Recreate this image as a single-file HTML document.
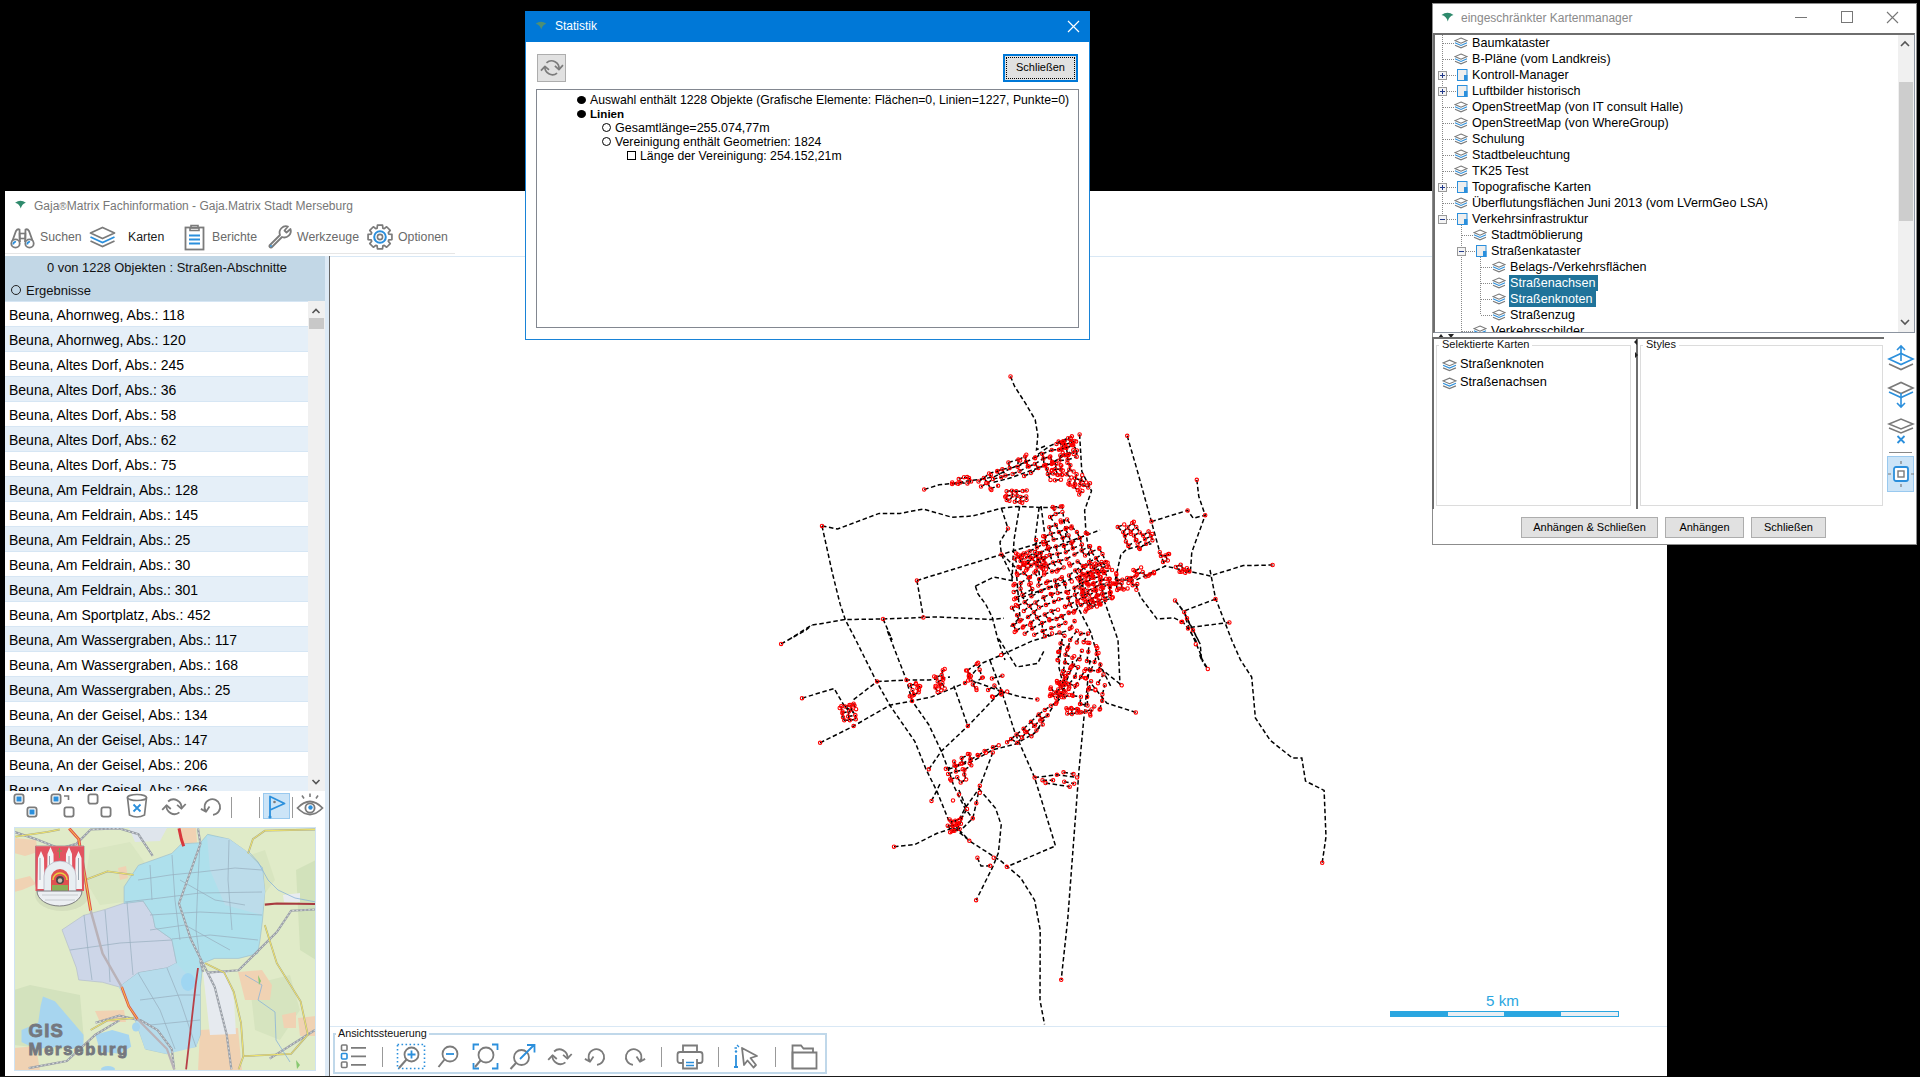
<!DOCTYPE html><html><head><meta charset="utf-8"><style>
*{margin:0;padding:0;box-sizing:border-box}
html,body{width:1920px;height:1077px;overflow:hidden;background:#000;font-family:"Liberation Sans",sans-serif;}
.abs{position:absolute}
.t{position:absolute;white-space:nowrap;line-height:1}
</style></head><body>
<div class="abs" style="left:5px;top:191px;width:1662px;height:886px;background:#fff"></div>
<svg class="abs" style="left:14px;top:200px" width="13" height="9" viewBox="0 0 13 10"><path d="M0.5,3 Q6.5,-1.5 12.5,3 Q8,4 6.8,9.5 Q5.5,4 0.5,3Z" fill="#2e8a6c"/></svg>
<div class="t" style="left:34px;top:200px;font-size:12px;color:#777">Gaja<span style="font-size:10px">®</span>Matrix Fachinformation - Gaja.Matrix Stadt Merseburg</div>
<div class="t" style="left:40px;top:231px;font-size:12.3px;color:#6a6a6a">Suchen</div>
<div class="t" style="left:128px;top:231px;font-size:12.3px;color:#1a1a1a">Karten</div>
<div class="t" style="left:212px;top:231px;font-size:12.3px;color:#6a6a6a">Berichte</div>
<div class="t" style="left:297px;top:231px;font-size:12.3px;color:#6a6a6a">Werkzeuge</div>
<div class="t" style="left:398px;top:231px;font-size:12.3px;color:#6a6a6a">Optionen</div>
<svg class="abs" style="left:9px;top:227px" width="27" height="22" viewBox="0 0 27 22"><path d="M3,15 L7,4 Q8.5,1.5 10.5,2.5 L11,15" fill="none" stroke="#7b7b7b" stroke-width="1.8"/><path d="M24,15 L20,4 Q18.5,1.5 16.5,2.5 L16,15" fill="none" stroke="#7b7b7b" stroke-width="1.8"/><rect x="10.5" y="6.5" width="6" height="5" fill="none" stroke="#7b7b7b" stroke-width="1.6"/><circle cx="6.5" cy="16.5" r="4.2" fill="#fff" stroke="#7b7b7b" stroke-width="1.8"/><circle cx="20.5" cy="16.5" r="4.2" fill="#fff" stroke="#7b7b7b" stroke-width="1.8"/><path d="M4.5,17.5 A2,2 0 0,1 7,15" stroke="#2b8fdc" stroke-width="1.8" fill="none"/><path d="M18.5,17.5 A2,2 0 0,1 21,15" stroke="#2b8fdc" stroke-width="1.8" fill="none"/></svg>
<svg class="abs" style="left:89px;top:226px" width="27" height="23" viewBox="0 0 27 23"><path d="M1.5,7 L13.5,1.5 L25.5,7 L13.5,12.5Z" fill="none" stroke="#7b7b7b" stroke-width="1.8" stroke-linejoin="round"/><path d="M1.5,11 L13.5,16.5 L25.5,11" fill="none" stroke="#2b8fdc" stroke-width="1.8"/><path d="M1.5,15 L13.5,20.5 L25.5,15" fill="none" stroke="#7b7b7b" stroke-width="1.8"/></svg>
<svg class="abs" style="left:184px;top:224px" width="21" height="27" viewBox="0 0 21 27"><rect x="1.5" y="3.5" width="18" height="22" fill="none" stroke="#7b7b7b" stroke-width="1.8"/><path d="M7,4 V1.5 H14 V4 M6,4 H15 V6.5 H6Z" fill="none" stroke="#7b7b7b" stroke-width="1.6"/><path d="M5,11.5 H16 M5,15.5 H16 M5,19.5 H16" stroke="#2b8fdc" stroke-width="1.8"/></svg>
<svg class="abs" style="left:266px;top:224px" width="27" height="27" viewBox="0 0 27 27"><path d="M3.5,21.5 L14,11 A6.5,6.5 0 0,1 22,2.5 L18.5,6.5 L20.5,8.5 L24.5,5 A6.5,6.5 0 0,1 16,13 L5.5,23.5 A1.5,1.5 0 0,1 3.5,21.5Z" fill="none" stroke="#7b7b7b" stroke-width="1.8" stroke-linejoin="round"/><circle cx="5" cy="22" r="0.9" fill="#2b8fdc"/></svg>
<svg class="abs" style="left:367px;top:224px" width="26" height="26" viewBox="0 0 26 26"><path d="M24.93,10.46 L24.93,15.54 L21.84,15.87 L21.29,17.22 L23.23,19.64 L19.64,23.23 L17.22,21.29 L15.87,21.84 L15.54,24.93 L10.46,24.93 L10.13,21.84 L8.78,21.29 L6.36,23.23 L2.77,19.64 L4.71,17.22 L4.16,15.87 L1.07,15.54 L1.07,10.46 L4.16,10.13 L4.71,8.78 L2.77,6.36 L6.36,2.77 L8.78,4.71 L10.13,4.16 L10.46,1.07 L15.54,1.07 L15.87,4.16 L17.22,4.71 L19.64,2.77 L23.23,6.36 L21.29,8.78 L21.84,10.13Z" fill="none" stroke="#7b7b7b" stroke-width="1.7" stroke-linejoin="round"/><circle cx="13" cy="13" r="5.8" fill="none" stroke="#2b8fdc" stroke-width="2"/><circle cx="13" cy="13" r="2.6" fill="none" stroke="#7b7b7b" stroke-width="1.6"/></svg>
<svg class="abs" style="left:13px;top:793px" width="26" height="27" viewBox="0 0 26 27"><rect x="1.4" y="1.4" width="9.2" height="9.2" rx="2" fill="#fff" stroke="#7b7b7b" stroke-width="1.8"/><rect x="3.5" y="3.5" width="5" height="5" fill="#2b8fdc"/><rect x="14.4" y="14.4" width="9.2" height="9.2" rx="2" fill="#fff" stroke="#7b7b7b" stroke-width="1.8"/><rect x="16.5" y="16.5" width="5" height="5" fill="#2b8fdc"/></svg>
<svg class="abs" style="left:50px;top:793px" width="26" height="27" viewBox="0 0 26 27"><rect x="1.4" y="1.4" width="9.2" height="9.2" rx="2" fill="#fff" stroke="#7b7b7b" stroke-width="1.8"/><rect x="3.5" y="3.5" width="5" height="5" fill="#2b8fdc"/><rect x="14.4" y="14.4" width="9.2" height="9.2" rx="2" fill="#fff" stroke="#7b7b7b" stroke-width="1.8"/><path d="M14,3 H18.5 V7" fill="none" stroke="#7b7b7b" stroke-width="1.6"/></svg>
<svg class="abs" style="left:87px;top:793px" width="26" height="27" viewBox="0 0 26 27"><rect x="1.4" y="1.4" width="9.2" height="9.2" rx="2" fill="#fff" stroke="#7b7b7b" stroke-width="1.8"/><rect x="14.4" y="14.4" width="9.2" height="9.2" rx="2" fill="#fff" stroke="#7b7b7b" stroke-width="1.8"/></svg>
<svg class="abs" style="left:125px;top:793px" width="24" height="27" viewBox="0 0 24 27"><ellipse cx="12" cy="4.5" rx="9.5" ry="3" fill="none" stroke="#7b7b7b" stroke-width="1.7"/><path d="M2.5,4.5 L4.5,22 Q12,26 19.5,22 L21.5,4.5" fill="none" stroke="#7b7b7b" stroke-width="1.7"/><path d="M8.5,11.5 L15.5,18.5 M15.5,11.5 L8.5,18.5" stroke="#2b8fdc" stroke-width="1.8"/></svg>
<svg class="abs" style="left:160px;top:793px" width="28" height="28" viewBox="0 0 28 28"><path d="M8.10,8.50 A8.0,8.0 0 0,1 21.40,15.50" fill="none" stroke="#7b7b7b" stroke-width="1.8"/><path d="M17.10,11.80 L21.40,15.70 L25.70,11.00" fill="none" stroke="#7b7b7b" stroke-width="1.8" stroke-linejoin="round"/><path d="M19.40,19.40 A8.0,8.0 0 0,1 6.50,12.40" fill="none" stroke="#7b7b7b" stroke-width="1.8"/><path d="M2.20,16.80 L6.50,12.30 L10.80,16.00" fill="none" stroke="#7b7b7b" stroke-width="1.8" stroke-linejoin="round"/></svg>
<svg class="abs" style="left:199px;top:793px" width="28" height="28" viewBox="0 0 28 28"><path d="M14.00,21.80 A7.8,7.8 0 1,0 7.00,18.60" fill="none" stroke="#7b7b7b" stroke-width="1.8"/><path d="M1.90,15.90 L7.00,18.70 L10.50,13.60" fill="none" stroke="#7b7b7b" stroke-width="1.8" stroke-linejoin="round"/></svg>
<div class="abs" style="left:231px;top:797px;width:1px;height:21px;background:#999"></div>
<div class="abs" style="left:259px;top:797px;width:1px;height:21px;background:#999"></div>
<div class="abs" style="left:292px;top:797px;width:1px;height:21px;background:#999"></div>
<div class="abs" style="left:263px;top:793px;width:27px;height:26px;background:#cce4f7;border:1px solid #99c9ef"></div>
<svg class="abs" style="left:263px;top:794px" width="27" height="26" viewBox="0 0 27 26"><path d="M7,24 V2.5 L21.5,9.5 L7,16" fill="none" stroke="#2b8fdc" stroke-width="1.8" stroke-linejoin="round"/><circle cx="7" cy="23" r="1.6" fill="#2b8fdc"/><circle cx="11.5" cy="8" r="1.3" fill="#7b7b7b"/></svg>
<svg class="abs" style="left:296px;top:792px" width="28" height="27" viewBox="0 0 28 27"><path d="M1.5,16 Q14,3 26.5,16 Q14,29 1.5,16Z" fill="none" stroke="#7b7b7b" stroke-width="1.8"/><circle cx="14" cy="16" r="4.6" fill="none" stroke="#7b7b7b" stroke-width="1.8"/><circle cx="14.5" cy="15.5" r="2.2" fill="#2b8fdc"/><path d="M14,1.5 V5 M6,3.5 L8,6.5 M22,3.5 L20,6.5" stroke="#7b7b7b" stroke-width="1.6"/></svg>
<svg class="abs" style="left:340px;top:1043px" width="28" height="27" viewBox="0 0 28 27"><rect x="1.5" y="2" width="5.5" height="5.5" rx="1" fill="none" stroke="#7b7b7b" stroke-width="1.6"/><rect x="1.5" y="10.5" width="5.5" height="5.5" rx="1" fill="none" stroke="#2b8fdc" stroke-width="1.6"/><rect x="1.5" y="19" width="5.5" height="5.5" rx="1" fill="none" stroke="#7b7b7b" stroke-width="1.6"/><path d="M11,4.8 H26 M11,13.3 H26 M11,21.8 H26" stroke="#7b7b7b" stroke-width="1.8"/></svg>
<div class="abs" style="left:382px;top:1047px;width:1px;height:20px;background:#999"></div>
<div class="abs" style="left:661px;top:1047px;width:1px;height:20px;background:#999"></div>
<div class="abs" style="left:718px;top:1047px;width:1px;height:20px;background:#999"></div>
<div class="abs" style="left:775px;top:1047px;width:1px;height:20px;background:#999"></div>
<svg class="abs" style="left:396px;top:1043px" width="31" height="28" viewBox="0 0 31 28"><rect x="1.5" y="1.5" width="27" height="24" fill="none" stroke="#2b8fdc" stroke-width="1.6" stroke-dasharray="1.6 2.4"/><circle cx="15.5" cy="11.5" r="7" fill="none" stroke="#7b7b7b" stroke-width="1.8"/><path d="M11.5,11.5 H19.5 M15.5,7.5 V15.5" stroke="#2b8fdc" stroke-width="1.8"/><path d="M10.5,16.5 L3,25" stroke="#7b7b7b" stroke-width="2"/></svg>
<svg class="abs" style="left:437px;top:1043px" width="24" height="28" viewBox="0 0 24 28"><circle cx="13" cy="11" r="7.5" fill="none" stroke="#7b7b7b" stroke-width="1.8"/><path d="M9,11 H17" stroke="#2b8fdc" stroke-width="1.8"/><path d="M7.5,16.5 L1.5,24" stroke="#7b7b7b" stroke-width="2"/></svg>
<svg class="abs" style="left:472px;top:1043px" width="28" height="28" viewBox="0 0 28 28"><path d="M1.5,7 V1.5 H7 M20,1.5 H25.5 V7 M25.5,20 V25.5 H20 M7,25.5 H1.5 V20" fill="none" stroke="#2b8fdc" stroke-width="1.8"/><circle cx="14" cy="12" r="7.5" fill="none" stroke="#7b7b7b" stroke-width="1.8"/><path d="M8.5,17.5 L3,24" stroke="#7b7b7b" stroke-width="2"/></svg>
<svg class="abs" style="left:509px;top:1043px" width="28" height="28" viewBox="0 0 28 28"><circle cx="12.5" cy="14.5" r="7.5" fill="none" stroke="#7b7b7b" stroke-width="1.8"/><path d="M7,20 L1.5,26" stroke="#7b7b7b" stroke-width="2"/><path d="M11,16 L25,2 M18,2 H25.5 V9.5" fill="none" stroke="#2b8fdc" stroke-width="1.8"/></svg>
<svg class="abs" style="left:546px;top:1043px" width="28" height="28" viewBox="0 0 28 28"><path d="M8.10,8.50 A8.0,8.0 0 0,1 21.40,15.50" fill="none" stroke="#7b7b7b" stroke-width="1.8"/><path d="M17.10,11.80 L21.40,15.70 L25.70,11.00" fill="none" stroke="#7b7b7b" stroke-width="1.8" stroke-linejoin="round"/><path d="M19.40,19.40 A8.0,8.0 0 0,1 6.50,12.40" fill="none" stroke="#7b7b7b" stroke-width="1.8"/><path d="M2.20,16.80 L6.50,12.30 L10.80,16.00" fill="none" stroke="#7b7b7b" stroke-width="1.8" stroke-linejoin="round"/></svg>
<svg class="abs" style="left:583px;top:1043px" width="28" height="28" viewBox="0 0 28 28"><path d="M14.00,21.80 A7.8,7.8 0 1,0 7.00,18.60" fill="none" stroke="#7b7b7b" stroke-width="1.8"/><path d="M1.90,15.90 L7.00,18.70 L10.50,13.60" fill="none" stroke="#7b7b7b" stroke-width="1.8" stroke-linejoin="round"/></svg>
<svg class="abs" style="left:619px;top:1043px" width="28" height="28" viewBox="0 0 28 28"><path d="M14.00,21.80 A7.8,7.8 0 1,1 21.00,18.60" fill="none" stroke="#7b7b7b" stroke-width="1.8"/><path d="M26.10,15.90 L21.00,18.70 L17.50,13.60" fill="none" stroke="#7b7b7b" stroke-width="1.8" stroke-linejoin="round"/></svg>
<svg class="abs" style="left:676px;top:1043px" width="28" height="28" viewBox="0 0 28 28"><path d="M7,9 V2.5 H21 V9" fill="none" stroke="#7b7b7b" stroke-width="1.8"/><rect x="1.5" y="9" width="25" height="11" rx="2.5" fill="none" stroke="#7b7b7b" stroke-width="1.8"/><path d="M7,16 V25.5 H21 V16" fill="#fff" stroke="#7b7b7b" stroke-width="1.8"/><path d="M10,19.5 H18 M10,22.5 H18" stroke="#2b8fdc" stroke-width="1.6"/></svg>
<svg class="abs" style="left:733px;top:1043px" width="28" height="28" viewBox="0 0 28 28"><path d="M3,12 V24 M1,24 H5" stroke="#2b8fdc" stroke-width="1.8"/><circle cx="3" cy="8.5" r="1.2" fill="#2b8fdc"/><path d="M9,5 L24,13 L17.5,15 L23,22 L20.5,24.5 L14.5,17.5 L11,22Z" fill="none" stroke="#7b7b7b" stroke-width="1.8" stroke-linejoin="round"/><path d="M4,2 L6,4 M1.5,5 H4" stroke="#2b8fdc" stroke-width="1.3"/></svg>
<svg class="abs" style="left:791px;top:1043px" width="28" height="28" viewBox="0 0 28 28"><path d="M1.5,25.5 V2.5 H10 L12.5,5.5 H22 V9" fill="none" stroke="#7b7b7b" stroke-width="1.8"/><path d="M1.5,9.5 H25.5 V25.5 H1.5Z" fill="none" stroke="#7b7b7b" stroke-width="1.8"/></svg>
<div class="abs" style="left:5px;top:253px;width:450px;height:1px;background:#e6e6e6"></div>
<div class="abs" style="left:5px;top:256px;width:320px;height:45px;background:#c2d7e6"></div>
<div class="t" style="left:7px;width:320px;text-align:center;top:262px;font-size:12.9px;color:#111">0 von 1228 Objekten : Straßen-Abschnitte</div>
<div class="abs" style="left:11px;top:285px;width:10px;height:10px;border:1px solid #222;border-radius:50%"></div>
<div class="t" style="left:26px;top:284px;font-size:13px;color:#111">Ergebnisse</div>
<div class="abs" style="left:5px;top:301px;width:303px;height:490px;overflow:hidden;background:#fff">
<div class="abs" style="left:0;top:0px;width:303px;height:25px;background:#fff;border-top:1px solid #d6e6f4"></div>
<div class="t" style="left:4px;top:7px;font-size:14px;color:#000">Beuna, Ahornweg, Abs.: 118</div>
<div class="abs" style="left:0;top:25px;width:303px;height:25px;background:#e5eff8;border-top:1px solid #d6e6f4"></div>
<div class="t" style="left:4px;top:32px;font-size:14px;color:#000">Beuna, Ahornweg, Abs.: 120</div>
<div class="abs" style="left:0;top:50px;width:303px;height:25px;background:#fff;border-top:1px solid #d6e6f4"></div>
<div class="t" style="left:4px;top:57px;font-size:14px;color:#000">Beuna, Altes Dorf, Abs.: 245</div>
<div class="abs" style="left:0;top:75px;width:303px;height:25px;background:#e5eff8;border-top:1px solid #d6e6f4"></div>
<div class="t" style="left:4px;top:82px;font-size:14px;color:#000">Beuna, Altes Dorf, Abs.: 36</div>
<div class="abs" style="left:0;top:100px;width:303px;height:25px;background:#fff;border-top:1px solid #d6e6f4"></div>
<div class="t" style="left:4px;top:107px;font-size:14px;color:#000">Beuna, Altes Dorf, Abs.: 58</div>
<div class="abs" style="left:0;top:125px;width:303px;height:25px;background:#e5eff8;border-top:1px solid #d6e6f4"></div>
<div class="t" style="left:4px;top:132px;font-size:14px;color:#000">Beuna, Altes Dorf, Abs.: 62</div>
<div class="abs" style="left:0;top:150px;width:303px;height:25px;background:#fff;border-top:1px solid #d6e6f4"></div>
<div class="t" style="left:4px;top:157px;font-size:14px;color:#000">Beuna, Altes Dorf, Abs.: 75</div>
<div class="abs" style="left:0;top:175px;width:303px;height:25px;background:#e5eff8;border-top:1px solid #d6e6f4"></div>
<div class="t" style="left:4px;top:182px;font-size:14px;color:#000">Beuna, Am Feldrain, Abs.: 128</div>
<div class="abs" style="left:0;top:200px;width:303px;height:25px;background:#fff;border-top:1px solid #d6e6f4"></div>
<div class="t" style="left:4px;top:207px;font-size:14px;color:#000">Beuna, Am Feldrain, Abs.: 145</div>
<div class="abs" style="left:0;top:225px;width:303px;height:25px;background:#e5eff8;border-top:1px solid #d6e6f4"></div>
<div class="t" style="left:4px;top:232px;font-size:14px;color:#000">Beuna, Am Feldrain, Abs.: 25</div>
<div class="abs" style="left:0;top:250px;width:303px;height:25px;background:#fff;border-top:1px solid #d6e6f4"></div>
<div class="t" style="left:4px;top:257px;font-size:14px;color:#000">Beuna, Am Feldrain, Abs.: 30</div>
<div class="abs" style="left:0;top:275px;width:303px;height:25px;background:#e5eff8;border-top:1px solid #d6e6f4"></div>
<div class="t" style="left:4px;top:282px;font-size:14px;color:#000">Beuna, Am Feldrain, Abs.: 301</div>
<div class="abs" style="left:0;top:300px;width:303px;height:25px;background:#fff;border-top:1px solid #d6e6f4"></div>
<div class="t" style="left:4px;top:307px;font-size:14px;color:#000">Beuna, Am Sportplatz, Abs.: 452</div>
<div class="abs" style="left:0;top:325px;width:303px;height:25px;background:#e5eff8;border-top:1px solid #d6e6f4"></div>
<div class="t" style="left:4px;top:332px;font-size:14px;color:#000">Beuna, Am Wassergraben, Abs.: 117</div>
<div class="abs" style="left:0;top:350px;width:303px;height:25px;background:#fff;border-top:1px solid #d6e6f4"></div>
<div class="t" style="left:4px;top:357px;font-size:14px;color:#000">Beuna, Am Wassergraben, Abs.: 168</div>
<div class="abs" style="left:0;top:375px;width:303px;height:25px;background:#e5eff8;border-top:1px solid #d6e6f4"></div>
<div class="t" style="left:4px;top:382px;font-size:14px;color:#000">Beuna, Am Wassergraben, Abs.: 25</div>
<div class="abs" style="left:0;top:400px;width:303px;height:25px;background:#fff;border-top:1px solid #d6e6f4"></div>
<div class="t" style="left:4px;top:407px;font-size:14px;color:#000">Beuna, An der Geisel, Abs.: 134</div>
<div class="abs" style="left:0;top:425px;width:303px;height:25px;background:#e5eff8;border-top:1px solid #d6e6f4"></div>
<div class="t" style="left:4px;top:432px;font-size:14px;color:#000">Beuna, An der Geisel, Abs.: 147</div>
<div class="abs" style="left:0;top:450px;width:303px;height:25px;background:#fff;border-top:1px solid #d6e6f4"></div>
<div class="t" style="left:4px;top:457px;font-size:14px;color:#000">Beuna, An der Geisel, Abs.: 206</div>
<div class="abs" style="left:0;top:475px;width:303px;height:25px;background:#e5eff8;border-top:1px solid #d6e6f4"></div>
<div class="t" style="left:4px;top:482px;font-size:14px;color:#000">Beuna, An der Geisel, Abs.: 266</div>
</div>
<div class="abs" style="left:308px;top:301px;width:17px;height:490px;background:#f0f0f0"></div>
<div class="abs" style="left:309px;top:318px;width:15px;height:11px;background:#c8c8c8"></div>
<svg class="abs" style="left:311px;top:307px" width="10" height="8" viewBox="0 0 10 8"><path d="M1.5,6 L5,2.5 L8.5,6" fill="none" stroke="#555" stroke-width="1.6"/></svg>
<svg class="abs" style="left:311px;top:778px" width="10" height="8" viewBox="0 0 10 8"><path d="M1.5,2 L5,5.5 L8.5,2" fill="none" stroke="#555" stroke-width="1.6"/></svg>
<div class="abs" style="left:325px;top:256px;width:4px;height:821px;background:#ddeaf6"></div>
<div class="abs" style="left:329px;top:256px;width:1px;height:821px;background:#666"></div>
<div class="abs" style="left:330px;top:256px;width:1337px;height:1px;background:#d9e8f5"></div>
<div class="abs" style="left:330px;top:1026px;width:1337px;height:1px;background:#d9e8f5"></div>
<div class="t" style="left:1486px;top:993px;font-size:15.2px;color:#2aa6e0">5 km</div>
<div class="abs" style="left:1390px;top:1011px;width:229px;height:6px;background:#e8eef4;border:1px solid #2aa6e0"></div>
<div class="abs" style="left:1390px;top:1011px;width:58px;height:6px;background:#2aa6e0"></div>
<div class="abs" style="left:1504px;top:1011px;width:57px;height:6px;background:#2aa6e0"></div>
<div class="abs" style="left:333px;top:1033px;width:494px;height:41px;border:2px solid #c0d8ea"></div>
<div class="t" style="left:336px;top:1028px;font-size:10.8px;color:#111;background:#fff;padding:0 2px">Ansichtssteuerung</div>
<svg class="abs" style="left:0;top:0" width="1920" height="1077" viewBox="0 0 1920 1077">
<path d="M1010.5,376.4 L1014.4,386.0 L1026.0,404.2 L1035.2,419.8 L1037.8,435.4 L1036.5,449.7 L1045.0,446.0 M924.2,489.5 L939.0,484.8 L952.0,483.5 L967.6,481.0 L978.0,479.6 L993.6,477.0 L1009.2,469.2 L1030.0,460.1 L1050.0,445.8 L1068.0,438.0 M993.6,482.2 L1009.2,478.3 L1027.4,471.8 L1050.0,464.0 L1070.0,452.0 M822.0,525.9 L837.6,529.0 L879.2,513.4 L900.0,513.4 L923.4,509.0 L952.0,517.3 L972.8,516.0 L1001.4,508.2 L1019.6,506.4 L1039.1,507.4 L1060.0,507.4 M822.0,525.9 L832.4,573.2 L840.2,604.4 L845.4,620.0 L855.8,640.0 L875.8,680.1 L889.8,705.2 L914.8,741.4 L926.0,769.3 L937.1,791.6 L948.3,819.4 L953.8,827.8 M916.9,580.5 L1001.4,554.5 L1043.0,542.0 M916.9,580.5 L923.4,617.4 M788.2,640.0 L811.6,625.2 L845.4,619.5 L883.1,619.0 L923.4,617.4 L936.4,616.9 L991.0,619.5 L1004.0,618.2 M883.1,619.0 L892.2,640.0 L887.0,630.0 L906.5,680.1 L912.1,701.0 L928.8,724.7 L941.3,751.2 L948.3,769.3 L953.8,786.0 L965.0,808.3 L973.3,819.4 M975.4,586.2 L993.6,577.1 L1014.4,581.0 M975.4,586.2 L978.0,594.0 L985.8,604.4 L992.3,617.4 L998.0,640.0 L1005.0,660.0 M1001.4,508.2 L1008.0,528.5 L1000.0,542.0 L1001.4,554.5 L1008.0,568.0 L1014.0,580.0 M1019.6,506.4 L1014.0,540.0 L1012.0,580.0 M1039.1,507.4 L1035.0,540.0 L1040.0,580.0 M781.1,643.9 L806.2,630.0 L811.6,625.2 M802.0,698.2 L834.1,688.5 L843.8,705.2 L853.6,713.0 M877.2,681.5 L906.5,680.1 L928.8,680.1 L950.0,677.0 M853.6,699.6 L877.2,681.5 M820.1,742.8 L853.6,726.1 L889.8,705.2 L912.1,701.0 L931.6,696.9 L965.0,682.9 L981.7,663.4 L1001.2,655.1 L1031.8,641.1 L1070.0,630.0 M928.8,769.3 L941.3,751.2 L967.8,726.1 L1001.2,691.3 L1020.7,696.9 L1037.4,699.6 M953.8,685.7 L967.8,726.1 M970.6,680.1 L1001.2,691.3 M990.0,660.6 L1001.2,689.9 L1015.1,733.1 L1034.6,777.6 L1055.5,845.9 L1006.8,866.8 M948.3,769.3 L973.3,760.9 L992.8,749.8 L1015.1,744.2 L1034.6,733.1 L1048.6,713.6 L1062.5,691.3 L1070.0,671.8 L1080.0,655.0 M992.8,752.6 L978.9,788.8 L965.0,808.3 L956.6,825.0 M978.9,788.8 L995.6,808.3 L1001.2,825.0 L998.4,852.8 L992.8,866.8 L976.1,900.2 M894.0,846.7 L914.8,844.5 L937.1,833.3 L953.8,827.8 L970.6,841.7 L1001.2,861.2 L1020.7,877.9 L1034.6,900.2 L1040.2,930.0 L1040.0,1000.2 L1044.5,1024.3 M1034.6,777.6 L1056.9,774.8 L1077.1,777.4 M1045.6,783.0 L1069.7,786.7 M1090.0,660.0 L1084.6,710.6 L1079.0,770.0 L1073.4,844.2 L1067.8,918.5 L1061.2,979.8 M1210.0,570.0 L1215.5,598.2 L1232.2,641.3 L1240.5,660.0 L1251.7,677.1 L1255.4,718.0 L1270.2,740.3 L1292.5,758.1 L1301.8,758.1 L1305.5,781.1 L1324.1,790.4 L1326.0,836.8 L1322.2,862.8 M1185.0,615.0 L1200.2,644.1 L1201.6,660.0 L1199.7,654.9 L1207.8,669.0 M1092.0,684.6 L1106.8,703.1 L1135.8,712.4 M1100.0,668.0 L1121.7,685.3 M1079.6,434.4 L1081.8,471.4 L1091.5,490.9 L1084.6,510.4 L1086.0,532.7 L1090.0,560.0 M1127.2,435.8 L1137.5,471.4 L1151.4,521.6 L1159.8,552.2 L1165.0,566.0 M1151.4,521.6 L1187.6,510.4 L1193.2,518.2 L1205.2,515.2 L1191.8,552.2 L1190.4,571.7 L1209.9,575.9 L1243.3,565.6 L1272.6,565.0 M1196.8,479.8 L1198.8,496.5 L1205.2,515.2 M1115.2,580.0 L1136.1,580.0 L1165.3,566.1 L1190.4,571.7 M1136.1,585.6 L1140.3,596.8 L1157.0,619.0 L1173.7,617.7 L1182.1,621.8 M1175.7,601.0 L1184.8,613.5 L1200.2,644.1 M1184.8,610.7 L1215.5,599.0 M1190.4,627.4 L1229.4,622.4 M1115.2,580.0 L1120.8,555.0 L1126.4,549.4 L1137.5,546.6 L1151.4,543.8 M1104.0,600.0 L1118.0,640.0 L1120.0,685.0 M1002.0,554.0 L1016.0,568.0 L1020.0,617.6 L1009.0,628.0 M1041.0,506.0 L1045.0,536.0 L1052.0,561.0 M1062.0,505.0 L1066.0,536.0 M998.8,638.8 L1016.4,667.0 L1037.6,663.5 L1044.7,649.4 M1076.0,603.5 L1090.5,631.7 L1101.0,667.0 L1111.7,688.0 M1062.0,638.8 L1058.8,667.0 L1065.8,695.0 M1020.0,560.0 L1060.0,545.0 L1100.0,530.0 M1015.0,600.0 L1055.0,585.0 L1110.0,565.0 M1175.0,600.5 L1184.7,612.2 L1186.0,619.2 L1188.9,627.5 L1195.8,642.8 L1200.0,652.6 L1202.8,662.3 L1207.5,668.7 M1182.0,620.6 L1190.3,631.7 L1197.2,642.8 M979.8,785.8 L976.3,803.2 L972.8,818.3 L963.5,827.5 L952.0,830.0 M958.9,790.0 L967.0,809.0 L959.0,823.0 M931.5,800.9 L937.0,790.0 L941.0,782.0 M949.6,819.4 L969.3,840.8 M977.4,857.7 L981.0,866.0 L990.2,865.8 M978.5,481.6 L983.8,478.0 M981.0,486.6 L987.6,482.9 M983.8,478.0 L989.1,473.5 M983.8,478.0 L987.6,482.9 M987.6,482.9 L993.0,479.1 M987.6,482.9 L990.5,488.8 M990.5,488.8 L998.1,485.8 M989.1,473.5 L997.3,471.0 M989.1,473.5 L993.0,479.1 M993.0,479.1 L1001.2,477.3 M997.3,471.0 L1002.3,469.3 M997.3,471.0 L1001.2,477.3 M1001.2,477.3 L1005.5,475.5 M1002.3,469.3 L1009.7,468.1 M1002.3,469.3 L1005.5,475.5 M1005.5,475.5 L1012.6,474.0 M1008.4,462.4 L1018.4,459.6 M1008.4,462.4 L1009.7,468.1 M1009.7,468.1 L1017.6,466.8 M1012.6,474.0 L1019.5,471.1 M1018.4,459.6 L1025.1,456.4 M1018.4,459.6 L1017.6,466.8 M1017.6,466.8 L1026.0,461.7 M1019.5,471.1 L1028.7,466.6 M1024.1,476.1 L1031.0,473.0 M1025.1,456.4 L1026.0,461.7 M1026.0,461.7 L1035.2,457.5 M1026.0,461.7 L1028.7,466.6 M1028.7,466.6 L1034.8,463.9 M1031.0,473.0 L1038.3,467.9 M1035.2,457.5 L1042.2,453.9 M1034.8,463.9 L1043.5,458.5 M1034.8,463.9 L1038.3,467.9 M1038.3,467.9 L1044.1,465.5 M1042.2,453.9 L1051.8,450.0 M1042.2,453.9 L1043.5,458.5 M1043.5,458.5 L1050.3,456.5 M1043.5,458.5 L1044.1,465.5 M1044.1,465.5 L1052.1,461.8 M1051.8,450.0 L1060.0,449.4 M1050.3,456.5 L1052.1,461.8 M1052.1,461.8 L1059.4,460.6 M1056.5,443.9 L1062.4,441.9 M1060.0,449.4 L1066.4,448.1 M1060.3,455.5 L1067.6,454.6 M1060.3,455.5 L1059.4,460.6 M1059.4,460.6 L1067.5,459.9 M1062.4,441.9 L1070.9,439.5 M1062.4,441.9 L1066.4,448.1 M1066.4,448.1 L1073.3,445.2 M1066.4,448.1 L1067.6,454.6 M1067.6,454.6 L1076.9,450.5 M1067.6,454.6 L1067.5,459.9 M1067.5,459.9 L1076.7,456.7 M1070.9,439.5 L1073.3,445.2 M1073.3,445.2 L1076.9,450.5 M1076.9,450.5 L1076.7,456.7 M1058.9,449.8 L1062.5,448.7 M1058.6,441.6 L1063.2,441.2 M1058.6,441.6 L1062.4,446.0 M1062.4,446.0 L1065.0,444.4 M1062.4,446.0 L1062.5,448.7 M1062.5,448.7 L1066.6,447.3 M1062.8,453.0 L1065.0,455.2 M1065.0,455.2 L1068.8,454.6 M1063.2,441.2 L1068.1,438.2 M1063.2,441.2 L1065.0,444.4 M1065.0,444.4 L1070.9,442.9 M1065.0,444.4 L1066.6,447.3 M1066.6,447.3 L1072.7,445.2 M1068.1,438.2 L1071.9,436.3 M1068.1,438.2 L1070.9,442.9 M1070.9,442.9 L1074.3,440.9 M1070.9,442.9 L1072.7,445.2 M1073.2,450.3 L1073.7,453.9 M952.1,484.1 L957.4,483.6 M957.4,483.6 L960.3,482.6 M958.7,479.1 L964.0,477.2 M960.3,482.6 L967.4,483.5 M964.0,477.2 L969.0,478.0 M967.4,483.5 L971.1,481.5 M969.0,478.0 L971.1,481.5 M1006.6,491.2 L1011.9,490.7 M1006.3,495.7 L1012.7,495.5 M1006.3,495.7 L1006.7,499.9 M1006.7,499.9 L1009.4,500.8 M1011.9,490.7 L1016.2,491.2 M1011.9,490.7 L1012.7,495.5 M1012.7,495.5 L1009.4,500.8 M1016.2,491.2 L1022.7,491.1 M1016.2,491.2 L1017.2,495.8 M1017.2,495.8 L1014.8,501.8 M1014.8,501.8 L1020.3,502.1 M1022.7,491.1 L1026.7,490.4 M1020.7,496.9 L1026.3,496.5 M1020.7,496.9 L1020.3,502.1 M1020.3,502.1 L1026.5,499.9 M1026.3,496.5 L1026.5,499.9 M1045.2,465.1 L1051.8,463.9 M1045.2,465.1 L1046.9,468.8 M1046.9,468.8 L1047.8,473.9 M1047.8,473.9 L1053.1,473.6 M1047.8,473.9 L1050.5,479.9 M1051.8,463.9 L1056.2,463.8 M1052.0,470.1 L1055.3,469.1 M1053.1,473.6 L1058.0,474.9 M1055.0,480.3 L1060.9,479.7 M1056.2,463.8 L1055.3,469.1 M1055.3,469.1 L1060.8,469.4 M1055.3,469.1 L1058.0,474.9 M1058.0,474.9 L1062.2,474.9 M1061.3,465.5 L1060.8,469.4 M1060.8,469.4 L1062.2,474.9 M1013.3,624.9 L1019.6,621.2 M1013.3,624.9 L1016.1,630.6 M1016.1,630.6 L1023.4,626.6 M1011.9,607.7 L1017.5,605.9 M1011.9,607.7 L1017.1,615.3 M1017.1,615.3 L1019.6,621.2 M1019.6,621.2 L1028.1,617.0 M1023.4,626.6 L1030.9,622.8 M1024.7,633.7 L1032.1,628.4 M1013.5,585.2 L1020.7,583.0 M1013.7,591.9 L1020.6,588.7 M1015.9,597.9 L1022.4,594.8 M1017.5,605.9 L1024.6,602.2 M1023.8,611.0 L1029.5,606.0 M1028.1,617.0 L1033.8,612.3 M1030.9,622.8 L1037.0,617.5 M1030.9,622.8 L1032.1,628.4 M1032.1,628.4 L1042.0,623.1 M1034.2,634.7 L1042.7,631.0 M1017.4,575.0 L1023.9,572.9 M1020.7,583.0 L1028.8,577.5 M1020.7,583.0 L1020.6,588.7 M1020.6,588.7 L1022.4,594.8 M1022.4,594.8 L1032.3,589.1 M1022.4,594.8 L1024.6,602.2 M1024.6,602.2 L1031.5,596.2 M1024.6,602.2 L1029.5,606.0 M1029.5,606.0 L1035.4,602.5 M1029.5,606.0 L1033.8,612.3 M1033.8,612.3 L1039.1,607.6 M1033.8,612.3 L1037.0,617.5 M1037.0,617.5 L1044.7,614.6 M1037.0,617.5 L1042.0,623.1 M1042.0,623.1 L1049.3,620.3 M1042.0,623.1 L1042.7,631.0 M1042.7,631.0 L1051.4,628.1 M1042.7,631.0 L1044.9,636.2 M1044.9,636.2 L1052.0,633.5 M1014.8,558.4 L1022.1,554.9 M1014.8,558.4 L1018.4,566.9 M1018.4,566.9 L1023.9,572.9 M1023.9,572.9 L1028.8,577.5 M1028.8,577.5 L1034.4,572.4 M1028.8,577.5 L1029.3,584.6 M1029.3,584.6 L1032.3,589.1 M1032.3,589.1 L1031.5,596.2 M1031.5,596.2 L1041.2,590.9 M1035.4,602.5 L1043.6,597.3 M1035.4,602.5 L1039.1,607.6 M1039.1,607.6 L1045.9,604.7 M1044.7,614.6 L1051.4,610.9 M1044.7,614.6 L1049.3,620.3 M1049.3,620.3 L1056.5,619.1 M1051.4,628.1 L1058.8,625.6 M1022.1,554.9 L1029.6,551.2 M1025.1,562.7 L1031.1,558.1 M1034.4,572.4 L1041.4,567.7 M1034.4,572.4 L1039.1,579.2 M1039.1,579.2 L1044.1,574.5 M1039.1,579.2 L1038.3,585.6 M1038.3,585.6 L1047.6,581.6 M1041.2,590.9 L1048.6,587.8 M1043.6,597.3 L1050.7,593.9 M1043.6,597.3 L1045.9,604.7 M1045.9,604.7 L1054.0,601.7 M1051.4,610.9 L1058.0,609.7 M1051.4,610.9 L1056.5,619.1 M1056.5,619.1 L1061.5,616.0 M1058.8,625.6 L1065.5,622.8 M1029.6,551.2 L1036.9,547.6 M1031.1,558.1 L1036.7,562.7 M1036.7,562.7 L1043.7,559.4 M1041.4,567.7 L1046.7,565.6 M1041.4,567.7 L1044.1,574.5 M1044.1,574.5 L1052.0,571.4 M1047.6,581.6 L1055.1,580.5 M1048.6,587.8 L1056.2,586.3 M1050.7,593.9 L1057.7,593.0 M1050.7,593.9 L1054.0,601.7 M1054.0,601.7 L1058.9,599.2 M1061.5,616.0 L1068.8,613.1 M1061.5,616.0 L1065.5,622.8 M1036.1,540.0 L1036.9,547.6 M1036.9,547.6 L1045.6,542.4 M1038.2,553.2 L1047.7,548.6 M1043.7,559.4 L1049.8,555.1 M1043.7,559.4 L1046.7,565.6 M1046.7,565.6 L1052.9,562.4 M1046.7,565.6 L1052.0,571.4 M1052.0,571.4 L1058.2,569.7 M1055.1,580.5 L1061.9,577.3 M1055.1,580.5 L1056.2,586.3 M1056.2,586.3 L1065.1,584.1 M1056.2,586.3 L1057.7,593.0 M1057.7,593.0 L1066.4,592.0 M1058.9,599.2 L1068.4,598.1 M1065.2,607.1 L1069.8,604.2 M1068.8,613.1 L1074.4,611.1 M1044.8,536.7 L1050.8,533.5 M1044.8,536.7 L1045.6,542.4 M1045.6,542.4 L1053.6,539.6 M1045.6,542.4 L1047.7,548.6 M1047.7,548.6 L1056.0,546.5 M1049.8,555.1 L1057.4,553.7 M1049.8,555.1 L1052.9,562.4 M1052.9,562.4 L1059.1,561.0 M1052.9,562.4 L1058.2,569.7 M1058.2,569.7 L1063.7,567.4 M1061.9,577.3 L1065.1,584.1 M1065.1,584.1 L1066.4,592.0 M1066.4,592.0 L1074.5,587.8 M1068.4,598.1 L1074.9,594.8 M1068.4,598.1 L1069.8,604.2 M1069.8,604.2 L1077.3,600.8 M1069.8,604.2 L1074.4,611.1 M1074.4,611.1 L1081.2,605.1 M1049.3,527.2 L1055.9,525.0 M1049.3,527.2 L1050.8,533.5 M1050.8,533.5 L1058.9,532.1 M1050.8,533.5 L1053.6,539.6 M1053.6,539.6 L1062.8,537.8 M1056.0,546.5 L1063.9,545.4 M1056.0,546.5 L1057.4,553.7 M1057.4,553.7 L1065.8,552.2 M1057.4,553.7 L1059.1,561.0 M1059.1,561.0 L1066.5,559.0 M1059.1,561.0 L1063.7,567.4 M1069.0,575.5 L1075.2,570.6 M1069.0,575.5 L1071.8,581.5 M1074.5,587.8 L1082.7,582.5 M1074.5,587.8 L1074.9,594.8 M1074.9,594.8 L1083.1,589.4 M1074.9,594.8 L1077.3,600.8 M1077.3,600.8 L1085.1,594.7 M1081.2,605.1 L1088.1,600.4 M1085.3,611.4 L1091.4,607.1 M1050.1,517.0 L1055.7,513.9 M1050.1,517.0 L1055.9,525.0 M1055.9,525.0 L1058.9,532.1 M1058.9,532.1 L1065.5,529.0 M1058.9,532.1 L1062.8,537.8 M1062.8,537.8 L1068.6,535.4 M1062.8,537.8 L1063.9,545.4 M1063.9,545.4 L1071.4,543.3 M1063.9,545.4 L1065.8,552.2 M1065.8,552.2 L1072.8,548.3 M1066.5,559.0 L1074.5,554.4 M1070.2,565.4 L1077.6,561.4 M1075.2,570.6 L1082.8,565.9 M1075.2,570.6 L1079.8,576.8 M1079.8,576.8 L1087.7,572.8 M1079.8,576.8 L1082.7,582.5 M1082.7,582.5 L1091.2,577.8 M1082.7,582.5 L1083.1,589.4 M1083.1,589.4 L1085.1,594.7 M1085.1,594.7 L1093.1,590.2 M1088.1,600.4 L1096.2,597.1 M1088.1,600.4 L1091.4,607.1 M1091.4,607.1 L1099.0,604.1 M1052.8,507.0 L1060.8,506.5 M1052.8,507.0 L1055.7,513.9 M1055.7,513.9 L1062.4,512.0 M1061.0,522.3 L1067.1,519.4 M1065.5,529.0 L1071.6,526.4 M1065.5,529.0 L1068.6,535.4 M1068.6,535.4 L1071.4,543.3 M1071.4,543.3 L1079.9,538.1 M1071.4,543.3 L1072.8,548.3 M1072.8,548.3 L1081.9,544.6 M1074.5,554.4 L1081.6,550.5 M1077.6,561.4 L1082.8,565.9 M1082.8,565.9 L1089.1,562.1 M1082.8,565.9 L1087.7,572.8 M1087.7,572.8 L1094.4,568.4 M1087.7,572.8 L1091.2,577.8 M1091.2,577.8 L1098.0,573.1 M1092.6,583.9 L1100.6,580.5 M1096.2,597.1 L1102.5,594.4 M1099.0,604.1 L1105.3,600.1 M1067.1,519.4 L1071.6,526.4 M1071.6,526.4 L1076.9,532.1 M1076.9,532.1 L1079.9,538.1 M1079.9,538.1 L1087.3,533.7 M1079.9,538.1 L1081.9,544.6 M1081.9,544.6 L1081.6,550.5 M1081.6,550.5 L1089.7,546.2 M1081.6,550.5 L1085.1,555.6 M1085.1,555.6 L1091.3,551.7 M1089.1,562.1 L1095.9,558.2 M1089.1,562.1 L1094.4,568.4 M1094.4,568.4 L1100.3,564.2 M1098.0,573.1 L1104.5,571.8 M1098.0,573.1 L1100.6,580.5 M1100.6,580.5 L1108.5,579.0 M1101.8,586.9 L1110.5,584.4 M1101.8,586.9 L1102.5,594.4 M1102.5,594.4 L1110.7,592.3 M1102.5,594.4 L1105.3,600.1 M1105.3,600.1 L1111.9,598.2 M1089.7,546.2 L1091.3,551.7 M1091.3,551.7 L1099.3,548.8 M1091.3,551.7 L1095.9,558.2 M1095.9,558.2 L1102.5,554.1 M1095.9,558.2 L1100.3,564.2 M1100.3,564.2 L1105.8,562.1 M1100.3,564.2 L1104.5,571.8 M1104.5,571.8 L1112.0,570.0 M1104.5,571.8 L1108.5,579.0 M1108.5,579.0 L1110.5,584.4 M1110.5,584.4 L1110.7,592.3 M1110.7,592.3 L1111.9,598.2 M1099.3,548.8 L1102.5,554.1 M1102.5,554.1 L1105.8,562.1 M1078.0,578.4 L1082.4,574.2 M1078.0,578.4 L1079.7,580.8 M1079.7,580.8 L1085.4,577.6 M1079.7,580.8 L1079.5,587.4 M1079.5,587.4 L1086.7,581.8 M1079.5,587.4 L1082.4,590.4 M1082.4,590.4 L1088.5,585.4 M1082.4,590.4 L1081.7,594.5 M1081.7,594.5 L1087.6,590.8 M1081.7,594.5 L1082.7,598.2 M1082.7,598.2 L1089.1,595.5 M1085.9,601.8 L1091.7,599.2 M1085.9,601.8 L1088.7,606.3 M1088.7,606.3 L1093.2,602.3 M1080.3,571.1 L1085.6,566.1 M1080.3,571.1 L1082.4,574.2 M1085.4,577.6 L1091.4,573.9 M1086.7,581.8 L1093.5,578.1 M1086.7,581.8 L1088.5,585.4 M1088.5,585.4 L1093.6,583.3 M1087.6,590.8 L1095.5,586.9 M1087.6,590.8 L1089.1,595.5 M1089.1,595.5 L1096.2,590.3 M1091.7,599.2 L1096.8,595.6 M1091.7,599.2 L1093.2,602.3 M1093.2,602.3 L1098.4,601.4 M1093.2,602.3 L1096.9,606.5 M1085.6,566.1 L1090.8,563.8 M1091.4,573.9 L1097.1,572.0 M1093.5,578.1 L1099.6,576.5 M1093.6,583.3 L1100.2,580.1 M1095.5,586.9 L1100.4,584.6 M1095.5,586.9 L1096.2,590.3 M1096.2,590.3 L1096.8,595.6 M1096.8,595.6 L1102.2,593.5 M1096.8,595.6 L1098.4,601.4 M1098.4,601.4 L1103.4,598.1 M1098.4,601.4 L1100.6,604.5 M1092.0,567.1 L1097.0,564.5 M1092.0,567.1 L1097.1,572.0 M1097.1,572.0 L1102.4,569.6 M1097.1,572.0 L1099.6,576.5 M1100.2,580.1 L1106.1,578.7 M1100.2,580.1 L1100.4,584.6 M1100.4,584.6 L1107.4,583.7 M1103.1,588.0 L1102.2,593.5 M1102.2,593.5 L1109.7,592.7 M1103.4,598.1 L1110.2,596.1 M1097.0,564.5 L1101.6,562.0 M1102.4,569.6 L1103.9,573.1 M1107.4,583.7 L1109.8,587.3 M1109.8,587.3 L1109.7,592.7 M1109.7,592.7 L1110.2,596.1 M1101.6,562.0 L1106.8,566.9 M1019.9,567.5 L1023.3,564.7 M1016.1,553.4 L1019.1,556.9 M1019.1,556.9 L1023.6,553.5 M1019.1,556.9 L1020.6,561.0 M1020.6,561.0 L1023.3,564.7 M1023.3,564.7 L1027.9,562.9 M1023.3,564.7 L1027.3,568.8 M1027.3,568.8 L1031.1,565.6 M1023.6,553.5 L1026.8,552.7 M1025.1,557.4 L1028.9,556.4 M1027.9,562.9 L1032.1,558.6 M1027.9,562.9 L1031.1,565.6 M1031.1,565.6 L1034.7,563.3 M1028.9,556.4 L1034.9,552.1 M1028.9,556.4 L1032.1,558.6 M1032.1,558.6 L1036.5,555.8 M1034.7,563.3 L1038.4,559.6 M1034.7,563.3 L1037.4,566.6 M1037.4,566.6 L1041.7,565.2 M1034.9,552.1 L1036.5,555.8 M1036.5,555.8 L1040.9,553.0 M1036.5,555.8 L1038.4,559.6 M1038.4,559.6 L1041.5,557.8 M1038.4,559.6 L1041.7,565.2 M1041.7,565.2 L1045.3,563.5 M1041.7,565.2 L1045.9,569.4 M1040.9,553.0 L1041.5,557.8 M1041.5,557.8 L1046.4,556.2 M1041.5,557.8 L1045.3,563.5 M1007.1,742.3 L1011.1,739.1 M1011.1,739.1 L1016.5,734.4 M1011.1,739.1 L1017.3,742.8 M1017.3,742.8 L1022.0,737.3 M1016.5,734.4 L1023.6,728.8 M1016.5,734.4 L1022.0,737.3 M1022.0,737.3 L1026.6,732.0 M1023.6,728.8 L1031.0,721.8 M1023.6,728.8 L1026.6,732.0 M1026.6,732.0 L1034.4,725.7 M1026.6,732.0 L1031.5,736.3 M1031.5,736.3 L1036.4,730.4 M1031.0,721.8 L1038.7,714.4 M1031.0,721.8 L1034.4,725.7 M1034.4,725.7 L1041.6,718.9 M1036.4,730.4 L1042.7,724.6 M1038.7,714.4 L1044.8,709.9 M1038.7,714.4 L1041.6,718.9 M1041.6,718.9 L1047.6,715.2 M1044.8,709.9 L1050.8,705.7 M1050.8,705.7 L1056.6,702.2 M1049.9,695.9 L1056.6,692.2 M1056.6,702.2 L1061.6,697.0 M1056.6,692.2 L1060.8,687.5 M1056.6,692.2 L1061.6,697.0 M1061.6,697.0 L1065.5,692.4 M1057.3,682.8 L1064.9,677.7 M1057.3,682.8 L1060.8,687.5 M1060.8,687.5 L1066.7,683.2 M1060.8,687.5 L1065.5,692.4 M1062.4,673.5 L1070.5,667.9 M1062.4,673.5 L1064.9,677.7 M945.8,768.8 L955.7,765.9 M948.1,773.9 L955.9,771.5 M950.2,779.2 L957.2,777.2 M954.1,761.6 L955.7,765.9 M955.7,765.9 L962.2,763.4 M955.7,765.9 L955.9,771.5 M955.9,771.5 L964.5,769.7 M957.2,777.2 L960.7,782.5 M960.7,782.5 L966.1,779.4 M961.7,758.0 L969.5,754.3 M961.7,758.0 L962.2,763.4 M962.2,763.4 L970.6,759.5 M964.5,769.7 L971.3,765.3 M964.5,769.7 L964.3,774.4 M964.3,774.4 L966.1,779.4 M969.5,754.3 L970.6,759.5 M970.6,759.5 L978.4,755.4 M970.6,759.5 L971.3,765.3 M978.4,755.4 L984.6,751.0 M984.6,751.0 L992.9,747.2 M992.9,747.2 L998.7,745.3 M909.8,696.3 L913.9,694.9 M910.1,685.1 L916.2,684.3 M910.1,685.1 L912.5,689.9 M912.5,689.9 L913.9,694.9 M913.9,694.9 L918.7,692.3 M917.4,688.3 L920.2,686.3 M917.4,688.3 L918.7,692.3 M935.4,687.6 L937.6,691.9 M936.1,677.2 L941.7,675.1 M937.7,681.6 L943.2,679.6 M937.7,681.6 L939.8,685.0 M939.8,685.0 L942.4,683.4 M939.8,685.0 L941.2,690.3 M942.8,670.2 L941.7,675.1 M941.7,675.1 L943.2,679.6 M942.4,683.4 L944.7,688.5 M841.2,706.3 L842.3,713.1 M842.3,713.1 L849.0,711.5 M842.3,713.1 L843.0,717.2 M843.0,717.2 L844.2,720.3 M844.2,720.3 L849.9,720.2 M845.0,706.6 L850.7,705.1 M845.0,706.6 L849.0,711.5 M849.0,711.5 L851.5,709.5 M849.0,711.5 L848.1,716.6 M848.1,716.6 L855.2,715.1 M848.1,716.6 L849.9,720.2 M849.9,720.2 L855.8,719.3 M850.7,705.1 L853.6,703.7 M850.7,705.1 L851.5,709.5 M851.5,709.5 L855.2,715.1 M855.2,715.1 L855.8,719.3 M853.6,703.7 L856.1,709.2 M969.1,674.5 L968.2,680.5 M1117.7,527.1 L1124.2,524.4 M1117.7,527.1 L1123.2,532.2 M1123.2,532.2 L1127.4,527.5 M1123.2,532.2 L1124.9,535.8 M1124.9,535.8 L1130.8,531.8 M1124.9,535.8 L1125.9,541.4 M1125.9,541.4 L1128.3,546.0 M1128.3,546.0 L1136.4,540.1 M1127.4,527.5 L1132.2,523.1 M1127.4,527.5 L1130.8,531.8 M1130.8,531.8 L1136.3,527.0 M1133.9,535.5 L1139.8,532.4 M1133.9,535.5 L1136.4,540.1 M1137.6,543.7 L1145.0,539.2 M1139.1,548.3 L1146.2,543.7 M1132.2,523.1 L1136.3,527.0 M1136.3,527.0 L1139.8,532.4 M1139.8,532.4 L1143.1,535.6 M1143.1,535.6 L1148.5,531.5 M1145.0,539.2 L1150.9,536.0 M1146.2,543.7 L1152.4,540.3 M1148.5,531.5 L1150.9,536.0 M1150.9,536.0 L1152.4,540.3 M1160.9,556.0 L1165.4,555.4 M1163.0,561.9 L1167.8,560.5 M1165.4,555.4 L1169.1,554.1 M1165.4,555.4 L1167.8,560.5 M1135.1,571.1 L1141.1,567.4 M1135.1,571.1 L1137.1,574.1 M1137.1,574.1 L1142.7,571.9 M1142.7,571.9 L1145.7,576.4 M1145.7,576.4 L1149.7,574.5 M1149.7,574.5 L1154.0,572.0 M1175.8,566.9 L1180.7,564.7 M1179.6,571.8 L1183.3,569.4 M1180.7,564.7 L1183.3,569.4 M1185.2,572.8 L1189.2,571.1 M1186.9,568.2 L1189.2,571.1 M947.7,825.7 L952.5,826.0 M947.7,825.7 L951.7,831.3 M951.7,831.3 L954.5,830.7 M951.6,821.5 L955.2,820.7 M951.6,821.5 L952.5,826.0 M952.5,826.0 L956.9,824.0 M952.5,826.0 L954.5,830.7 M954.5,830.7 L959.7,829.0 M955.2,820.7 L960.9,818.4 M955.2,820.7 L956.9,824.0 M956.9,824.0 L960.9,823.8 M956.9,824.0 L959.7,829.0 M960.9,818.4 L960.9,823.8 M967.0,670.6 L976.8,663.9 M967.0,670.6 L970.9,676.1 M972.8,684.4 L982.1,677.7 M972.8,684.4 L976.5,690.0 M979.7,669.7 L982.1,677.7 M988.1,690.1 L994.4,685.6 M993.0,697.1 L1001.0,694.0 M991.9,678.6 L1002.4,675.7 M994.4,685.6 L1001.0,694.0 M1001.0,694.0 L1007.2,691.6 M1079.2,494.6 L1082.4,490.9 M1069.6,484.7 L1069.4,480.6 M1073.6,486.4 L1074.8,483.7 M1073.6,486.4 L1077.8,490.2 M1074.8,483.7 L1075.1,478.2 M1079.6,484.8 L1080.9,480.4 M1079.6,484.8 L1083.6,484.9 M1083.6,484.9 L1088.2,487.5 M1088.2,487.5 L1090.0,483.3 M1066.5,474.3 L1069.3,469.5 M1066.5,474.3 L1071.4,477.5 M1075.1,478.2 L1076.6,474.3 M1075.1,478.2 L1080.9,480.4 M1080.9,480.4 L1082.2,475.2 M1080.9,480.4 L1086.2,482.4 M1069.3,469.5 L1070.4,465.2 M1069.3,469.5 L1073.6,471.5 M1067.4,462.8 L1070.4,465.2 M1113.2,583.6 L1116.4,583.6 M1116.4,574.4 L1117.3,580.5 M1117.3,580.5 L1122.4,579.7 M1117.3,580.5 L1116.4,583.6 M1116.4,583.6 L1121.6,583.3 M1116.4,583.6 L1117.2,589.9 M1117.2,589.9 L1121.8,588.6 M1121.6,583.3 L1121.8,588.6 M1121.8,588.6 L1127.6,588.5 M1127.2,577.9 L1130.9,577.9 M1127.2,577.9 L1128.5,582.9 M1130.9,577.9 L1136.6,575.1 M1130.9,577.9 L1131.7,581.2 M1131.7,581.2 L1132.7,585.2 M1132.7,585.2 L1137.3,584.1 M1137.3,584.1 L1136.4,589.8 M1090.1,713.9 L1094.3,706.5 M1080.0,703.9 L1080.9,696.7 M1080.0,703.9 L1087.5,705.5 M1087.5,705.5 L1087.2,696.8 M1099.6,709.5 L1102.2,700.8 M1072.8,695.8 L1075.3,686.0 M1072.8,695.8 L1080.9,696.7 M1087.2,696.8 L1088.4,689.4 M1102.2,700.8 L1102.4,694.3 M1062.7,682.4 L1068.5,673.1 M1062.7,682.4 L1069.2,683.9 M1069.2,683.9 L1075.0,676.8 M1069.2,683.9 L1075.3,686.0 M1075.3,686.0 L1081.1,676.8 M1088.4,689.4 L1091.1,681.3 M1088.4,689.4 L1095.3,690.2 M1102.4,694.3 L1104.8,685.3 M1063.2,671.1 L1065.0,662.6 M1075.0,676.8 L1078.1,667.2 M1081.1,676.8 L1085.8,669.3 M1086.0,678.6 L1090.7,670.3 M1098.0,683.2 L1103.4,674.5 M1057.9,660.3 L1059.2,651.5 M1065.0,662.6 L1065.5,654.7 M1065.0,662.6 L1072.5,665.6 M1072.5,665.6 L1072.4,657.7 M1072.5,665.6 L1078.1,667.2 M1085.8,669.3 L1090.7,670.3 M1090.7,670.3 L1094.6,662.1 M1090.7,670.3 L1098.1,671.0 M1098.1,671.0 L1100.4,664.6 M1059.2,651.5 L1060.5,643.4 M1065.5,654.7 L1068.2,647.5 M1065.5,654.7 L1072.4,657.7 M1079.7,659.2 L1081.9,650.8 M1086.9,661.1 L1088.3,651.7 M1086.9,661.1 L1094.6,662.1 M1094.6,662.1 L1096.7,653.9 M1060.5,643.4 L1064.5,635.8 M1060.5,643.4 L1068.2,647.5 M1068.2,647.5 L1070.1,640.0 M1088.3,651.7 L1089.3,642.9 M1096.7,653.9 L1096.3,646.2 M1059.5,632.6 L1064.5,635.8 M1070.1,640.0 L1076.9,630.7 M1076.8,642.4 L1080.7,633.5 M1083.7,642.2 L1088.1,633.6 M1069.9,628.5 L1074.5,621.0 M1080.7,633.5 L1088.1,633.6 M1066.4,708.3 L1071.8,708.8 M1067.2,713.5 L1071.9,714.1 M1071.8,708.8 L1077.1,709.0 M1071.8,708.8 L1071.9,714.1 M1071.9,714.1 L1077.1,712.5 M1077.1,709.0 L1077.1,712.5 M1081.2,712.2 L1085.9,711.4 M1085.9,711.4 L1091.5,709.5 M1091.5,709.5 L1090.4,715.5 M1042.5,780.2 L1053.1,780.3 M1063.5,772.3 L1073.5,774.1 M1064.2,781.7 L1074.2,783.7 M1050.6,694.2 L1055.9,697.7 M1055.9,697.7 L1059.3,695.6 M1050.8,687.4 L1054.4,692.7 M1054.4,692.7 L1058.2,689.4 M1054.4,692.7 L1059.3,695.6 M1059.3,695.6 L1060.9,693.3 M1060.9,693.3 L1064.0,697.3 M1064.0,697.3 L1069.5,695.0 M1058.9,682.7 L1061.0,685.7 M1061.0,685.7 L1066.1,683.5 M1061.0,685.7 L1064.4,691.3 M1064.3,680.5 L1066.1,683.5 M1066.1,683.5 L1069.3,687.6" fill="none" stroke="#000" stroke-width="1.5" stroke-dasharray="4.5 2.6"/>
<path d="M1008.8,376.4a1.7,1.7 0 1,0 3.4,0a1.7,1.7 0 1,0 -3.4,0 M922.5,489.5a1.7,1.7 0 1,0 3.4,0a1.7,1.7 0 1,0 -3.4,0 M820.3,525.9a1.7,1.7 0 1,0 3.4,0a1.7,1.7 0 1,0 -3.4,0 M915.2,580.5a1.7,1.7 0 1,0 3.4,0a1.7,1.7 0 1,0 -3.4,0 M921.7,617.4a1.7,1.7 0 1,0 3.4,0a1.7,1.7 0 1,0 -3.4,0 M881.4,619.0a1.7,1.7 0 1,0 3.4,0a1.7,1.7 0 1,0 -3.4,0 M779.4,643.9a1.7,1.7 0 1,0 3.4,0a1.7,1.7 0 1,0 -3.4,0 M800.3,698.2a1.7,1.7 0 1,0 3.4,0a1.7,1.7 0 1,0 -3.4,0 M818.4,742.8a1.7,1.7 0 1,0 3.4,0a1.7,1.7 0 1,0 -3.4,0 M892.3,846.7a1.7,1.7 0 1,0 3.4,0a1.7,1.7 0 1,0 -3.4,0 M974.4,900.2a1.7,1.7 0 1,0 3.4,0a1.7,1.7 0 1,0 -3.4,0 M1059.5,979.8a1.7,1.7 0 1,0 3.4,0a1.7,1.7 0 1,0 -3.4,0 M1320.5,862.8a1.7,1.7 0 1,0 3.4,0a1.7,1.7 0 1,0 -3.4,0 M1206.1,669.0a1.7,1.7 0 1,0 3.4,0a1.7,1.7 0 1,0 -3.4,0 M1134.1,712.4a1.7,1.7 0 1,0 3.4,0a1.7,1.7 0 1,0 -3.4,0 M1120.0,685.3a1.7,1.7 0 1,0 3.4,0a1.7,1.7 0 1,0 -3.4,0 M1077.9,434.4a1.7,1.7 0 1,0 3.4,0a1.7,1.7 0 1,0 -3.4,0 M1125.5,435.8a1.7,1.7 0 1,0 3.4,0a1.7,1.7 0 1,0 -3.4,0 M1195.1,479.8a1.7,1.7 0 1,0 3.4,0a1.7,1.7 0 1,0 -3.4,0 M1270.9,565.0a1.7,1.7 0 1,0 3.4,0a1.7,1.7 0 1,0 -3.4,0 M1005.1,866.8a1.7,1.7 0 1,0 3.4,0a1.7,1.7 0 1,0 -3.4,0 M954.9,825.0a1.7,1.7 0 1,0 3.4,0a1.7,1.7 0 1,0 -3.4,0 M927.1,769.3a1.7,1.7 0 1,0 3.4,0a1.7,1.7 0 1,0 -3.4,0 M999.5,655.1a1.7,1.7 0 1,0 3.4,0a1.7,1.7 0 1,0 -3.4,0 M963.3,682.9a1.7,1.7 0 1,0 3.4,0a1.7,1.7 0 1,0 -3.4,0 M910.4,701.0a1.7,1.7 0 1,0 3.4,0a1.7,1.7 0 1,0 -3.4,0 M1035.7,699.6a1.7,1.7 0 1,0 3.4,0a1.7,1.7 0 1,0 -3.4,0 M966.1,726.1a1.7,1.7 0 1,0 3.4,0a1.7,1.7 0 1,0 -3.4,0 M999.7,554.5a1.7,1.7 0 1,0 3.4,0a1.7,1.7 0 1,0 -3.4,0 M1006.3,528.5a1.7,1.7 0 1,0 3.4,0a1.7,1.7 0 1,0 -3.4,0 M1041.3,542.0a1.7,1.7 0 1,0 3.4,0a1.7,1.7 0 1,0 -3.4,0 M1180.4,621.8a1.7,1.7 0 1,0 3.4,0a1.7,1.7 0 1,0 -3.4,0 M1227.7,622.4a1.7,1.7 0 1,0 3.4,0a1.7,1.7 0 1,0 -3.4,0 M1203.5,515.2a1.7,1.7 0 1,0 3.4,0a1.7,1.7 0 1,0 -3.4,0 M1185.9,510.4a1.7,1.7 0 1,0 3.4,0a1.7,1.7 0 1,0 -3.4,0 M1158.1,552.2a1.7,1.7 0 1,0 3.4,0a1.7,1.7 0 1,0 -3.4,0 M1149.7,521.6a1.7,1.7 0 1,0 3.4,0a1.7,1.7 0 1,0 -3.4,0 M1213.8,599.0a1.7,1.7 0 1,0 3.4,0a1.7,1.7 0 1,0 -3.4,0 M1075.4,777.4a1.7,1.7 0 1,0 3.4,0a1.7,1.7 0 1,0 -3.4,0 M1068.0,786.7a1.7,1.7 0 1,0 3.4,0a1.7,1.7 0 1,0 -3.4,0 M1173.3,600.5a1.7,1.7 0 1,0 3.4,0a1.7,1.7 0 1,0 -3.4,0 M1182.5,612.2a1.7,1.7 0 1,0 3.4,0a1.7,1.7 0 1,0 -3.4,0 M1185.3,618.3a1.7,1.7 0 1,0 3.4,0a1.7,1.7 0 1,0 -3.4,0 M1179.7,622.0a1.7,1.7 0 1,0 3.4,0a1.7,1.7 0 1,0 -3.4,0 M1186.3,628.4a1.7,1.7 0 1,0 3.4,0a1.7,1.7 0 1,0 -3.4,0 M1191.3,630.3a1.7,1.7 0 1,0 3.4,0a1.7,1.7 0 1,0 -3.4,0 M1194.1,644.2a1.7,1.7 0 1,0 3.4,0a1.7,1.7 0 1,0 -3.4,0 M929.8,800.9a1.7,1.7 0 1,0 3.4,0a1.7,1.7 0 1,0 -3.4,0 M947.9,819.4a1.7,1.7 0 1,0 3.4,0a1.7,1.7 0 1,0 -3.4,0 M965.3,809.0a1.7,1.7 0 1,0 3.4,0a1.7,1.7 0 1,0 -3.4,0 M971.1,818.3a1.7,1.7 0 1,0 3.4,0a1.7,1.7 0 1,0 -3.4,0 M974.6,803.2a1.7,1.7 0 1,0 3.4,0a1.7,1.7 0 1,0 -3.4,0 M978.1,792.8a1.7,1.7 0 1,0 3.4,0a1.7,1.7 0 1,0 -3.4,0 M978.1,785.8a1.7,1.7 0 1,0 3.4,0a1.7,1.7 0 1,0 -3.4,0 M951.3,800.4a1.7,1.7 0 1,0 3.4,0a1.7,1.7 0 1,0 -3.4,0 M957.2,794.4a1.7,1.7 0 1,0 3.4,0a1.7,1.7 0 1,0 -3.4,0 M967.6,840.8a1.7,1.7 0 1,0 3.4,0a1.7,1.7 0 1,0 -3.4,0 M975.7,857.7a1.7,1.7 0 1,0 3.4,0a1.7,1.7 0 1,0 -3.4,0 M988.5,865.8a1.7,1.7 0 1,0 3.4,0a1.7,1.7 0 1,0 -3.4,0 M992.0,857.7a1.7,1.7 0 1,0 3.4,0a1.7,1.7 0 1,0 -3.4,0 M1055.2,774.8a1.7,1.7 0 1,0 3.4,0a1.7,1.7 0 1,0 -3.4,0 M1043.9,783.0a1.7,1.7 0 1,0 3.4,0a1.7,1.7 0 1,0 -3.4,0 M1032.9,777.6a1.7,1.7 0 1,0 3.4,0a1.7,1.7 0 1,0 -3.4,0 M991.1,752.6a1.7,1.7 0 1,0 3.4,0a1.7,1.7 0 1,0 -3.4,0 M999.5,691.3a1.7,1.7 0 1,0 3.4,0a1.7,1.7 0 1,0 -3.4,0 M968.9,680.1a1.7,1.7 0 1,0 3.4,0a1.7,1.7 0 1,0 -3.4,0 M875.5,681.5a1.7,1.7 0 1,0 3.4,0a1.7,1.7 0 1,0 -3.4,0 M904.8,680.1a1.7,1.7 0 1,0 3.4,0a1.7,1.7 0 1,0 -3.4,0 M851.9,726.1a1.7,1.7 0 1,0 3.4,0a1.7,1.7 0 1,0 -3.4,0 M1057.7,460.6a1.7,1.7 0 1,0 3.4,0a1.7,1.7 0 1,0 -3.4,0 M1054.8,443.9a1.7,1.7 0 1,0 3.4,0a1.7,1.7 0 1,0 -3.4,0 M996.4,485.8a1.7,1.7 0 1,0 3.4,0a1.7,1.7 0 1,0 -3.4,0 M1075.0,456.7a1.7,1.7 0 1,0 3.4,0a1.7,1.7 0 1,0 -3.4,0 M999.5,477.3a1.7,1.7 0 1,0 3.4,0a1.7,1.7 0 1,0 -3.4,0 M1069.2,439.5a1.7,1.7 0 1,0 3.4,0a1.7,1.7 0 1,0 -3.4,0 M1069.1,438.2a1.7,1.7 0 1,0 3.4,0a1.7,1.7 0 1,0 -3.4,0 M1033.5,457.5a1.7,1.7 0 1,0 3.4,0a1.7,1.7 0 1,0 -3.4,0 M1033.4,458.3a1.7,1.7 0 1,0 3.4,0a1.7,1.7 0 1,0 -3.4,0 M1027.0,466.6a1.7,1.7 0 1,0 3.4,0a1.7,1.7 0 1,0 -3.4,0 M1026.1,465.9a1.7,1.7 0 1,0 3.4,0a1.7,1.7 0 1,0 -3.4,0 M1050.1,450.0a1.7,1.7 0 1,0 3.4,0a1.7,1.7 0 1,0 -3.4,0 M982.1,478.0a1.7,1.7 0 1,0 3.4,0a1.7,1.7 0 1,0 -3.4,0 M1041.8,458.5a1.7,1.7 0 1,0 3.4,0a1.7,1.7 0 1,0 -3.4,0 M1064.7,448.1a1.7,1.7 0 1,0 3.4,0a1.7,1.7 0 1,0 -3.4,0 M979.3,486.6a1.7,1.7 0 1,0 3.4,0a1.7,1.7 0 1,0 -3.4,0 M1022.4,476.1a1.7,1.7 0 1,0 3.4,0a1.7,1.7 0 1,0 -3.4,0 M1008.0,468.1a1.7,1.7 0 1,0 3.4,0a1.7,1.7 0 1,0 -3.4,0 M1016.7,459.6a1.7,1.7 0 1,0 3.4,0a1.7,1.7 0 1,0 -3.4,0 M1018.4,460.5a1.7,1.7 0 1,0 3.4,0a1.7,1.7 0 1,0 -3.4,0 M995.6,471.0a1.7,1.7 0 1,0 3.4,0a1.7,1.7 0 1,0 -3.4,0 M995.4,471.5a1.7,1.7 0 1,0 3.4,0a1.7,1.7 0 1,0 -3.4,0 M1058.6,455.5a1.7,1.7 0 1,0 3.4,0a1.7,1.7 0 1,0 -3.4,0 M991.3,479.1a1.7,1.7 0 1,0 3.4,0a1.7,1.7 0 1,0 -3.4,0 M1075.2,450.5a1.7,1.7 0 1,0 3.4,0a1.7,1.7 0 1,0 -3.4,0 M1003.8,475.5a1.7,1.7 0 1,0 3.4,0a1.7,1.7 0 1,0 -3.4,0 M1024.3,461.7a1.7,1.7 0 1,0 3.4,0a1.7,1.7 0 1,0 -3.4,0 M1050.4,461.8a1.7,1.7 0 1,0 3.4,0a1.7,1.7 0 1,0 -3.4,0 M1040.5,453.9a1.7,1.7 0 1,0 3.4,0a1.7,1.7 0 1,0 -3.4,0 M1036.6,467.9a1.7,1.7 0 1,0 3.4,0a1.7,1.7 0 1,0 -3.4,0 M988.8,488.8a1.7,1.7 0 1,0 3.4,0a1.7,1.7 0 1,0 -3.4,0 M989.7,490.0a1.7,1.7 0 1,0 3.4,0a1.7,1.7 0 1,0 -3.4,0 M976.8,481.6a1.7,1.7 0 1,0 3.4,0a1.7,1.7 0 1,0 -3.4,0 M1065.8,459.9a1.7,1.7 0 1,0 3.4,0a1.7,1.7 0 1,0 -3.4,0 M1060.7,441.9a1.7,1.7 0 1,0 3.4,0a1.7,1.7 0 1,0 -3.4,0 M1062.3,443.8a1.7,1.7 0 1,0 3.4,0a1.7,1.7 0 1,0 -3.4,0 M1006.7,462.4a1.7,1.7 0 1,0 3.4,0a1.7,1.7 0 1,0 -3.4,0 M1017.8,471.1a1.7,1.7 0 1,0 3.4,0a1.7,1.7 0 1,0 -3.4,0 M1058.3,449.4a1.7,1.7 0 1,0 3.4,0a1.7,1.7 0 1,0 -3.4,0 M987.4,473.5a1.7,1.7 0 1,0 3.4,0a1.7,1.7 0 1,0 -3.4,0 M989.1,474.9a1.7,1.7 0 1,0 3.4,0a1.7,1.7 0 1,0 -3.4,0 M1071.6,445.2a1.7,1.7 0 1,0 3.4,0a1.7,1.7 0 1,0 -3.4,0 M1069.9,445.0a1.7,1.7 0 1,0 3.4,0a1.7,1.7 0 1,0 -3.4,0 M1000.6,469.3a1.7,1.7 0 1,0 3.4,0a1.7,1.7 0 1,0 -3.4,0 M1029.3,473.0a1.7,1.7 0 1,0 3.4,0a1.7,1.7 0 1,0 -3.4,0 M1033.1,463.9a1.7,1.7 0 1,0 3.4,0a1.7,1.7 0 1,0 -3.4,0 M1023.4,456.4a1.7,1.7 0 1,0 3.4,0a1.7,1.7 0 1,0 -3.4,0 M1024.6,454.7a1.7,1.7 0 1,0 3.4,0a1.7,1.7 0 1,0 -3.4,0 M1042.4,465.5a1.7,1.7 0 1,0 3.4,0a1.7,1.7 0 1,0 -3.4,0 M1048.6,456.5a1.7,1.7 0 1,0 3.4,0a1.7,1.7 0 1,0 -3.4,0 M1047.9,457.6a1.7,1.7 0 1,0 3.4,0a1.7,1.7 0 1,0 -3.4,0 M985.9,482.9a1.7,1.7 0 1,0 3.4,0a1.7,1.7 0 1,0 -3.4,0 M984.5,483.0a1.7,1.7 0 1,0 3.4,0a1.7,1.7 0 1,0 -3.4,0 M1065.9,454.6a1.7,1.7 0 1,0 3.4,0a1.7,1.7 0 1,0 -3.4,0 M1015.9,466.8a1.7,1.7 0 1,0 3.4,0a1.7,1.7 0 1,0 -3.4,0 M1010.9,474.0a1.7,1.7 0 1,0 3.4,0a1.7,1.7 0 1,0 -3.4,0 M1071.0,445.2a1.7,1.7 0 1,0 3.4,0a1.7,1.7 0 1,0 -3.4,0 M1060.8,448.7a1.7,1.7 0 1,0 3.4,0a1.7,1.7 0 1,0 -3.4,0 M1064.9,447.3a1.7,1.7 0 1,0 3.4,0a1.7,1.7 0 1,0 -3.4,0 M1069.2,442.9a1.7,1.7 0 1,0 3.4,0a1.7,1.7 0 1,0 -3.4,0 M1072.0,453.9a1.7,1.7 0 1,0 3.4,0a1.7,1.7 0 1,0 -3.4,0 M1057.2,449.8a1.7,1.7 0 1,0 3.4,0a1.7,1.7 0 1,0 -3.4,0 M1066.4,438.2a1.7,1.7 0 1,0 3.4,0a1.7,1.7 0 1,0 -3.4,0 M1060.7,446.0a1.7,1.7 0 1,0 3.4,0a1.7,1.7 0 1,0 -3.4,0 M1071.5,450.3a1.7,1.7 0 1,0 3.4,0a1.7,1.7 0 1,0 -3.4,0 M1063.3,444.4a1.7,1.7 0 1,0 3.4,0a1.7,1.7 0 1,0 -3.4,0 M1063.3,455.2a1.7,1.7 0 1,0 3.4,0a1.7,1.7 0 1,0 -3.4,0 M1062.6,455.0a1.7,1.7 0 1,0 3.4,0a1.7,1.7 0 1,0 -3.4,0 M1067.1,454.6a1.7,1.7 0 1,0 3.4,0a1.7,1.7 0 1,0 -3.4,0 M1066.5,455.2a1.7,1.7 0 1,0 3.4,0a1.7,1.7 0 1,0 -3.4,0 M1056.9,441.6a1.7,1.7 0 1,0 3.4,0a1.7,1.7 0 1,0 -3.4,0 M1072.6,440.9a1.7,1.7 0 1,0 3.4,0a1.7,1.7 0 1,0 -3.4,0 M1074.4,441.6a1.7,1.7 0 1,0 3.4,0a1.7,1.7 0 1,0 -3.4,0 M1061.5,441.2a1.7,1.7 0 1,0 3.4,0a1.7,1.7 0 1,0 -3.4,0 M1062.1,441.4a1.7,1.7 0 1,0 3.4,0a1.7,1.7 0 1,0 -3.4,0 M1061.1,453.0a1.7,1.7 0 1,0 3.4,0a1.7,1.7 0 1,0 -3.4,0 M1070.2,436.3a1.7,1.7 0 1,0 3.4,0a1.7,1.7 0 1,0 -3.4,0 M969.4,481.5a1.7,1.7 0 1,0 3.4,0a1.7,1.7 0 1,0 -3.4,0 M967.3,478.0a1.7,1.7 0 1,0 3.4,0a1.7,1.7 0 1,0 -3.4,0 M965.5,477.1a1.7,1.7 0 1,0 3.4,0a1.7,1.7 0 1,0 -3.4,0 M962.3,477.2a1.7,1.7 0 1,0 3.4,0a1.7,1.7 0 1,0 -3.4,0 M958.6,482.6a1.7,1.7 0 1,0 3.4,0a1.7,1.7 0 1,0 -3.4,0 M950.4,484.1a1.7,1.7 0 1,0 3.4,0a1.7,1.7 0 1,0 -3.4,0 M950.5,482.4a1.7,1.7 0 1,0 3.4,0a1.7,1.7 0 1,0 -3.4,0 M955.7,483.6a1.7,1.7 0 1,0 3.4,0a1.7,1.7 0 1,0 -3.4,0 M956.4,483.8a1.7,1.7 0 1,0 3.4,0a1.7,1.7 0 1,0 -3.4,0 M957.0,479.1a1.7,1.7 0 1,0 3.4,0a1.7,1.7 0 1,0 -3.4,0 M965.7,483.5a1.7,1.7 0 1,0 3.4,0a1.7,1.7 0 1,0 -3.4,0 M1004.6,495.7a1.7,1.7 0 1,0 3.4,0a1.7,1.7 0 1,0 -3.4,0 M1003.5,496.7a1.7,1.7 0 1,0 3.4,0a1.7,1.7 0 1,0 -3.4,0 M1010.2,490.7a1.7,1.7 0 1,0 3.4,0a1.7,1.7 0 1,0 -3.4,0 M1021.0,491.1a1.7,1.7 0 1,0 3.4,0a1.7,1.7 0 1,0 -3.4,0 M1014.5,491.2a1.7,1.7 0 1,0 3.4,0a1.7,1.7 0 1,0 -3.4,0 M1018.6,502.1a1.7,1.7 0 1,0 3.4,0a1.7,1.7 0 1,0 -3.4,0 M1020.5,502.8a1.7,1.7 0 1,0 3.4,0a1.7,1.7 0 1,0 -3.4,0 M1004.9,491.2a1.7,1.7 0 1,0 3.4,0a1.7,1.7 0 1,0 -3.4,0 M1025.0,490.4a1.7,1.7 0 1,0 3.4,0a1.7,1.7 0 1,0 -3.4,0 M1019.0,496.9a1.7,1.7 0 1,0 3.4,0a1.7,1.7 0 1,0 -3.4,0 M1007.7,500.8a1.7,1.7 0 1,0 3.4,0a1.7,1.7 0 1,0 -3.4,0 M1013.1,501.8a1.7,1.7 0 1,0 3.4,0a1.7,1.7 0 1,0 -3.4,0 M1011.0,495.5a1.7,1.7 0 1,0 3.4,0a1.7,1.7 0 1,0 -3.4,0 M1024.8,499.9a1.7,1.7 0 1,0 3.4,0a1.7,1.7 0 1,0 -3.4,0 M1015.5,495.8a1.7,1.7 0 1,0 3.4,0a1.7,1.7 0 1,0 -3.4,0 M1005.0,499.9a1.7,1.7 0 1,0 3.4,0a1.7,1.7 0 1,0 -3.4,0 M1024.6,496.5a1.7,1.7 0 1,0 3.4,0a1.7,1.7 0 1,0 -3.4,0 M1056.3,474.9a1.7,1.7 0 1,0 3.4,0a1.7,1.7 0 1,0 -3.4,0 M1055.6,474.8a1.7,1.7 0 1,0 3.4,0a1.7,1.7 0 1,0 -3.4,0 M1046.1,473.9a1.7,1.7 0 1,0 3.4,0a1.7,1.7 0 1,0 -3.4,0 M1051.4,473.6a1.7,1.7 0 1,0 3.4,0a1.7,1.7 0 1,0 -3.4,0 M1053.6,469.1a1.7,1.7 0 1,0 3.4,0a1.7,1.7 0 1,0 -3.4,0 M1060.5,474.9a1.7,1.7 0 1,0 3.4,0a1.7,1.7 0 1,0 -3.4,0 M1060.1,474.7a1.7,1.7 0 1,0 3.4,0a1.7,1.7 0 1,0 -3.4,0 M1054.5,463.8a1.7,1.7 0 1,0 3.4,0a1.7,1.7 0 1,0 -3.4,0 M1045.2,468.8a1.7,1.7 0 1,0 3.4,0a1.7,1.7 0 1,0 -3.4,0 M1059.2,479.7a1.7,1.7 0 1,0 3.4,0a1.7,1.7 0 1,0 -3.4,0 M1050.3,470.1a1.7,1.7 0 1,0 3.4,0a1.7,1.7 0 1,0 -3.4,0 M1049.8,470.9a1.7,1.7 0 1,0 3.4,0a1.7,1.7 0 1,0 -3.4,0 M1043.5,465.1a1.7,1.7 0 1,0 3.4,0a1.7,1.7 0 1,0 -3.4,0 M1043.8,464.9a1.7,1.7 0 1,0 3.4,0a1.7,1.7 0 1,0 -3.4,0 M1059.1,469.4a1.7,1.7 0 1,0 3.4,0a1.7,1.7 0 1,0 -3.4,0 M1061.1,470.6a1.7,1.7 0 1,0 3.4,0a1.7,1.7 0 1,0 -3.4,0 M1050.1,463.9a1.7,1.7 0 1,0 3.4,0a1.7,1.7 0 1,0 -3.4,0 M1050.6,463.1a1.7,1.7 0 1,0 3.4,0a1.7,1.7 0 1,0 -3.4,0 M1048.8,479.9a1.7,1.7 0 1,0 3.4,0a1.7,1.7 0 1,0 -3.4,0 M1053.3,480.3a1.7,1.7 0 1,0 3.4,0a1.7,1.7 0 1,0 -3.4,0 M1059.6,465.5a1.7,1.7 0 1,0 3.4,0a1.7,1.7 0 1,0 -3.4,0 M1058.9,465.1a1.7,1.7 0 1,0 3.4,0a1.7,1.7 0 1,0 -3.4,0 M1059.3,522.3a1.7,1.7 0 1,0 3.4,0a1.7,1.7 0 1,0 -3.4,0 M1058.9,520.5a1.7,1.7 0 1,0 3.4,0a1.7,1.7 0 1,0 -3.4,0 M1063.8,622.8a1.7,1.7 0 1,0 3.4,0a1.7,1.7 0 1,0 -3.4,0 M1063.6,623.0a1.7,1.7 0 1,0 3.4,0a1.7,1.7 0 1,0 -3.4,0 M1019.0,583.0a1.7,1.7 0 1,0 3.4,0a1.7,1.7 0 1,0 -3.4,0 M1022.1,611.0a1.7,1.7 0 1,0 3.4,0a1.7,1.7 0 1,0 -3.4,0 M1027.6,584.6a1.7,1.7 0 1,0 3.4,0a1.7,1.7 0 1,0 -3.4,0 M1029.0,583.2a1.7,1.7 0 1,0 3.4,0a1.7,1.7 0 1,0 -3.4,0 M1045.0,565.6a1.7,1.7 0 1,0 3.4,0a1.7,1.7 0 1,0 -3.4,0 M1051.9,539.6a1.7,1.7 0 1,0 3.4,0a1.7,1.7 0 1,0 -3.4,0 M1048.1,555.1a1.7,1.7 0 1,0 3.4,0a1.7,1.7 0 1,0 -3.4,0 M1057.2,532.1a1.7,1.7 0 1,0 3.4,0a1.7,1.7 0 1,0 -3.4,0 M1102.8,571.8a1.7,1.7 0 1,0 3.4,0a1.7,1.7 0 1,0 -3.4,0 M1081.4,589.4a1.7,1.7 0 1,0 3.4,0a1.7,1.7 0 1,0 -3.4,0 M1080.2,544.6a1.7,1.7 0 1,0 3.4,0a1.7,1.7 0 1,0 -3.4,0 M1014.4,630.6a1.7,1.7 0 1,0 3.4,0a1.7,1.7 0 1,0 -3.4,0 M1013.0,631.9a1.7,1.7 0 1,0 3.4,0a1.7,1.7 0 1,0 -3.4,0 M1103.6,600.1a1.7,1.7 0 1,0 3.4,0a1.7,1.7 0 1,0 -3.4,0 M1036.6,585.6a1.7,1.7 0 1,0 3.4,0a1.7,1.7 0 1,0 -3.4,0 M1042.4,574.5a1.7,1.7 0 1,0 3.4,0a1.7,1.7 0 1,0 -3.4,0 M1042.5,572.7a1.7,1.7 0 1,0 3.4,0a1.7,1.7 0 1,0 -3.4,0 M1029.2,622.8a1.7,1.7 0 1,0 3.4,0a1.7,1.7 0 1,0 -3.4,0 M1028.4,624.7a1.7,1.7 0 1,0 3.4,0a1.7,1.7 0 1,0 -3.4,0 M1029.8,596.2a1.7,1.7 0 1,0 3.4,0a1.7,1.7 0 1,0 -3.4,0 M1053.4,580.5a1.7,1.7 0 1,0 3.4,0a1.7,1.7 0 1,0 -3.4,0 M1108.8,584.4a1.7,1.7 0 1,0 3.4,0a1.7,1.7 0 1,0 -3.4,0 M1108.5,582.7a1.7,1.7 0 1,0 3.4,0a1.7,1.7 0 1,0 -3.4,0 M1056.5,569.7a1.7,1.7 0 1,0 3.4,0a1.7,1.7 0 1,0 -3.4,0 M1055.0,571.4a1.7,1.7 0 1,0 3.4,0a1.7,1.7 0 1,0 -3.4,0 M1062.2,545.4a1.7,1.7 0 1,0 3.4,0a1.7,1.7 0 1,0 -3.4,0 M1062.1,546.0a1.7,1.7 0 1,0 3.4,0a1.7,1.7 0 1,0 -3.4,0 M1086.4,600.4a1.7,1.7 0 1,0 3.4,0a1.7,1.7 0 1,0 -3.4,0 M1083.4,555.6a1.7,1.7 0 1,0 3.4,0a1.7,1.7 0 1,0 -3.4,0 M1041.9,597.3a1.7,1.7 0 1,0 3.4,0a1.7,1.7 0 1,0 -3.4,0 M1046.9,587.8a1.7,1.7 0 1,0 3.4,0a1.7,1.7 0 1,0 -3.4,0 M1032.5,634.7a1.7,1.7 0 1,0 3.4,0a1.7,1.7 0 1,0 -3.4,0 M1037.4,607.6a1.7,1.7 0 1,0 3.4,0a1.7,1.7 0 1,0 -3.4,0 M1110.2,598.2a1.7,1.7 0 1,0 3.4,0a1.7,1.7 0 1,0 -3.4,0 M1111.1,597.3a1.7,1.7 0 1,0 3.4,0a1.7,1.7 0 1,0 -3.4,0 M1063.4,584.1a1.7,1.7 0 1,0 3.4,0a1.7,1.7 0 1,0 -3.4,0 M1064.8,559.0a1.7,1.7 0 1,0 3.4,0a1.7,1.7 0 1,0 -3.4,0 M1060.7,512.0a1.7,1.7 0 1,0 3.4,0a1.7,1.7 0 1,0 -3.4,0 M1092.7,568.4a1.7,1.7 0 1,0 3.4,0a1.7,1.7 0 1,0 -3.4,0 M1020.4,554.9a1.7,1.7 0 1,0 3.4,0a1.7,1.7 0 1,0 -3.4,0 M1052.3,601.7a1.7,1.7 0 1,0 3.4,0a1.7,1.7 0 1,0 -3.4,0 M1089.5,577.8a1.7,1.7 0 1,0 3.4,0a1.7,1.7 0 1,0 -3.4,0 M1090.8,576.1a1.7,1.7 0 1,0 3.4,0a1.7,1.7 0 1,0 -3.4,0 M1012.0,591.9a1.7,1.7 0 1,0 3.4,0a1.7,1.7 0 1,0 -3.4,0 M1016.7,566.9a1.7,1.7 0 1,0 3.4,0a1.7,1.7 0 1,0 -3.4,0 M1089.6,551.7a1.7,1.7 0 1,0 3.4,0a1.7,1.7 0 1,0 -3.4,0 M1043.1,536.7a1.7,1.7 0 1,0 3.4,0a1.7,1.7 0 1,0 -3.4,0 M1041.5,536.2a1.7,1.7 0 1,0 3.4,0a1.7,1.7 0 1,0 -3.4,0 M1047.6,620.3a1.7,1.7 0 1,0 3.4,0a1.7,1.7 0 1,0 -3.4,0 M1047.6,619.2a1.7,1.7 0 1,0 3.4,0a1.7,1.7 0 1,0 -3.4,0 M1043.2,636.2a1.7,1.7 0 1,0 3.4,0a1.7,1.7 0 1,0 -3.4,0 M1066.7,598.1a1.7,1.7 0 1,0 3.4,0a1.7,1.7 0 1,0 -3.4,0 M1069.9,526.4a1.7,1.7 0 1,0 3.4,0a1.7,1.7 0 1,0 -3.4,0 M1069.5,528.3a1.7,1.7 0 1,0 3.4,0a1.7,1.7 0 1,0 -3.4,0 M1075.6,600.8a1.7,1.7 0 1,0 3.4,0a1.7,1.7 0 1,0 -3.4,0 M1076.0,602.6a1.7,1.7 0 1,0 3.4,0a1.7,1.7 0 1,0 -3.4,0 M1098.9,580.5a1.7,1.7 0 1,0 3.4,0a1.7,1.7 0 1,0 -3.4,0 M1100.8,554.1a1.7,1.7 0 1,0 3.4,0a1.7,1.7 0 1,0 -3.4,0 M1029.4,558.1a1.7,1.7 0 1,0 3.4,0a1.7,1.7 0 1,0 -3.4,0 M1059.8,616.0a1.7,1.7 0 1,0 3.4,0a1.7,1.7 0 1,0 -3.4,0 M1060.2,616.3a1.7,1.7 0 1,0 3.4,0a1.7,1.7 0 1,0 -3.4,0 M1066.9,535.4a1.7,1.7 0 1,0 3.4,0a1.7,1.7 0 1,0 -3.4,0 M1066.9,535.4a1.7,1.7 0 1,0 3.4,0a1.7,1.7 0 1,0 -3.4,0 M1091.4,590.2a1.7,1.7 0 1,0 3.4,0a1.7,1.7 0 1,0 -3.4,0 M1015.8,605.9a1.7,1.7 0 1,0 3.4,0a1.7,1.7 0 1,0 -3.4,0 M1014.2,604.9a1.7,1.7 0 1,0 3.4,0a1.7,1.7 0 1,0 -3.4,0 M1027.1,577.5a1.7,1.7 0 1,0 3.4,0a1.7,1.7 0 1,0 -3.4,0 M1028.2,577.2a1.7,1.7 0 1,0 3.4,0a1.7,1.7 0 1,0 -3.4,0 M1020.7,594.8a1.7,1.7 0 1,0 3.4,0a1.7,1.7 0 1,0 -3.4,0 M1098.6,564.2a1.7,1.7 0 1,0 3.4,0a1.7,1.7 0 1,0 -3.4,0 M1046.0,548.6a1.7,1.7 0 1,0 3.4,0a1.7,1.7 0 1,0 -3.4,0 M1046.7,547.0a1.7,1.7 0 1,0 3.4,0a1.7,1.7 0 1,0 -3.4,0 M1054.2,525.0a1.7,1.7 0 1,0 3.4,0a1.7,1.7 0 1,0 -3.4,0 M1050.3,633.5a1.7,1.7 0 1,0 3.4,0a1.7,1.7 0 1,0 -3.4,0 M1072.7,611.1a1.7,1.7 0 1,0 3.4,0a1.7,1.7 0 1,0 -3.4,0 M1072.0,612.4a1.7,1.7 0 1,0 3.4,0a1.7,1.7 0 1,0 -3.4,0 M1055.7,553.7a1.7,1.7 0 1,0 3.4,0a1.7,1.7 0 1,0 -3.4,0 M1078.2,538.1a1.7,1.7 0 1,0 3.4,0a1.7,1.7 0 1,0 -3.4,0 M1083.6,611.4a1.7,1.7 0 1,0 3.4,0a1.7,1.7 0 1,0 -3.4,0 M1084.6,609.5a1.7,1.7 0 1,0 3.4,0a1.7,1.7 0 1,0 -3.4,0 M1011.6,624.9a1.7,1.7 0 1,0 3.4,0a1.7,1.7 0 1,0 -3.4,0 M1100.8,594.4a1.7,1.7 0 1,0 3.4,0a1.7,1.7 0 1,0 -3.4,0 M1015.4,615.3a1.7,1.7 0 1,0 3.4,0a1.7,1.7 0 1,0 -3.4,0 M1110.3,570.0a1.7,1.7 0 1,0 3.4,0a1.7,1.7 0 1,0 -3.4,0 M1039.7,567.7a1.7,1.7 0 1,0 3.4,0a1.7,1.7 0 1,0 -3.4,0 M1041.5,568.7a1.7,1.7 0 1,0 3.4,0a1.7,1.7 0 1,0 -3.4,0 M1071.1,548.3a1.7,1.7 0 1,0 3.4,0a1.7,1.7 0 1,0 -3.4,0 M1097.3,604.1a1.7,1.7 0 1,0 3.4,0a1.7,1.7 0 1,0 -3.4,0 M1098.2,603.8a1.7,1.7 0 1,0 3.4,0a1.7,1.7 0 1,0 -3.4,0 M1026.4,617.0a1.7,1.7 0 1,0 3.4,0a1.7,1.7 0 1,0 -3.4,0 M1030.6,589.1a1.7,1.7 0 1,0 3.4,0a1.7,1.7 0 1,0 -3.4,0 M1027.8,606.0a1.7,1.7 0 1,0 3.4,0a1.7,1.7 0 1,0 -3.4,0 M1106.8,579.0a1.7,1.7 0 1,0 3.4,0a1.7,1.7 0 1,0 -3.4,0 M1108.0,578.8a1.7,1.7 0 1,0 3.4,0a1.7,1.7 0 1,0 -3.4,0 M1051.2,562.4a1.7,1.7 0 1,0 3.4,0a1.7,1.7 0 1,0 -3.4,0 M1056.0,593.0a1.7,1.7 0 1,0 3.4,0a1.7,1.7 0 1,0 -3.4,0 M1062.0,567.4a1.7,1.7 0 1,0 3.4,0a1.7,1.7 0 1,0 -3.4,0 M1079.9,550.5a1.7,1.7 0 1,0 3.4,0a1.7,1.7 0 1,0 -3.4,0 M1021.7,626.6a1.7,1.7 0 1,0 3.4,0a1.7,1.7 0 1,0 -3.4,0 M1021.0,627.6a1.7,1.7 0 1,0 3.4,0a1.7,1.7 0 1,0 -3.4,0 M1045.9,581.6a1.7,1.7 0 1,0 3.4,0a1.7,1.7 0 1,0 -3.4,0 M1044.4,582.9a1.7,1.7 0 1,0 3.4,0a1.7,1.7 0 1,0 -3.4,0 M1049.7,610.9a1.7,1.7 0 1,0 3.4,0a1.7,1.7 0 1,0 -3.4,0 M1075.9,561.4a1.7,1.7 0 1,0 3.4,0a1.7,1.7 0 1,0 -3.4,0 M1085.6,533.7a1.7,1.7 0 1,0 3.4,0a1.7,1.7 0 1,0 -3.4,0 M1084.1,532.9a1.7,1.7 0 1,0 3.4,0a1.7,1.7 0 1,0 -3.4,0 M1030.4,628.4a1.7,1.7 0 1,0 3.4,0a1.7,1.7 0 1,0 -3.4,0 M1033.7,602.5a1.7,1.7 0 1,0 3.4,0a1.7,1.7 0 1,0 -3.4,0 M1035.3,617.5a1.7,1.7 0 1,0 3.4,0a1.7,1.7 0 1,0 -3.4,0 M1109.0,592.3a1.7,1.7 0 1,0 3.4,0a1.7,1.7 0 1,0 -3.4,0 M1108.7,592.4a1.7,1.7 0 1,0 3.4,0a1.7,1.7 0 1,0 -3.4,0 M1035.2,547.6a1.7,1.7 0 1,0 3.4,0a1.7,1.7 0 1,0 -3.4,0 M1059.1,506.5a1.7,1.7 0 1,0 3.4,0a1.7,1.7 0 1,0 -3.4,0 M1060.6,506.3a1.7,1.7 0 1,0 3.4,0a1.7,1.7 0 1,0 -3.4,0 M1063.5,607.1a1.7,1.7 0 1,0 3.4,0a1.7,1.7 0 1,0 -3.4,0 M1063.2,606.6a1.7,1.7 0 1,0 3.4,0a1.7,1.7 0 1,0 -3.4,0 M1070.1,581.5a1.7,1.7 0 1,0 3.4,0a1.7,1.7 0 1,0 -3.4,0 M1087.4,562.1a1.7,1.7 0 1,0 3.4,0a1.7,1.7 0 1,0 -3.4,0 M1073.5,570.6a1.7,1.7 0 1,0 3.4,0a1.7,1.7 0 1,0 -3.4,0 M1054.0,513.9a1.7,1.7 0 1,0 3.4,0a1.7,1.7 0 1,0 -3.4,0 M1057.1,625.6a1.7,1.7 0 1,0 3.4,0a1.7,1.7 0 1,0 -3.4,0 M1086.0,572.8a1.7,1.7 0 1,0 3.4,0a1.7,1.7 0 1,0 -3.4,0 M1011.8,585.2a1.7,1.7 0 1,0 3.4,0a1.7,1.7 0 1,0 -3.4,0 M1012.8,583.9a1.7,1.7 0 1,0 3.4,0a1.7,1.7 0 1,0 -3.4,0 M1013.1,558.4a1.7,1.7 0 1,0 3.4,0a1.7,1.7 0 1,0 -3.4,0 M1015.7,575.0a1.7,1.7 0 1,0 3.4,0a1.7,1.7 0 1,0 -3.4,0 M1015.1,573.6a1.7,1.7 0 1,0 3.4,0a1.7,1.7 0 1,0 -3.4,0 M1088.0,546.2a1.7,1.7 0 1,0 3.4,0a1.7,1.7 0 1,0 -3.4,0 M1088.4,546.3a1.7,1.7 0 1,0 3.4,0a1.7,1.7 0 1,0 -3.4,0 M1041.0,631.0a1.7,1.7 0 1,0 3.4,0a1.7,1.7 0 1,0 -3.4,0 M1042.0,559.4a1.7,1.7 0 1,0 3.4,0a1.7,1.7 0 1,0 -3.4,0 M1049.1,533.5a1.7,1.7 0 1,0 3.4,0a1.7,1.7 0 1,0 -3.4,0 M1065.4,519.4a1.7,1.7 0 1,0 3.4,0a1.7,1.7 0 1,0 -3.4,0 M1073.2,594.8a1.7,1.7 0 1,0 3.4,0a1.7,1.7 0 1,0 -3.4,0 M1081.0,582.5a1.7,1.7 0 1,0 3.4,0a1.7,1.7 0 1,0 -3.4,0 M1037.4,579.2a1.7,1.7 0 1,0 3.4,0a1.7,1.7 0 1,0 -3.4,0 M1063.8,529.0a1.7,1.7 0 1,0 3.4,0a1.7,1.7 0 1,0 -3.4,0 M1064.6,527.9a1.7,1.7 0 1,0 3.4,0a1.7,1.7 0 1,0 -3.4,0 M1090.9,583.9a1.7,1.7 0 1,0 3.4,0a1.7,1.7 0 1,0 -3.4,0 M1091.8,584.2a1.7,1.7 0 1,0 3.4,0a1.7,1.7 0 1,0 -3.4,0 M1014.2,597.9a1.7,1.7 0 1,0 3.4,0a1.7,1.7 0 1,0 -3.4,0 M1012.5,599.2a1.7,1.7 0 1,0 3.4,0a1.7,1.7 0 1,0 -3.4,0 M1094.2,558.2a1.7,1.7 0 1,0 3.4,0a1.7,1.7 0 1,0 -3.4,0 M1018.9,588.7a1.7,1.7 0 1,0 3.4,0a1.7,1.7 0 1,0 -3.4,0 M1050.3,571.4a1.7,1.7 0 1,0 3.4,0a1.7,1.7 0 1,0 -3.4,0 M1054.3,546.5a1.7,1.7 0 1,0 3.4,0a1.7,1.7 0 1,0 -3.4,0 M1061.1,537.8a1.7,1.7 0 1,0 3.4,0a1.7,1.7 0 1,0 -3.4,0 M1079.5,605.1a1.7,1.7 0 1,0 3.4,0a1.7,1.7 0 1,0 -3.4,0 M1083.4,594.7a1.7,1.7 0 1,0 3.4,0a1.7,1.7 0 1,0 -3.4,0 M1010.2,607.7a1.7,1.7 0 1,0 3.4,0a1.7,1.7 0 1,0 -3.4,0 M1039.5,590.9a1.7,1.7 0 1,0 3.4,0a1.7,1.7 0 1,0 -3.4,0 M1069.7,543.3a1.7,1.7 0 1,0 3.4,0a1.7,1.7 0 1,0 -3.4,0 M1070.7,541.7a1.7,1.7 0 1,0 3.4,0a1.7,1.7 0 1,0 -3.4,0 M1094.5,597.1a1.7,1.7 0 1,0 3.4,0a1.7,1.7 0 1,0 -3.4,0 M1095.9,595.3a1.7,1.7 0 1,0 3.4,0a1.7,1.7 0 1,0 -3.4,0 M1022.9,602.2a1.7,1.7 0 1,0 3.4,0a1.7,1.7 0 1,0 -3.4,0 M1054.5,586.3a1.7,1.7 0 1,0 3.4,0a1.7,1.7 0 1,0 -3.4,0 M1057.4,561.0a1.7,1.7 0 1,0 3.4,0a1.7,1.7 0 1,0 -3.4,0 M1060.2,577.3a1.7,1.7 0 1,0 3.4,0a1.7,1.7 0 1,0 -3.4,0 M1058.8,579.1a1.7,1.7 0 1,0 3.4,0a1.7,1.7 0 1,0 -3.4,0 M1064.1,552.2a1.7,1.7 0 1,0 3.4,0a1.7,1.7 0 1,0 -3.4,0 M1089.7,607.1a1.7,1.7 0 1,0 3.4,0a1.7,1.7 0 1,0 -3.4,0 M1017.9,621.2a1.7,1.7 0 1,0 3.4,0a1.7,1.7 0 1,0 -3.4,0 M1019.0,620.0a1.7,1.7 0 1,0 3.4,0a1.7,1.7 0 1,0 -3.4,0 M1044.2,604.7a1.7,1.7 0 1,0 3.4,0a1.7,1.7 0 1,0 -3.4,0 M1044.3,605.1a1.7,1.7 0 1,0 3.4,0a1.7,1.7 0 1,0 -3.4,0 M1049.0,593.9a1.7,1.7 0 1,0 3.4,0a1.7,1.7 0 1,0 -3.4,0 M1050.0,594.2a1.7,1.7 0 1,0 3.4,0a1.7,1.7 0 1,0 -3.4,0 M1072.8,554.4a1.7,1.7 0 1,0 3.4,0a1.7,1.7 0 1,0 -3.4,0 M1032.1,612.3a1.7,1.7 0 1,0 3.4,0a1.7,1.7 0 1,0 -3.4,0 M1034.4,540.0a1.7,1.7 0 1,0 3.4,0a1.7,1.7 0 1,0 -3.4,0 M1043.0,614.6a1.7,1.7 0 1,0 3.4,0a1.7,1.7 0 1,0 -3.4,0 M1057.2,599.2a1.7,1.7 0 1,0 3.4,0a1.7,1.7 0 1,0 -3.4,0 M1067.3,575.5a1.7,1.7 0 1,0 3.4,0a1.7,1.7 0 1,0 -3.4,0 M1064.7,592.0a1.7,1.7 0 1,0 3.4,0a1.7,1.7 0 1,0 -3.4,0 M1066.2,592.9a1.7,1.7 0 1,0 3.4,0a1.7,1.7 0 1,0 -3.4,0 M1068.5,565.4a1.7,1.7 0 1,0 3.4,0a1.7,1.7 0 1,0 -3.4,0 M1067.5,563.5a1.7,1.7 0 1,0 3.4,0a1.7,1.7 0 1,0 -3.4,0 M1023.0,633.7a1.7,1.7 0 1,0 3.4,0a1.7,1.7 0 1,0 -3.4,0 M1096.3,573.1a1.7,1.7 0 1,0 3.4,0a1.7,1.7 0 1,0 -3.4,0 M1095.5,572.2a1.7,1.7 0 1,0 3.4,0a1.7,1.7 0 1,0 -3.4,0 M1097.6,548.8a1.7,1.7 0 1,0 3.4,0a1.7,1.7 0 1,0 -3.4,0 M1097.6,547.9a1.7,1.7 0 1,0 3.4,0a1.7,1.7 0 1,0 -3.4,0 M1023.4,562.7a1.7,1.7 0 1,0 3.4,0a1.7,1.7 0 1,0 -3.4,0 M1022.5,562.7a1.7,1.7 0 1,0 3.4,0a1.7,1.7 0 1,0 -3.4,0 M1027.9,551.2a1.7,1.7 0 1,0 3.4,0a1.7,1.7 0 1,0 -3.4,0 M1051.1,507.0a1.7,1.7 0 1,0 3.4,0a1.7,1.7 0 1,0 -3.4,0 M1052.6,508.4a1.7,1.7 0 1,0 3.4,0a1.7,1.7 0 1,0 -3.4,0 M1054.8,619.1a1.7,1.7 0 1,0 3.4,0a1.7,1.7 0 1,0 -3.4,0 M1056.3,609.7a1.7,1.7 0 1,0 3.4,0a1.7,1.7 0 1,0 -3.4,0 M1081.1,565.9a1.7,1.7 0 1,0 3.4,0a1.7,1.7 0 1,0 -3.4,0 M1040.3,623.1a1.7,1.7 0 1,0 3.4,0a1.7,1.7 0 1,0 -3.4,0 M1022.2,572.9a1.7,1.7 0 1,0 3.4,0a1.7,1.7 0 1,0 -3.4,0 M1036.5,553.2a1.7,1.7 0 1,0 3.4,0a1.7,1.7 0 1,0 -3.4,0 M1047.6,527.2a1.7,1.7 0 1,0 3.4,0a1.7,1.7 0 1,0 -3.4,0 M1043.9,542.4a1.7,1.7 0 1,0 3.4,0a1.7,1.7 0 1,0 -3.4,0 M1042.1,544.2a1.7,1.7 0 1,0 3.4,0a1.7,1.7 0 1,0 -3.4,0 M1048.4,517.0a1.7,1.7 0 1,0 3.4,0a1.7,1.7 0 1,0 -3.4,0 M1049.7,628.1a1.7,1.7 0 1,0 3.4,0a1.7,1.7 0 1,0 -3.4,0 M1067.1,613.1a1.7,1.7 0 1,0 3.4,0a1.7,1.7 0 1,0 -3.4,0 M1066.9,612.6a1.7,1.7 0 1,0 3.4,0a1.7,1.7 0 1,0 -3.4,0 M1072.8,587.8a1.7,1.7 0 1,0 3.4,0a1.7,1.7 0 1,0 -3.4,0 M1068.1,604.2a1.7,1.7 0 1,0 3.4,0a1.7,1.7 0 1,0 -3.4,0 M1078.1,576.8a1.7,1.7 0 1,0 3.4,0a1.7,1.7 0 1,0 -3.4,0 M1075.2,532.1a1.7,1.7 0 1,0 3.4,0a1.7,1.7 0 1,0 -3.4,0 M1100.1,586.9a1.7,1.7 0 1,0 3.4,0a1.7,1.7 0 1,0 -3.4,0 M1099.0,588.7a1.7,1.7 0 1,0 3.4,0a1.7,1.7 0 1,0 -3.4,0 M1104.1,562.1a1.7,1.7 0 1,0 3.4,0a1.7,1.7 0 1,0 -3.4,0 M1105.9,562.7a1.7,1.7 0 1,0 3.4,0a1.7,1.7 0 1,0 -3.4,0 M1032.7,572.4a1.7,1.7 0 1,0 3.4,0a1.7,1.7 0 1,0 -3.4,0 M1034.3,570.8a1.7,1.7 0 1,0 3.4,0a1.7,1.7 0 1,0 -3.4,0 M1035.0,562.7a1.7,1.7 0 1,0 3.4,0a1.7,1.7 0 1,0 -3.4,0 M1083.7,577.6a1.7,1.7 0 1,0 3.4,0a1.7,1.7 0 1,0 -3.4,0 M1084.9,576.5a1.7,1.7 0 1,0 3.4,0a1.7,1.7 0 1,0 -3.4,0 M1095.1,595.6a1.7,1.7 0 1,0 3.4,0a1.7,1.7 0 1,0 -3.4,0 M1085.9,590.8a1.7,1.7 0 1,0 3.4,0a1.7,1.7 0 1,0 -3.4,0 M1095.4,572.0a1.7,1.7 0 1,0 3.4,0a1.7,1.7 0 1,0 -3.4,0 M1091.9,583.3a1.7,1.7 0 1,0 3.4,0a1.7,1.7 0 1,0 -3.4,0 M1091.5,602.3a1.7,1.7 0 1,0 3.4,0a1.7,1.7 0 1,0 -3.4,0 M1090.6,601.0a1.7,1.7 0 1,0 3.4,0a1.7,1.7 0 1,0 -3.4,0 M1098.7,584.6a1.7,1.7 0 1,0 3.4,0a1.7,1.7 0 1,0 -3.4,0 M1101.7,598.1a1.7,1.7 0 1,0 3.4,0a1.7,1.7 0 1,0 -3.4,0 M1077.8,587.4a1.7,1.7 0 1,0 3.4,0a1.7,1.7 0 1,0 -3.4,0 M1081.0,598.2a1.7,1.7 0 1,0 3.4,0a1.7,1.7 0 1,0 -3.4,0 M1082.7,599.8a1.7,1.7 0 1,0 3.4,0a1.7,1.7 0 1,0 -3.4,0 M1105.1,566.9a1.7,1.7 0 1,0 3.4,0a1.7,1.7 0 1,0 -3.4,0 M1106.9,567.3a1.7,1.7 0 1,0 3.4,0a1.7,1.7 0 1,0 -3.4,0 M1102.2,573.1a1.7,1.7 0 1,0 3.4,0a1.7,1.7 0 1,0 -3.4,0 M1108.1,587.3a1.7,1.7 0 1,0 3.4,0a1.7,1.7 0 1,0 -3.4,0 M1083.9,566.1a1.7,1.7 0 1,0 3.4,0a1.7,1.7 0 1,0 -3.4,0 M1083.0,566.2a1.7,1.7 0 1,0 3.4,0a1.7,1.7 0 1,0 -3.4,0 M1091.8,578.1a1.7,1.7 0 1,0 3.4,0a1.7,1.7 0 1,0 -3.4,0 M1080.7,574.2a1.7,1.7 0 1,0 3.4,0a1.7,1.7 0 1,0 -3.4,0 M1082.1,574.4a1.7,1.7 0 1,0 3.4,0a1.7,1.7 0 1,0 -3.4,0 M1090.0,599.2a1.7,1.7 0 1,0 3.4,0a1.7,1.7 0 1,0 -3.4,0 M1098.5,580.1a1.7,1.7 0 1,0 3.4,0a1.7,1.7 0 1,0 -3.4,0 M1094.5,590.3a1.7,1.7 0 1,0 3.4,0a1.7,1.7 0 1,0 -3.4,0 M1093.3,590.6a1.7,1.7 0 1,0 3.4,0a1.7,1.7 0 1,0 -3.4,0 M1086.8,585.4a1.7,1.7 0 1,0 3.4,0a1.7,1.7 0 1,0 -3.4,0 M1086.1,583.7a1.7,1.7 0 1,0 3.4,0a1.7,1.7 0 1,0 -3.4,0 M1090.3,567.1a1.7,1.7 0 1,0 3.4,0a1.7,1.7 0 1,0 -3.4,0 M1089.8,567.2a1.7,1.7 0 1,0 3.4,0a1.7,1.7 0 1,0 -3.4,0 M1100.5,593.5a1.7,1.7 0 1,0 3.4,0a1.7,1.7 0 1,0 -3.4,0 M1098.9,604.5a1.7,1.7 0 1,0 3.4,0a1.7,1.7 0 1,0 -3.4,0 M1078.0,580.8a1.7,1.7 0 1,0 3.4,0a1.7,1.7 0 1,0 -3.4,0 M1080.0,594.5a1.7,1.7 0 1,0 3.4,0a1.7,1.7 0 1,0 -3.4,0 M1087.0,606.3a1.7,1.7 0 1,0 3.4,0a1.7,1.7 0 1,0 -3.4,0 M1086.9,608.1a1.7,1.7 0 1,0 3.4,0a1.7,1.7 0 1,0 -3.4,0 M1100.7,569.6a1.7,1.7 0 1,0 3.4,0a1.7,1.7 0 1,0 -3.4,0 M1100.4,570.4a1.7,1.7 0 1,0 3.4,0a1.7,1.7 0 1,0 -3.4,0 M1099.9,562.0a1.7,1.7 0 1,0 3.4,0a1.7,1.7 0 1,0 -3.4,0 M1105.7,583.7a1.7,1.7 0 1,0 3.4,0a1.7,1.7 0 1,0 -3.4,0 M1108.5,596.1a1.7,1.7 0 1,0 3.4,0a1.7,1.7 0 1,0 -3.4,0 M1078.6,571.1a1.7,1.7 0 1,0 3.4,0a1.7,1.7 0 1,0 -3.4,0 M1093.8,586.9a1.7,1.7 0 1,0 3.4,0a1.7,1.7 0 1,0 -3.4,0 M1085.0,581.8a1.7,1.7 0 1,0 3.4,0a1.7,1.7 0 1,0 -3.4,0 M1085.2,583.8a1.7,1.7 0 1,0 3.4,0a1.7,1.7 0 1,0 -3.4,0 M1095.2,606.5a1.7,1.7 0 1,0 3.4,0a1.7,1.7 0 1,0 -3.4,0 M1089.7,573.9a1.7,1.7 0 1,0 3.4,0a1.7,1.7 0 1,0 -3.4,0 M1090.7,572.2a1.7,1.7 0 1,0 3.4,0a1.7,1.7 0 1,0 -3.4,0 M1096.7,601.4a1.7,1.7 0 1,0 3.4,0a1.7,1.7 0 1,0 -3.4,0 M1097.0,600.5a1.7,1.7 0 1,0 3.4,0a1.7,1.7 0 1,0 -3.4,0 M1087.4,595.5a1.7,1.7 0 1,0 3.4,0a1.7,1.7 0 1,0 -3.4,0 M1089.1,563.8a1.7,1.7 0 1,0 3.4,0a1.7,1.7 0 1,0 -3.4,0 M1097.9,576.5a1.7,1.7 0 1,0 3.4,0a1.7,1.7 0 1,0 -3.4,0 M1099.0,577.0a1.7,1.7 0 1,0 3.4,0a1.7,1.7 0 1,0 -3.4,0 M1101.4,588.0a1.7,1.7 0 1,0 3.4,0a1.7,1.7 0 1,0 -3.4,0 M1076.3,578.4a1.7,1.7 0 1,0 3.4,0a1.7,1.7 0 1,0 -3.4,0 M1084.2,601.8a1.7,1.7 0 1,0 3.4,0a1.7,1.7 0 1,0 -3.4,0 M1080.7,590.4a1.7,1.7 0 1,0 3.4,0a1.7,1.7 0 1,0 -3.4,0 M1080.6,592.2a1.7,1.7 0 1,0 3.4,0a1.7,1.7 0 1,0 -3.4,0 M1104.4,578.7a1.7,1.7 0 1,0 3.4,0a1.7,1.7 0 1,0 -3.4,0 M1095.3,564.5a1.7,1.7 0 1,0 3.4,0a1.7,1.7 0 1,0 -3.4,0 M1093.5,563.6a1.7,1.7 0 1,0 3.4,0a1.7,1.7 0 1,0 -3.4,0 M1108.0,592.7a1.7,1.7 0 1,0 3.4,0a1.7,1.7 0 1,0 -3.4,0 M1021.6,564.7a1.7,1.7 0 1,0 3.4,0a1.7,1.7 0 1,0 -3.4,0 M1023.0,564.6a1.7,1.7 0 1,0 3.4,0a1.7,1.7 0 1,0 -3.4,0 M1023.4,557.4a1.7,1.7 0 1,0 3.4,0a1.7,1.7 0 1,0 -3.4,0 M1014.4,553.4a1.7,1.7 0 1,0 3.4,0a1.7,1.7 0 1,0 -3.4,0 M1016.0,554.4a1.7,1.7 0 1,0 3.4,0a1.7,1.7 0 1,0 -3.4,0 M1030.4,558.6a1.7,1.7 0 1,0 3.4,0a1.7,1.7 0 1,0 -3.4,0 M1039.2,553.0a1.7,1.7 0 1,0 3.4,0a1.7,1.7 0 1,0 -3.4,0 M1036.7,559.6a1.7,1.7 0 1,0 3.4,0a1.7,1.7 0 1,0 -3.4,0 M1021.9,553.5a1.7,1.7 0 1,0 3.4,0a1.7,1.7 0 1,0 -3.4,0 M1029.4,565.6a1.7,1.7 0 1,0 3.4,0a1.7,1.7 0 1,0 -3.4,0 M1018.9,561.0a1.7,1.7 0 1,0 3.4,0a1.7,1.7 0 1,0 -3.4,0 M1035.7,566.6a1.7,1.7 0 1,0 3.4,0a1.7,1.7 0 1,0 -3.4,0 M1027.2,556.4a1.7,1.7 0 1,0 3.4,0a1.7,1.7 0 1,0 -3.4,0 M1044.7,556.2a1.7,1.7 0 1,0 3.4,0a1.7,1.7 0 1,0 -3.4,0 M1018.2,567.5a1.7,1.7 0 1,0 3.4,0a1.7,1.7 0 1,0 -3.4,0 M1034.8,555.8a1.7,1.7 0 1,0 3.4,0a1.7,1.7 0 1,0 -3.4,0 M1044.2,569.4a1.7,1.7 0 1,0 3.4,0a1.7,1.7 0 1,0 -3.4,0 M1043.6,563.5a1.7,1.7 0 1,0 3.4,0a1.7,1.7 0 1,0 -3.4,0 M1041.7,562.7a1.7,1.7 0 1,0 3.4,0a1.7,1.7 0 1,0 -3.4,0 M1017.4,556.9a1.7,1.7 0 1,0 3.4,0a1.7,1.7 0 1,0 -3.4,0 M1018.6,557.4a1.7,1.7 0 1,0 3.4,0a1.7,1.7 0 1,0 -3.4,0 M1025.6,568.8a1.7,1.7 0 1,0 3.4,0a1.7,1.7 0 1,0 -3.4,0 M1024.4,570.3a1.7,1.7 0 1,0 3.4,0a1.7,1.7 0 1,0 -3.4,0 M1025.1,552.7a1.7,1.7 0 1,0 3.4,0a1.7,1.7 0 1,0 -3.4,0 M1026.2,562.9a1.7,1.7 0 1,0 3.4,0a1.7,1.7 0 1,0 -3.4,0 M1033.0,563.3a1.7,1.7 0 1,0 3.4,0a1.7,1.7 0 1,0 -3.4,0 M1040.0,565.2a1.7,1.7 0 1,0 3.4,0a1.7,1.7 0 1,0 -3.4,0 M1039.8,557.8a1.7,1.7 0 1,0 3.4,0a1.7,1.7 0 1,0 -3.4,0 M1033.2,552.1a1.7,1.7 0 1,0 3.4,0a1.7,1.7 0 1,0 -3.4,0 M1059.1,687.5a1.7,1.7 0 1,0 3.4,0a1.7,1.7 0 1,0 -3.4,0 M1020.3,737.3a1.7,1.7 0 1,0 3.4,0a1.7,1.7 0 1,0 -3.4,0 M1020.1,737.4a1.7,1.7 0 1,0 3.4,0a1.7,1.7 0 1,0 -3.4,0 M1029.8,736.3a1.7,1.7 0 1,0 3.4,0a1.7,1.7 0 1,0 -3.4,0 M1049.1,705.7a1.7,1.7 0 1,0 3.4,0a1.7,1.7 0 1,0 -3.4,0 M1045.9,715.2a1.7,1.7 0 1,0 3.4,0a1.7,1.7 0 1,0 -3.4,0 M1059.9,697.0a1.7,1.7 0 1,0 3.4,0a1.7,1.7 0 1,0 -3.4,0 M1060.7,673.5a1.7,1.7 0 1,0 3.4,0a1.7,1.7 0 1,0 -3.4,0 M1005.4,742.3a1.7,1.7 0 1,0 3.4,0a1.7,1.7 0 1,0 -3.4,0 M1041.0,724.6a1.7,1.7 0 1,0 3.4,0a1.7,1.7 0 1,0 -3.4,0 M1029.3,721.8a1.7,1.7 0 1,0 3.4,0a1.7,1.7 0 1,0 -3.4,0 M1055.6,682.8a1.7,1.7 0 1,0 3.4,0a1.7,1.7 0 1,0 -3.4,0 M1055.2,681.1a1.7,1.7 0 1,0 3.4,0a1.7,1.7 0 1,0 -3.4,0 M1014.8,734.4a1.7,1.7 0 1,0 3.4,0a1.7,1.7 0 1,0 -3.4,0 M1024.9,732.0a1.7,1.7 0 1,0 3.4,0a1.7,1.7 0 1,0 -3.4,0 M1023.5,731.7a1.7,1.7 0 1,0 3.4,0a1.7,1.7 0 1,0 -3.4,0 M1015.6,742.8a1.7,1.7 0 1,0 3.4,0a1.7,1.7 0 1,0 -3.4,0 M1043.1,709.9a1.7,1.7 0 1,0 3.4,0a1.7,1.7 0 1,0 -3.4,0 M1054.9,692.2a1.7,1.7 0 1,0 3.4,0a1.7,1.7 0 1,0 -3.4,0 M1054.9,702.2a1.7,1.7 0 1,0 3.4,0a1.7,1.7 0 1,0 -3.4,0 M1054.3,703.8a1.7,1.7 0 1,0 3.4,0a1.7,1.7 0 1,0 -3.4,0 M1065.0,683.2a1.7,1.7 0 1,0 3.4,0a1.7,1.7 0 1,0 -3.4,0 M1063.1,684.8a1.7,1.7 0 1,0 3.4,0a1.7,1.7 0 1,0 -3.4,0 M1034.7,730.4a1.7,1.7 0 1,0 3.4,0a1.7,1.7 0 1,0 -3.4,0 M1039.9,718.9a1.7,1.7 0 1,0 3.4,0a1.7,1.7 0 1,0 -3.4,0 M1038.5,720.5a1.7,1.7 0 1,0 3.4,0a1.7,1.7 0 1,0 -3.4,0 M1063.8,692.4a1.7,1.7 0 1,0 3.4,0a1.7,1.7 0 1,0 -3.4,0 M1068.8,667.9a1.7,1.7 0 1,0 3.4,0a1.7,1.7 0 1,0 -3.4,0 M1069.5,666.7a1.7,1.7 0 1,0 3.4,0a1.7,1.7 0 1,0 -3.4,0 M1009.4,739.1a1.7,1.7 0 1,0 3.4,0a1.7,1.7 0 1,0 -3.4,0 M1021.9,728.8a1.7,1.7 0 1,0 3.4,0a1.7,1.7 0 1,0 -3.4,0 M1048.2,695.9a1.7,1.7 0 1,0 3.4,0a1.7,1.7 0 1,0 -3.4,0 M1049.9,695.2a1.7,1.7 0 1,0 3.4,0a1.7,1.7 0 1,0 -3.4,0 M1063.2,677.7a1.7,1.7 0 1,0 3.4,0a1.7,1.7 0 1,0 -3.4,0 M1064.3,676.1a1.7,1.7 0 1,0 3.4,0a1.7,1.7 0 1,0 -3.4,0 M1032.7,725.7a1.7,1.7 0 1,0 3.4,0a1.7,1.7 0 1,0 -3.4,0 M1033.3,725.5a1.7,1.7 0 1,0 3.4,0a1.7,1.7 0 1,0 -3.4,0 M1037.0,714.4a1.7,1.7 0 1,0 3.4,0a1.7,1.7 0 1,0 -3.4,0 M955.5,777.2a1.7,1.7 0 1,0 3.4,0a1.7,1.7 0 1,0 -3.4,0 M962.8,769.7a1.7,1.7 0 1,0 3.4,0a1.7,1.7 0 1,0 -3.4,0 M961.0,769.2a1.7,1.7 0 1,0 3.4,0a1.7,1.7 0 1,0 -3.4,0 M952.4,761.6a1.7,1.7 0 1,0 3.4,0a1.7,1.7 0 1,0 -3.4,0 M967.8,754.3a1.7,1.7 0 1,0 3.4,0a1.7,1.7 0 1,0 -3.4,0 M966.2,754.0a1.7,1.7 0 1,0 3.4,0a1.7,1.7 0 1,0 -3.4,0 M997.0,745.3a1.7,1.7 0 1,0 3.4,0a1.7,1.7 0 1,0 -3.4,0 M944.1,768.8a1.7,1.7 0 1,0 3.4,0a1.7,1.7 0 1,0 -3.4,0 M976.7,755.4a1.7,1.7 0 1,0 3.4,0a1.7,1.7 0 1,0 -3.4,0 M975.9,754.9a1.7,1.7 0 1,0 3.4,0a1.7,1.7 0 1,0 -3.4,0 M960.5,763.4a1.7,1.7 0 1,0 3.4,0a1.7,1.7 0 1,0 -3.4,0 M959.0,763.7a1.7,1.7 0 1,0 3.4,0a1.7,1.7 0 1,0 -3.4,0 M964.4,779.4a1.7,1.7 0 1,0 3.4,0a1.7,1.7 0 1,0 -3.4,0 M954.2,771.5a1.7,1.7 0 1,0 3.4,0a1.7,1.7 0 1,0 -3.4,0 M969.6,765.3a1.7,1.7 0 1,0 3.4,0a1.7,1.7 0 1,0 -3.4,0 M968.0,763.3a1.7,1.7 0 1,0 3.4,0a1.7,1.7 0 1,0 -3.4,0 M991.2,747.2a1.7,1.7 0 1,0 3.4,0a1.7,1.7 0 1,0 -3.4,0 M948.5,779.2a1.7,1.7 0 1,0 3.4,0a1.7,1.7 0 1,0 -3.4,0 M949.4,780.4a1.7,1.7 0 1,0 3.4,0a1.7,1.7 0 1,0 -3.4,0 M954.0,765.9a1.7,1.7 0 1,0 3.4,0a1.7,1.7 0 1,0 -3.4,0 M952.8,765.2a1.7,1.7 0 1,0 3.4,0a1.7,1.7 0 1,0 -3.4,0 M960.0,758.0a1.7,1.7 0 1,0 3.4,0a1.7,1.7 0 1,0 -3.4,0 M959.0,782.5a1.7,1.7 0 1,0 3.4,0a1.7,1.7 0 1,0 -3.4,0 M968.9,759.5a1.7,1.7 0 1,0 3.4,0a1.7,1.7 0 1,0 -3.4,0 M968.7,758.9a1.7,1.7 0 1,0 3.4,0a1.7,1.7 0 1,0 -3.4,0 M962.6,774.4a1.7,1.7 0 1,0 3.4,0a1.7,1.7 0 1,0 -3.4,0 M946.4,773.9a1.7,1.7 0 1,0 3.4,0a1.7,1.7 0 1,0 -3.4,0 M982.9,751.0a1.7,1.7 0 1,0 3.4,0a1.7,1.7 0 1,0 -3.4,0 M984.2,752.7a1.7,1.7 0 1,0 3.4,0a1.7,1.7 0 1,0 -3.4,0 M917.0,692.3a1.7,1.7 0 1,0 3.4,0a1.7,1.7 0 1,0 -3.4,0 M908.1,696.3a1.7,1.7 0 1,0 3.4,0a1.7,1.7 0 1,0 -3.4,0 M909.9,696.4a1.7,1.7 0 1,0 3.4,0a1.7,1.7 0 1,0 -3.4,0 M912.2,694.9a1.7,1.7 0 1,0 3.4,0a1.7,1.7 0 1,0 -3.4,0 M912.1,694.3a1.7,1.7 0 1,0 3.4,0a1.7,1.7 0 1,0 -3.4,0 M915.7,688.3a1.7,1.7 0 1,0 3.4,0a1.7,1.7 0 1,0 -3.4,0 M917.3,690.0a1.7,1.7 0 1,0 3.4,0a1.7,1.7 0 1,0 -3.4,0 M914.5,684.3a1.7,1.7 0 1,0 3.4,0a1.7,1.7 0 1,0 -3.4,0 M914.2,683.3a1.7,1.7 0 1,0 3.4,0a1.7,1.7 0 1,0 -3.4,0 M910.8,689.9a1.7,1.7 0 1,0 3.4,0a1.7,1.7 0 1,0 -3.4,0 M918.5,686.3a1.7,1.7 0 1,0 3.4,0a1.7,1.7 0 1,0 -3.4,0 M917.8,686.0a1.7,1.7 0 1,0 3.4,0a1.7,1.7 0 1,0 -3.4,0 M908.4,685.1a1.7,1.7 0 1,0 3.4,0a1.7,1.7 0 1,0 -3.4,0 M941.5,679.6a1.7,1.7 0 1,0 3.4,0a1.7,1.7 0 1,0 -3.4,0 M941.1,678.1a1.7,1.7 0 1,0 3.4,0a1.7,1.7 0 1,0 -3.4,0 M936.0,681.6a1.7,1.7 0 1,0 3.4,0a1.7,1.7 0 1,0 -3.4,0 M940.0,675.1a1.7,1.7 0 1,0 3.4,0a1.7,1.7 0 1,0 -3.4,0 M943.0,688.5a1.7,1.7 0 1,0 3.4,0a1.7,1.7 0 1,0 -3.4,0 M941.1,670.2a1.7,1.7 0 1,0 3.4,0a1.7,1.7 0 1,0 -3.4,0 M943.0,669.0a1.7,1.7 0 1,0 3.4,0a1.7,1.7 0 1,0 -3.4,0 M940.7,683.4a1.7,1.7 0 1,0 3.4,0a1.7,1.7 0 1,0 -3.4,0 M934.4,677.2a1.7,1.7 0 1,0 3.4,0a1.7,1.7 0 1,0 -3.4,0 M932.5,676.4a1.7,1.7 0 1,0 3.4,0a1.7,1.7 0 1,0 -3.4,0 M935.9,691.9a1.7,1.7 0 1,0 3.4,0a1.7,1.7 0 1,0 -3.4,0 M939.5,690.3a1.7,1.7 0 1,0 3.4,0a1.7,1.7 0 1,0 -3.4,0 M939.5,690.4a1.7,1.7 0 1,0 3.4,0a1.7,1.7 0 1,0 -3.4,0 M933.7,687.6a1.7,1.7 0 1,0 3.4,0a1.7,1.7 0 1,0 -3.4,0 M933.8,685.9a1.7,1.7 0 1,0 3.4,0a1.7,1.7 0 1,0 -3.4,0 M938.1,685.0a1.7,1.7 0 1,0 3.4,0a1.7,1.7 0 1,0 -3.4,0 M937.2,686.3a1.7,1.7 0 1,0 3.4,0a1.7,1.7 0 1,0 -3.4,0 M853.5,715.1a1.7,1.7 0 1,0 3.4,0a1.7,1.7 0 1,0 -3.4,0 M853.7,715.2a1.7,1.7 0 1,0 3.4,0a1.7,1.7 0 1,0 -3.4,0 M841.3,717.2a1.7,1.7 0 1,0 3.4,0a1.7,1.7 0 1,0 -3.4,0 M846.4,716.6a1.7,1.7 0 1,0 3.4,0a1.7,1.7 0 1,0 -3.4,0 M849.8,709.5a1.7,1.7 0 1,0 3.4,0a1.7,1.7 0 1,0 -3.4,0 M849.0,705.1a1.7,1.7 0 1,0 3.4,0a1.7,1.7 0 1,0 -3.4,0 M847.8,705.0a1.7,1.7 0 1,0 3.4,0a1.7,1.7 0 1,0 -3.4,0 M840.6,713.1a1.7,1.7 0 1,0 3.4,0a1.7,1.7 0 1,0 -3.4,0 M840.8,711.4a1.7,1.7 0 1,0 3.4,0a1.7,1.7 0 1,0 -3.4,0 M854.1,719.3a1.7,1.7 0 1,0 3.4,0a1.7,1.7 0 1,0 -3.4,0 M847.3,711.5a1.7,1.7 0 1,0 3.4,0a1.7,1.7 0 1,0 -3.4,0 M839.5,706.3a1.7,1.7 0 1,0 3.4,0a1.7,1.7 0 1,0 -3.4,0 M838.0,708.0a1.7,1.7 0 1,0 3.4,0a1.7,1.7 0 1,0 -3.4,0 M854.4,709.2a1.7,1.7 0 1,0 3.4,0a1.7,1.7 0 1,0 -3.4,0 M843.3,706.6a1.7,1.7 0 1,0 3.4,0a1.7,1.7 0 1,0 -3.4,0 M842.5,720.3a1.7,1.7 0 1,0 3.4,0a1.7,1.7 0 1,0 -3.4,0 M848.2,720.2a1.7,1.7 0 1,0 3.4,0a1.7,1.7 0 1,0 -3.4,0 M851.9,703.7a1.7,1.7 0 1,0 3.4,0a1.7,1.7 0 1,0 -3.4,0 M852.8,705.5a1.7,1.7 0 1,0 3.4,0a1.7,1.7 0 1,0 -3.4,0 M967.4,674.5a1.7,1.7 0 1,0 3.4,0a1.7,1.7 0 1,0 -3.4,0 M967.1,676.0a1.7,1.7 0 1,0 3.4,0a1.7,1.7 0 1,0 -3.4,0 M966.5,680.5a1.7,1.7 0 1,0 3.4,0a1.7,1.7 0 1,0 -3.4,0 M1132.2,535.5a1.7,1.7 0 1,0 3.4,0a1.7,1.7 0 1,0 -3.4,0 M1134.6,527.0a1.7,1.7 0 1,0 3.4,0a1.7,1.7 0 1,0 -3.4,0 M1122.5,524.4a1.7,1.7 0 1,0 3.4,0a1.7,1.7 0 1,0 -3.4,0 M1137.4,548.3a1.7,1.7 0 1,0 3.4,0a1.7,1.7 0 1,0 -3.4,0 M1138.1,549.1a1.7,1.7 0 1,0 3.4,0a1.7,1.7 0 1,0 -3.4,0 M1143.3,539.2a1.7,1.7 0 1,0 3.4,0a1.7,1.7 0 1,0 -3.4,0 M1150.7,540.3a1.7,1.7 0 1,0 3.4,0a1.7,1.7 0 1,0 -3.4,0 M1121.5,532.2a1.7,1.7 0 1,0 3.4,0a1.7,1.7 0 1,0 -3.4,0 M1126.6,546.0a1.7,1.7 0 1,0 3.4,0a1.7,1.7 0 1,0 -3.4,0 M1126.7,545.4a1.7,1.7 0 1,0 3.4,0a1.7,1.7 0 1,0 -3.4,0 M1130.5,523.1a1.7,1.7 0 1,0 3.4,0a1.7,1.7 0 1,0 -3.4,0 M1132.1,521.8a1.7,1.7 0 1,0 3.4,0a1.7,1.7 0 1,0 -3.4,0 M1141.4,535.6a1.7,1.7 0 1,0 3.4,0a1.7,1.7 0 1,0 -3.4,0 M1129.1,531.8a1.7,1.7 0 1,0 3.4,0a1.7,1.7 0 1,0 -3.4,0 M1129.1,533.8a1.7,1.7 0 1,0 3.4,0a1.7,1.7 0 1,0 -3.4,0 M1149.2,536.0a1.7,1.7 0 1,0 3.4,0a1.7,1.7 0 1,0 -3.4,0 M1150.6,534.0a1.7,1.7 0 1,0 3.4,0a1.7,1.7 0 1,0 -3.4,0 M1135.9,543.7a1.7,1.7 0 1,0 3.4,0a1.7,1.7 0 1,0 -3.4,0 M1124.2,541.4a1.7,1.7 0 1,0 3.4,0a1.7,1.7 0 1,0 -3.4,0 M1116.0,527.1a1.7,1.7 0 1,0 3.4,0a1.7,1.7 0 1,0 -3.4,0 M1125.7,527.5a1.7,1.7 0 1,0 3.4,0a1.7,1.7 0 1,0 -3.4,0 M1144.5,543.7a1.7,1.7 0 1,0 3.4,0a1.7,1.7 0 1,0 -3.4,0 M1134.7,540.1a1.7,1.7 0 1,0 3.4,0a1.7,1.7 0 1,0 -3.4,0 M1134.1,539.9a1.7,1.7 0 1,0 3.4,0a1.7,1.7 0 1,0 -3.4,0 M1138.1,532.4a1.7,1.7 0 1,0 3.4,0a1.7,1.7 0 1,0 -3.4,0 M1146.8,531.5a1.7,1.7 0 1,0 3.4,0a1.7,1.7 0 1,0 -3.4,0 M1146.9,531.4a1.7,1.7 0 1,0 3.4,0a1.7,1.7 0 1,0 -3.4,0 M1123.2,535.8a1.7,1.7 0 1,0 3.4,0a1.7,1.7 0 1,0 -3.4,0 M1167.4,554.1a1.7,1.7 0 1,0 3.4,0a1.7,1.7 0 1,0 -3.4,0 M1166.7,554.1a1.7,1.7 0 1,0 3.4,0a1.7,1.7 0 1,0 -3.4,0 M1161.3,561.9a1.7,1.7 0 1,0 3.4,0a1.7,1.7 0 1,0 -3.4,0 M1166.1,560.5a1.7,1.7 0 1,0 3.4,0a1.7,1.7 0 1,0 -3.4,0 M1159.2,556.0a1.7,1.7 0 1,0 3.4,0a1.7,1.7 0 1,0 -3.4,0 M1163.7,555.4a1.7,1.7 0 1,0 3.4,0a1.7,1.7 0 1,0 -3.4,0 M1148.0,574.5a1.7,1.7 0 1,0 3.4,0a1.7,1.7 0 1,0 -3.4,0 M1146.9,575.7a1.7,1.7 0 1,0 3.4,0a1.7,1.7 0 1,0 -3.4,0 M1144.0,576.4a1.7,1.7 0 1,0 3.4,0a1.7,1.7 0 1,0 -3.4,0 M1152.3,572.0a1.7,1.7 0 1,0 3.4,0a1.7,1.7 0 1,0 -3.4,0 M1152.3,573.2a1.7,1.7 0 1,0 3.4,0a1.7,1.7 0 1,0 -3.4,0 M1135.4,574.1a1.7,1.7 0 1,0 3.4,0a1.7,1.7 0 1,0 -3.4,0 M1141.0,571.9a1.7,1.7 0 1,0 3.4,0a1.7,1.7 0 1,0 -3.4,0 M1133.4,571.1a1.7,1.7 0 1,0 3.4,0a1.7,1.7 0 1,0 -3.4,0 M1131.7,569.9a1.7,1.7 0 1,0 3.4,0a1.7,1.7 0 1,0 -3.4,0 M1139.4,567.4a1.7,1.7 0 1,0 3.4,0a1.7,1.7 0 1,0 -3.4,0 M1187.5,571.1a1.7,1.7 0 1,0 3.4,0a1.7,1.7 0 1,0 -3.4,0 M1187.7,571.5a1.7,1.7 0 1,0 3.4,0a1.7,1.7 0 1,0 -3.4,0 M1183.5,572.8a1.7,1.7 0 1,0 3.4,0a1.7,1.7 0 1,0 -3.4,0 M1185.2,568.2a1.7,1.7 0 1,0 3.4,0a1.7,1.7 0 1,0 -3.4,0 M1177.9,571.8a1.7,1.7 0 1,0 3.4,0a1.7,1.7 0 1,0 -3.4,0 M1179.7,571.7a1.7,1.7 0 1,0 3.4,0a1.7,1.7 0 1,0 -3.4,0 M1181.6,569.4a1.7,1.7 0 1,0 3.4,0a1.7,1.7 0 1,0 -3.4,0 M1182.7,569.9a1.7,1.7 0 1,0 3.4,0a1.7,1.7 0 1,0 -3.4,0 M1174.1,566.9a1.7,1.7 0 1,0 3.4,0a1.7,1.7 0 1,0 -3.4,0 M1179.0,564.7a1.7,1.7 0 1,0 3.4,0a1.7,1.7 0 1,0 -3.4,0 M958.0,829.0a1.7,1.7 0 1,0 3.4,0a1.7,1.7 0 1,0 -3.4,0 M950.0,831.3a1.7,1.7 0 1,0 3.4,0a1.7,1.7 0 1,0 -3.4,0 M948.4,832.2a1.7,1.7 0 1,0 3.4,0a1.7,1.7 0 1,0 -3.4,0 M952.8,830.7a1.7,1.7 0 1,0 3.4,0a1.7,1.7 0 1,0 -3.4,0 M951.3,830.7a1.7,1.7 0 1,0 3.4,0a1.7,1.7 0 1,0 -3.4,0 M955.2,824.0a1.7,1.7 0 1,0 3.4,0a1.7,1.7 0 1,0 -3.4,0 M956.4,824.1a1.7,1.7 0 1,0 3.4,0a1.7,1.7 0 1,0 -3.4,0 M953.5,820.7a1.7,1.7 0 1,0 3.4,0a1.7,1.7 0 1,0 -3.4,0 M946.0,825.7a1.7,1.7 0 1,0 3.4,0a1.7,1.7 0 1,0 -3.4,0 M950.8,826.0a1.7,1.7 0 1,0 3.4,0a1.7,1.7 0 1,0 -3.4,0 M952.1,825.5a1.7,1.7 0 1,0 3.4,0a1.7,1.7 0 1,0 -3.4,0 M959.2,823.8a1.7,1.7 0 1,0 3.4,0a1.7,1.7 0 1,0 -3.4,0 M949.9,821.5a1.7,1.7 0 1,0 3.4,0a1.7,1.7 0 1,0 -3.4,0 M949.6,821.6a1.7,1.7 0 1,0 3.4,0a1.7,1.7 0 1,0 -3.4,0 M959.2,818.4a1.7,1.7 0 1,0 3.4,0a1.7,1.7 0 1,0 -3.4,0 M957.5,820.1a1.7,1.7 0 1,0 3.4,0a1.7,1.7 0 1,0 -3.4,0 M971.1,684.4a1.7,1.7 0 1,0 3.4,0a1.7,1.7 0 1,0 -3.4,0 M1000.7,675.7a1.7,1.7 0 1,0 3.4,0a1.7,1.7 0 1,0 -3.4,0 M980.4,677.7a1.7,1.7 0 1,0 3.4,0a1.7,1.7 0 1,0 -3.4,0 M981.1,677.5a1.7,1.7 0 1,0 3.4,0a1.7,1.7 0 1,0 -3.4,0 M991.3,697.1a1.7,1.7 0 1,0 3.4,0a1.7,1.7 0 1,0 -3.4,0 M990.4,696.6a1.7,1.7 0 1,0 3.4,0a1.7,1.7 0 1,0 -3.4,0 M992.7,685.6a1.7,1.7 0 1,0 3.4,0a1.7,1.7 0 1,0 -3.4,0 M1005.5,691.6a1.7,1.7 0 1,0 3.4,0a1.7,1.7 0 1,0 -3.4,0 M969.2,676.1a1.7,1.7 0 1,0 3.4,0a1.7,1.7 0 1,0 -3.4,0 M967.4,677.3a1.7,1.7 0 1,0 3.4,0a1.7,1.7 0 1,0 -3.4,0 M990.2,678.6a1.7,1.7 0 1,0 3.4,0a1.7,1.7 0 1,0 -3.4,0 M978.0,669.7a1.7,1.7 0 1,0 3.4,0a1.7,1.7 0 1,0 -3.4,0 M986.4,690.1a1.7,1.7 0 1,0 3.4,0a1.7,1.7 0 1,0 -3.4,0 M965.3,670.6a1.7,1.7 0 1,0 3.4,0a1.7,1.7 0 1,0 -3.4,0 M964.4,670.4a1.7,1.7 0 1,0 3.4,0a1.7,1.7 0 1,0 -3.4,0 M975.1,663.9a1.7,1.7 0 1,0 3.4,0a1.7,1.7 0 1,0 -3.4,0 M976.4,662.8a1.7,1.7 0 1,0 3.4,0a1.7,1.7 0 1,0 -3.4,0 M974.8,690.0a1.7,1.7 0 1,0 3.4,0a1.7,1.7 0 1,0 -3.4,0 M974.6,688.2a1.7,1.7 0 1,0 3.4,0a1.7,1.7 0 1,0 -3.4,0 M999.3,694.0a1.7,1.7 0 1,0 3.4,0a1.7,1.7 0 1,0 -3.4,0 M999.7,694.4a1.7,1.7 0 1,0 3.4,0a1.7,1.7 0 1,0 -3.4,0 M1067.7,480.6a1.7,1.7 0 1,0 3.4,0a1.7,1.7 0 1,0 -3.4,0 M1064.8,474.3a1.7,1.7 0 1,0 3.4,0a1.7,1.7 0 1,0 -3.4,0 M1081.9,484.9a1.7,1.7 0 1,0 3.4,0a1.7,1.7 0 1,0 -3.4,0 M1071.9,471.5a1.7,1.7 0 1,0 3.4,0a1.7,1.7 0 1,0 -3.4,0 M1079.2,480.4a1.7,1.7 0 1,0 3.4,0a1.7,1.7 0 1,0 -3.4,0 M1071.9,486.4a1.7,1.7 0 1,0 3.4,0a1.7,1.7 0 1,0 -3.4,0 M1065.7,462.8a1.7,1.7 0 1,0 3.4,0a1.7,1.7 0 1,0 -3.4,0 M1073.4,478.2a1.7,1.7 0 1,0 3.4,0a1.7,1.7 0 1,0 -3.4,0 M1080.5,475.2a1.7,1.7 0 1,0 3.4,0a1.7,1.7 0 1,0 -3.4,0 M1088.3,483.3a1.7,1.7 0 1,0 3.4,0a1.7,1.7 0 1,0 -3.4,0 M1077.9,484.8a1.7,1.7 0 1,0 3.4,0a1.7,1.7 0 1,0 -3.4,0 M1067.6,469.5a1.7,1.7 0 1,0 3.4,0a1.7,1.7 0 1,0 -3.4,0 M1067.9,484.7a1.7,1.7 0 1,0 3.4,0a1.7,1.7 0 1,0 -3.4,0 M1066.7,483.7a1.7,1.7 0 1,0 3.4,0a1.7,1.7 0 1,0 -3.4,0 M1080.7,490.9a1.7,1.7 0 1,0 3.4,0a1.7,1.7 0 1,0 -3.4,0 M1084.5,482.4a1.7,1.7 0 1,0 3.4,0a1.7,1.7 0 1,0 -3.4,0 M1073.1,483.7a1.7,1.7 0 1,0 3.4,0a1.7,1.7 0 1,0 -3.4,0 M1073.1,485.2a1.7,1.7 0 1,0 3.4,0a1.7,1.7 0 1,0 -3.4,0 M1069.7,477.5a1.7,1.7 0 1,0 3.4,0a1.7,1.7 0 1,0 -3.4,0 M1086.5,487.5a1.7,1.7 0 1,0 3.4,0a1.7,1.7 0 1,0 -3.4,0 M1074.9,474.3a1.7,1.7 0 1,0 3.4,0a1.7,1.7 0 1,0 -3.4,0 M1077.5,494.6a1.7,1.7 0 1,0 3.4,0a1.7,1.7 0 1,0 -3.4,0 M1076.1,490.2a1.7,1.7 0 1,0 3.4,0a1.7,1.7 0 1,0 -3.4,0 M1077.9,489.4a1.7,1.7 0 1,0 3.4,0a1.7,1.7 0 1,0 -3.4,0 M1068.7,465.2a1.7,1.7 0 1,0 3.4,0a1.7,1.7 0 1,0 -3.4,0 M1125.9,588.5a1.7,1.7 0 1,0 3.4,0a1.7,1.7 0 1,0 -3.4,0 M1115.5,589.9a1.7,1.7 0 1,0 3.4,0a1.7,1.7 0 1,0 -3.4,0 M1117.0,588.8a1.7,1.7 0 1,0 3.4,0a1.7,1.7 0 1,0 -3.4,0 M1134.9,575.1a1.7,1.7 0 1,0 3.4,0a1.7,1.7 0 1,0 -3.4,0 M1133.6,576.5a1.7,1.7 0 1,0 3.4,0a1.7,1.7 0 1,0 -3.4,0 M1114.7,574.4a1.7,1.7 0 1,0 3.4,0a1.7,1.7 0 1,0 -3.4,0 M1114.5,573.2a1.7,1.7 0 1,0 3.4,0a1.7,1.7 0 1,0 -3.4,0 M1120.1,588.6a1.7,1.7 0 1,0 3.4,0a1.7,1.7 0 1,0 -3.4,0 M1122.0,589.4a1.7,1.7 0 1,0 3.4,0a1.7,1.7 0 1,0 -3.4,0 M1126.8,582.9a1.7,1.7 0 1,0 3.4,0a1.7,1.7 0 1,0 -3.4,0 M1134.7,589.8a1.7,1.7 0 1,0 3.4,0a1.7,1.7 0 1,0 -3.4,0 M1131.0,585.2a1.7,1.7 0 1,0 3.4,0a1.7,1.7 0 1,0 -3.4,0 M1135.6,584.1a1.7,1.7 0 1,0 3.4,0a1.7,1.7 0 1,0 -3.4,0 M1125.5,577.9a1.7,1.7 0 1,0 3.4,0a1.7,1.7 0 1,0 -3.4,0 M1114.7,583.6a1.7,1.7 0 1,0 3.4,0a1.7,1.7 0 1,0 -3.4,0 M1112.9,583.8a1.7,1.7 0 1,0 3.4,0a1.7,1.7 0 1,0 -3.4,0 M1119.9,583.3a1.7,1.7 0 1,0 3.4,0a1.7,1.7 0 1,0 -3.4,0 M1115.6,580.5a1.7,1.7 0 1,0 3.4,0a1.7,1.7 0 1,0 -3.4,0 M1130.0,581.2a1.7,1.7 0 1,0 3.4,0a1.7,1.7 0 1,0 -3.4,0 M1120.7,579.7a1.7,1.7 0 1,0 3.4,0a1.7,1.7 0 1,0 -3.4,0 M1111.5,583.6a1.7,1.7 0 1,0 3.4,0a1.7,1.7 0 1,0 -3.4,0 M1113.4,584.1a1.7,1.7 0 1,0 3.4,0a1.7,1.7 0 1,0 -3.4,0 M1129.2,577.9a1.7,1.7 0 1,0 3.4,0a1.7,1.7 0 1,0 -3.4,0 M1128.1,579.8a1.7,1.7 0 1,0 3.4,0a1.7,1.7 0 1,0 -3.4,0 M1086.7,689.4a1.7,1.7 0 1,0 3.4,0a1.7,1.7 0 1,0 -3.4,0 M1087.3,688.1a1.7,1.7 0 1,0 3.4,0a1.7,1.7 0 1,0 -3.4,0 M1071.1,695.8a1.7,1.7 0 1,0 3.4,0a1.7,1.7 0 1,0 -3.4,0 M1070.1,694.9a1.7,1.7 0 1,0 3.4,0a1.7,1.7 0 1,0 -3.4,0 M1061.5,671.1a1.7,1.7 0 1,0 3.4,0a1.7,1.7 0 1,0 -3.4,0 M1067.5,683.9a1.7,1.7 0 1,0 3.4,0a1.7,1.7 0 1,0 -3.4,0 M1057.8,632.6a1.7,1.7 0 1,0 3.4,0a1.7,1.7 0 1,0 -3.4,0 M1079.4,676.8a1.7,1.7 0 1,0 3.4,0a1.7,1.7 0 1,0 -3.4,0 M1075.1,642.4a1.7,1.7 0 1,0 3.4,0a1.7,1.7 0 1,0 -3.4,0 M1096.3,683.2a1.7,1.7 0 1,0 3.4,0a1.7,1.7 0 1,0 -3.4,0 M1058.8,643.4a1.7,1.7 0 1,0 3.4,0a1.7,1.7 0 1,0 -3.4,0 M1086.4,633.6a1.7,1.7 0 1,0 3.4,0a1.7,1.7 0 1,0 -3.4,0 M1094.6,646.2a1.7,1.7 0 1,0 3.4,0a1.7,1.7 0 1,0 -3.4,0 M1095.6,647.9a1.7,1.7 0 1,0 3.4,0a1.7,1.7 0 1,0 -3.4,0 M1080.2,650.8a1.7,1.7 0 1,0 3.4,0a1.7,1.7 0 1,0 -3.4,0 M1068.2,628.5a1.7,1.7 0 1,0 3.4,0a1.7,1.7 0 1,0 -3.4,0 M1069.8,627.4a1.7,1.7 0 1,0 3.4,0a1.7,1.7 0 1,0 -3.4,0 M1097.9,709.5a1.7,1.7 0 1,0 3.4,0a1.7,1.7 0 1,0 -3.4,0 M1098.4,708.9a1.7,1.7 0 1,0 3.4,0a1.7,1.7 0 1,0 -3.4,0 M1078.3,703.9a1.7,1.7 0 1,0 3.4,0a1.7,1.7 0 1,0 -3.4,0 M1078.7,704.0a1.7,1.7 0 1,0 3.4,0a1.7,1.7 0 1,0 -3.4,0 M1063.8,654.7a1.7,1.7 0 1,0 3.4,0a1.7,1.7 0 1,0 -3.4,0 M1085.2,661.1a1.7,1.7 0 1,0 3.4,0a1.7,1.7 0 1,0 -3.4,0 M1070.8,665.6a1.7,1.7 0 1,0 3.4,0a1.7,1.7 0 1,0 -3.4,0 M1089.0,670.3a1.7,1.7 0 1,0 3.4,0a1.7,1.7 0 1,0 -3.4,0 M1061.0,682.4a1.7,1.7 0 1,0 3.4,0a1.7,1.7 0 1,0 -3.4,0 M1085.5,696.8a1.7,1.7 0 1,0 3.4,0a1.7,1.7 0 1,0 -3.4,0 M1073.3,676.8a1.7,1.7 0 1,0 3.4,0a1.7,1.7 0 1,0 -3.4,0 M1089.4,681.3a1.7,1.7 0 1,0 3.4,0a1.7,1.7 0 1,0 -3.4,0 M1100.7,694.3a1.7,1.7 0 1,0 3.4,0a1.7,1.7 0 1,0 -3.4,0 M1087.6,642.9a1.7,1.7 0 1,0 3.4,0a1.7,1.7 0 1,0 -3.4,0 M1085.9,642.7a1.7,1.7 0 1,0 3.4,0a1.7,1.7 0 1,0 -3.4,0 M1068.4,640.0a1.7,1.7 0 1,0 3.4,0a1.7,1.7 0 1,0 -3.4,0 M1095.0,653.9a1.7,1.7 0 1,0 3.4,0a1.7,1.7 0 1,0 -3.4,0 M1096.8,653.0a1.7,1.7 0 1,0 3.4,0a1.7,1.7 0 1,0 -3.4,0 M1079.0,633.5a1.7,1.7 0 1,0 3.4,0a1.7,1.7 0 1,0 -3.4,0 M1092.6,706.5a1.7,1.7 0 1,0 3.4,0a1.7,1.7 0 1,0 -3.4,0 M1063.3,662.6a1.7,1.7 0 1,0 3.4,0a1.7,1.7 0 1,0 -3.4,0 M1057.5,651.5a1.7,1.7 0 1,0 3.4,0a1.7,1.7 0 1,0 -3.4,0 M1056.5,652.0a1.7,1.7 0 1,0 3.4,0a1.7,1.7 0 1,0 -3.4,0 M1098.7,664.6a1.7,1.7 0 1,0 3.4,0a1.7,1.7 0 1,0 -3.4,0 M1084.1,669.3a1.7,1.7 0 1,0 3.4,0a1.7,1.7 0 1,0 -3.4,0 M1082.7,671.0a1.7,1.7 0 1,0 3.4,0a1.7,1.7 0 1,0 -3.4,0 M1078.0,659.2a1.7,1.7 0 1,0 3.4,0a1.7,1.7 0 1,0 -3.4,0 M1101.7,674.5a1.7,1.7 0 1,0 3.4,0a1.7,1.7 0 1,0 -3.4,0 M1073.6,686.0a1.7,1.7 0 1,0 3.4,0a1.7,1.7 0 1,0 -3.4,0 M1075.4,684.4a1.7,1.7 0 1,0 3.4,0a1.7,1.7 0 1,0 -3.4,0 M1100.5,700.8a1.7,1.7 0 1,0 3.4,0a1.7,1.7 0 1,0 -3.4,0 M1093.6,690.2a1.7,1.7 0 1,0 3.4,0a1.7,1.7 0 1,0 -3.4,0 M1093.7,689.5a1.7,1.7 0 1,0 3.4,0a1.7,1.7 0 1,0 -3.4,0 M1079.2,696.7a1.7,1.7 0 1,0 3.4,0a1.7,1.7 0 1,0 -3.4,0 M1066.8,673.1a1.7,1.7 0 1,0 3.4,0a1.7,1.7 0 1,0 -3.4,0 M1103.1,685.3a1.7,1.7 0 1,0 3.4,0a1.7,1.7 0 1,0 -3.4,0 M1066.5,647.5a1.7,1.7 0 1,0 3.4,0a1.7,1.7 0 1,0 -3.4,0 M1065.4,649.4a1.7,1.7 0 1,0 3.4,0a1.7,1.7 0 1,0 -3.4,0 M1062.8,635.8a1.7,1.7 0 1,0 3.4,0a1.7,1.7 0 1,0 -3.4,0 M1084.3,678.6a1.7,1.7 0 1,0 3.4,0a1.7,1.7 0 1,0 -3.4,0 M1083.3,678.1a1.7,1.7 0 1,0 3.4,0a1.7,1.7 0 1,0 -3.4,0 M1086.6,651.7a1.7,1.7 0 1,0 3.4,0a1.7,1.7 0 1,0 -3.4,0 M1075.2,630.7a1.7,1.7 0 1,0 3.4,0a1.7,1.7 0 1,0 -3.4,0 M1082.0,642.2a1.7,1.7 0 1,0 3.4,0a1.7,1.7 0 1,0 -3.4,0 M1081.9,642.1a1.7,1.7 0 1,0 3.4,0a1.7,1.7 0 1,0 -3.4,0 M1072.8,621.0a1.7,1.7 0 1,0 3.4,0a1.7,1.7 0 1,0 -3.4,0 M1072.9,621.3a1.7,1.7 0 1,0 3.4,0a1.7,1.7 0 1,0 -3.4,0 M1085.8,705.5a1.7,1.7 0 1,0 3.4,0a1.7,1.7 0 1,0 -3.4,0 M1088.4,713.9a1.7,1.7 0 1,0 3.4,0a1.7,1.7 0 1,0 -3.4,0 M1076.4,667.2a1.7,1.7 0 1,0 3.4,0a1.7,1.7 0 1,0 -3.4,0 M1070.7,657.7a1.7,1.7 0 1,0 3.4,0a1.7,1.7 0 1,0 -3.4,0 M1072.5,656.2a1.7,1.7 0 1,0 3.4,0a1.7,1.7 0 1,0 -3.4,0 M1056.2,660.3a1.7,1.7 0 1,0 3.4,0a1.7,1.7 0 1,0 -3.4,0 M1055.8,660.0a1.7,1.7 0 1,0 3.4,0a1.7,1.7 0 1,0 -3.4,0 M1096.4,671.0a1.7,1.7 0 1,0 3.4,0a1.7,1.7 0 1,0 -3.4,0 M1097.9,670.3a1.7,1.7 0 1,0 3.4,0a1.7,1.7 0 1,0 -3.4,0 M1092.9,662.1a1.7,1.7 0 1,0 3.4,0a1.7,1.7 0 1,0 -3.4,0 M1089.8,709.5a1.7,1.7 0 1,0 3.4,0a1.7,1.7 0 1,0 -3.4,0 M1065.5,713.5a1.7,1.7 0 1,0 3.4,0a1.7,1.7 0 1,0 -3.4,0 M1070.1,708.8a1.7,1.7 0 1,0 3.4,0a1.7,1.7 0 1,0 -3.4,0 M1069.5,708.0a1.7,1.7 0 1,0 3.4,0a1.7,1.7 0 1,0 -3.4,0 M1075.4,709.0a1.7,1.7 0 1,0 3.4,0a1.7,1.7 0 1,0 -3.4,0 M1076.4,709.6a1.7,1.7 0 1,0 3.4,0a1.7,1.7 0 1,0 -3.4,0 M1064.7,708.3a1.7,1.7 0 1,0 3.4,0a1.7,1.7 0 1,0 -3.4,0 M1065.5,709.9a1.7,1.7 0 1,0 3.4,0a1.7,1.7 0 1,0 -3.4,0 M1079.5,712.2a1.7,1.7 0 1,0 3.4,0a1.7,1.7 0 1,0 -3.4,0 M1077.6,712.6a1.7,1.7 0 1,0 3.4,0a1.7,1.7 0 1,0 -3.4,0 M1070.2,714.1a1.7,1.7 0 1,0 3.4,0a1.7,1.7 0 1,0 -3.4,0 M1075.4,712.5a1.7,1.7 0 1,0 3.4,0a1.7,1.7 0 1,0 -3.4,0 M1088.7,715.5a1.7,1.7 0 1,0 3.4,0a1.7,1.7 0 1,0 -3.4,0 M1084.2,711.4a1.7,1.7 0 1,0 3.4,0a1.7,1.7 0 1,0 -3.4,0 M1071.8,774.1a1.7,1.7 0 1,0 3.4,0a1.7,1.7 0 1,0 -3.4,0 M1062.5,781.7a1.7,1.7 0 1,0 3.4,0a1.7,1.7 0 1,0 -3.4,0 M1040.8,780.2a1.7,1.7 0 1,0 3.4,0a1.7,1.7 0 1,0 -3.4,0 M1051.4,780.3a1.7,1.7 0 1,0 3.4,0a1.7,1.7 0 1,0 -3.4,0 M1061.8,772.3a1.7,1.7 0 1,0 3.4,0a1.7,1.7 0 1,0 -3.4,0 M1072.5,783.7a1.7,1.7 0 1,0 3.4,0a1.7,1.7 0 1,0 -3.4,0 M1056.5,689.4a1.7,1.7 0 1,0 3.4,0a1.7,1.7 0 1,0 -3.4,0 M1048.9,694.2a1.7,1.7 0 1,0 3.4,0a1.7,1.7 0 1,0 -3.4,0 M1062.7,691.3a1.7,1.7 0 1,0 3.4,0a1.7,1.7 0 1,0 -3.4,0 M1052.7,692.7a1.7,1.7 0 1,0 3.4,0a1.7,1.7 0 1,0 -3.4,0 M1067.6,687.6a1.7,1.7 0 1,0 3.4,0a1.7,1.7 0 1,0 -3.4,0 M1067.0,688.9a1.7,1.7 0 1,0 3.4,0a1.7,1.7 0 1,0 -3.4,0 M1059.3,685.7a1.7,1.7 0 1,0 3.4,0a1.7,1.7 0 1,0 -3.4,0 M1058.1,684.4a1.7,1.7 0 1,0 3.4,0a1.7,1.7 0 1,0 -3.4,0 M1062.3,697.3a1.7,1.7 0 1,0 3.4,0a1.7,1.7 0 1,0 -3.4,0 M1064.4,683.5a1.7,1.7 0 1,0 3.4,0a1.7,1.7 0 1,0 -3.4,0 M1059.2,693.3a1.7,1.7 0 1,0 3.4,0a1.7,1.7 0 1,0 -3.4,0 M1049.1,687.4a1.7,1.7 0 1,0 3.4,0a1.7,1.7 0 1,0 -3.4,0 M1048.6,688.9a1.7,1.7 0 1,0 3.4,0a1.7,1.7 0 1,0 -3.4,0 M1062.6,680.5a1.7,1.7 0 1,0 3.4,0a1.7,1.7 0 1,0 -3.4,0 M1067.8,695.0a1.7,1.7 0 1,0 3.4,0a1.7,1.7 0 1,0 -3.4,0 M1057.2,682.7a1.7,1.7 0 1,0 3.4,0a1.7,1.7 0 1,0 -3.4,0 M1054.2,697.7a1.7,1.7 0 1,0 3.4,0a1.7,1.7 0 1,0 -3.4,0 M1057.6,695.6a1.7,1.7 0 1,0 3.4,0a1.7,1.7 0 1,0 -3.4,0 M1059.4,694.2a1.7,1.7 0 1,0 3.4,0a1.7,1.7 0 1,0 -3.4,0" fill="none" stroke="#f00" stroke-width="1.1"/>
</svg>
<svg class="abs" style="left:14px;top:827px" width="302" height="244" viewBox="14 827 302 244">
<rect x="14" y="827" width="302" height="244" fill="#e0ebc8"/>
<path d="M14.0,990.0 L30.0,985.0 L80.0,995.0 L84.0,1040.0 L60.0,1050.0 L14.0,1045.0Z" fill="#d3e2bd"/>
<path d="M296.0,870.0 L316.0,860.0 L316.0,960.0 L300.0,950.0Z" fill="#d2e2bb"/>
<path d="M90.0,850.0 L130.0,842.0 L150.0,870.0 L140.0,900.0 L100.0,905.0 L85.0,880.0Z" fill="#d9e6c1"/>
<path d="M235.0,860.0 L265.0,850.0 L275.0,880.0 L260.0,900.0 L240.0,895.0Z" fill="#d8e5c0"/>
<path d="M250.0,985.0 L290.0,975.0 L300.0,1010.0 L280.0,1040.0 L255.0,1030.0Z" fill="#d6e4bf"/>
<path d="M129.0,828.0 L167.0,828.0 L160.0,841.0 L135.0,842.0Z" fill="#dfe5ec"/>
<path d="M283.0,895.0 L300.0,893.0 L300.0,902.0 L284.0,902.0Z" fill="#e8ecef"/>
<path d="M14.0,838.0 L36.0,840.0 L38.0,852.0 L25.0,856.0 L14.0,853.0Z" fill="#f0d2b3"/>
<path d="M14.0,880.0 L30.0,876.0 L36.0,884.0 L22.0,890.0 L14.0,892.0Z" fill="#f0d2b3"/>
<path d="M181.0,828.0 L196.0,828.0 L197.0,842.0 L183.0,845.0Z" fill="#f0d2b3"/>
<path d="M95.0,1011.0 L124.0,1010.0 L126.0,1022.0 L100.0,1022.0Z" fill="#f0d2b3"/>
<path d="M238.0,972.0 L262.0,970.0 L272.0,985.0 L270.0,1000.0 L245.0,1000.0Z" fill="#f0d2b3"/>
<path d="M200.0,1030.0 L238.0,1028.0 L242.0,1071.0 L198.0,1071.0Z" fill="#f0d2b3"/>
<path d="M298.0,1018.0 L316.0,1016.0 L316.0,1036.0 L300.0,1036.0Z" fill="#f0d2b3"/>
<path d="M14.0,1048.0 L36.0,1046.0 L40.0,1071.0 L14.0,1071.0Z" fill="#f0d2b3"/>
<path d="M118.0,868.0 L126.0,866.0 L128.0,878.0 L120.0,880.0Z" fill="#f0d2b3"/>
<path d="M282.0,1015.0 L296.0,1012.0 L296.0,1028.0 L284.0,1028.0Z" fill="#f0d2b3"/>
<path d="M203.0,972.0 L226.0,970.0 L234.0,1000.0 L236.0,1034.0 L210.0,1035.0Z" fill="#e6eaef"/>
<path d="M62.0,929.8 L83.5,915.4 L105.0,909.5 L126.5,902.3 L143.2,901.1 L152.7,915.4 L155.1,927.4 L171.8,939.3 L176.6,963.2 L167.0,967.9 L138.4,972.7 L119.3,987.0 L102.6,982.3 L78.7,979.9 L76.4,967.9 L69.2,948.8Z" fill="#cdd6e8" stroke="#aeb8c8" stroke-width="0.6"/>
<path d="M124.1,886.8 L138.4,865.3 L171.8,853.4 L181.3,843.9 L200.4,842.7 L207.6,834.3 L229.1,839.1 L245.8,851.0 L262.5,867.7 L264.8,891.6 L262.5,920.2 L260.1,939.3 L257.7,953.6 L238.6,958.4 L214.7,958.4 L202.8,963.2 L200.4,987.0 L200.4,1034.7 L195.7,1046.7 L176.6,1049.1 L167.0,1053.8 L145.5,1049.1 L133.6,1015.7 L119.3,987.0 L138.4,972.7 L167.0,967.9 L176.6,963.2 L171.8,939.3 L155.1,927.4 L152.7,915.4 L143.2,901.1 L124.1,903.5Z" fill="#aee0ec" stroke="#9ab8c8" stroke-width="0.6"/>
<path d="M207.0,836.0 L229.0,839.0 L246.0,851.0 L262.0,868.0 L265.0,892.0 L262.0,915.0 L225.0,905.0 L210.0,870.0Z" fill="#bcdcea"/>
<path d="M119.0,987.0 L138.0,973.0 L167.0,968.0 L176.0,963.0 L200.0,987.0 L200.0,1035.0 L196.0,1047.0 L167.0,1054.0 L145.0,1049.0 L134.0,1016.0Z" fill="#b6dcec"/>
<ellipse cx="188" cy="982" rx="7" ry="9" fill="#9fd6f2"/>
<path d="M138.0,880.0 L170.0,875.0 L200.0,872.0 L235.0,868.0 L262.0,870.0" fill="none" stroke="#96adbd" stroke-width="0.7"/>
<path d="M125.0,902.0 L160.0,898.0 L200.0,893.0 L262.0,892.0" fill="none" stroke="#96adbd" stroke-width="0.7"/>
<path d="M150.0,915.0 L200.0,912.0 L262.0,915.0" fill="none" stroke="#96adbd" stroke-width="0.7"/>
<path d="M172.0,939.0 L210.0,935.0 L258.0,940.0" fill="none" stroke="#96adbd" stroke-width="0.7"/>
<path d="M172.0,855.0 L175.0,900.0 L180.0,940.0" fill="none" stroke="#96adbd" stroke-width="0.7"/>
<path d="M200.0,843.0 L198.0,880.0 L196.0,930.0 L200.0,960.0" fill="none" stroke="#96adbd" stroke-width="0.7"/>
<path d="M229.0,840.0 L228.0,880.0 L232.0,930.0" fill="none" stroke="#96adbd" stroke-width="0.7"/>
<path d="M150.0,865.0 L152.0,900.0" fill="none" stroke="#96adbd" stroke-width="0.7"/>
<path d="M84.0,915.0 L88.0,950.0 L92.0,980.0" fill="none" stroke="#96adbd" stroke-width="0.7"/>
<path d="M105.0,910.0 L108.0,945.0 L110.0,982.0" fill="none" stroke="#96adbd" stroke-width="0.7"/>
<path d="M127.0,902.0 L130.0,940.0 L133.0,975.0" fill="none" stroke="#96adbd" stroke-width="0.7"/>
<path d="M70.0,950.0 L120.0,943.0 L172.0,940.0" fill="none" stroke="#96adbd" stroke-width="0.7"/>
<path d="M138.0,973.0 L160.0,1010.0 L175.0,1049.0" fill="none" stroke="#96adbd" stroke-width="0.7"/>
<path d="M167.0,968.0 L180.0,1000.0 L196.0,1047.0" fill="none" stroke="#96adbd" stroke-width="0.7"/>
<path d="M140.0,1000.0 L180.0,995.0 L200.0,995.0" fill="none" stroke="#96adbd" stroke-width="0.7"/>
<path d="M150.0,1025.0 L200.0,1020.0" fill="none" stroke="#96adbd" stroke-width="0.7"/>
<path d="M180.0,880.0 L215.0,900.0 L245.0,905.0" fill="none" stroke="#96adbd" stroke-width="0.7"/>
<path d="M150.0,930.0 L185.0,925.0 L230.0,950.0" fill="none" stroke="#96adbd" stroke-width="0.7"/>
<path d="M42.9,996.6 L54.9,1001.3 L69.2,1018.0 L83.5,1034.7 L83.5,1046.7 L71.6,1049.1 L59.7,1046.7 L35.8,1049.1 L21.5,1041.9 L21.5,1030.0 L38.2,1022.8 L40.6,1006.1Z" fill="#a7d5ef"/>
<path d="M95.4,1034.7 L112.1,1030.0 L128.8,1034.7 L131.2,1046.7 L119.3,1053.8 L100.2,1051.4Z" fill="#a7d5ef"/>
<ellipse cx="136" cy="1027" rx="4" ry="4.5" fill="#a7d5ef"/>
<ellipse cx="108" cy="1069" rx="7" ry="3" fill="#a7d5ef"/>
<path d="M14.3,831.9 L35.8,839.1 L59.7,848.6 L76.4,843.9 L90.7,829.5 L119.3,828.4 L138.4,834.3 L152.7,855.8" fill="none" stroke="#9aa0a8" stroke-width="2.2"/>
<path d="M14.3,831.9 L35.8,839.1 L59.7,848.6 L76.4,843.9 L90.7,829.5 L119.3,828.4 L138.4,834.3 L152.7,855.8" fill="none" stroke="#e8e8e8" stroke-width="0.8" stroke-dasharray="2 2"/>
<path d="M198.0,828.4 L200.4,843.9 L179.0,903.5 L190.9,939.3 L202.8,963.2 L214.7,987.0 L226.7,1034.7 L231.4,1069.3" fill="none" stroke="#9aa0a8" stroke-width="2.2"/>
<path d="M198.0,828.4 L200.4,843.9 L179.0,903.5 L190.9,939.3 L202.8,963.2 L214.7,987.0 L226.7,1034.7 L231.4,1069.3" fill="none" stroke="#e8e8e8" stroke-width="0.8" stroke-dasharray="2 2"/>
<path d="M207.6,972.7 L238.6,970.3 L276.8,932.1 L291.1,910.7 L315.0,909.5" fill="none" stroke="#9aa0a8" stroke-width="2.2"/>
<path d="M207.6,972.7 L238.6,970.3 L276.8,932.1 L291.1,910.7 L315.0,909.5" fill="none" stroke="#e8e8e8" stroke-width="0.8" stroke-dasharray="2 2"/>
<path d="M95.4,1022.8 L119.3,1015.7 L140.8,1020.4 L157.5,1030.0 L171.8,1049.1 L174.2,1069.3" fill="none" stroke="#9aa0a8" stroke-width="2.2"/>
<path d="M95.4,1022.8 L119.3,1015.7 L140.8,1020.4 L157.5,1030.0 L171.8,1049.1 L174.2,1069.3" fill="none" stroke="#e8e8e8" stroke-width="0.8" stroke-dasharray="2 2"/>
<path d="M269.6,1058.6 L315.0,1030.0" fill="none" stroke="#9aa0a8" stroke-width="2.2"/>
<path d="M269.6,1058.6 L315.0,1030.0" fill="none" stroke="#e8e8e8" stroke-width="0.8" stroke-dasharray="2 2"/>
<path d="M28.6,1068.1 L66.8,1061.0 L95.4,1034.7 L119.3,1020.4" fill="none" stroke="#9aa0a8" stroke-width="2.2"/>
<path d="M28.6,1068.1 L66.8,1061.0 L95.4,1034.7 L119.3,1020.4" fill="none" stroke="#e8e8e8" stroke-width="0.8" stroke-dasharray="2 2"/>
<path d="M200.0,960.0 L203.0,972.0" fill="none" stroke="#9aa0a8" stroke-width="2.2"/>
<path d="M200.0,960.0 L203.0,972.0" fill="none" stroke="#e8e8e8" stroke-width="0.8" stroke-dasharray="2 2"/>
<path d="M248.1,853.4 L252.9,839.1 L264.8,830.7 L315.0,829.5" fill="none" stroke="#a8a890" stroke-width="1.8"/>
<path d="M248.1,853.4 L252.9,839.1 L264.8,830.7 L315.0,829.5" fill="none" stroke="#f0e468" stroke-width="1"/>
<path d="M264.8,925.0 L276.8,963.2 L300.6,1001.3 L307.8,1034.7 L291.1,1053.8 L243.4,1056.2 L238.6,1069.3" fill="none" stroke="#a8a890" stroke-width="1.8"/>
<path d="M264.8,925.0 L276.8,963.2 L300.6,1001.3 L307.8,1034.7 L291.1,1053.8 L243.4,1056.2 L238.6,1069.3" fill="none" stroke="#f0e468" stroke-width="1"/>
<path d="M205.2,963.2 L224.3,972.7 L233.8,991.8 L241.0,1022.8 L243.4,1056.2" fill="none" stroke="#a8a890" stroke-width="1.8"/>
<path d="M205.2,963.2 L224.3,972.7 L233.8,991.8 L241.0,1022.8 L243.4,1056.2" fill="none" stroke="#f0e468" stroke-width="1"/>
<path d="M85.9,879.7 L107.4,871.3 L133.6,874.9" fill="none" stroke="#a8a890" stroke-width="1.8"/>
<path d="M85.9,879.7 L107.4,871.3 L133.6,874.9" fill="none" stroke="#f0e468" stroke-width="1"/>
<path d="M15.5,836.7 L47.7,831.9 L59.7,829.5" fill="none" stroke="#a8a890" stroke-width="1.8"/>
<path d="M15.5,836.7 L47.7,831.9 L59.7,829.5" fill="none" stroke="#f0e468" stroke-width="1"/>
<path d="M90.7,1030.0 L107.4,1020.4 L133.6,1018.0" fill="none" stroke="#a8a890" stroke-width="1.8"/>
<path d="M90.7,1030.0 L107.4,1020.4 L133.6,1018.0" fill="none" stroke="#f0e468" stroke-width="1"/>
<path d="M69.2,828.4 L78.7,839.1 L83.5,867.7 L90.7,910.7" fill="none" stroke="#e2504a" stroke-width="3"/>
<path d="M69.2,828.4 L78.7,839.1 L83.5,867.7 L90.7,910.7" fill="none" stroke="#f5d34a" stroke-width="1"/>
<path d="M90.7,910.7 L102.6,953.6 L121.7,987.0" fill="none" stroke="#b9b2b8" stroke-width="2.5"/>
<path d="M137.4,1019.0 L167.0,1049.1 L174.2,1069.3" fill="none" stroke="#b9b2b8" stroke-width="2.2"/>
<path d="M121.7,987.0 L128.8,1006.1 L137.4,1019.0" fill="none" stroke="#e2504a" stroke-width="2.6"/>
<path d="M121.7,987.0 L128.8,1006.1 L137.4,1019.0" fill="none" stroke="#f5d34a" stroke-width="0.9"/>
<path d="M179.0,828.4 L181.3,839.1 L183.7,846.2" fill="none" stroke="#d8373c" stroke-width="3"/>
<path d="M198.0,968.0 L195.7,984.6 L186.1,1069.3" fill="none" stroke="#b84048" stroke-width="1.8"/>
<path d="M264.8,904.7 L276.8,903.5 L315.0,904.0" fill="none" stroke="#a83a40" stroke-width="2.2"/>
<path d="M248.0,851.0 L258.0,862.0 L268.0,880.0 L278.0,890.0 L295.0,898.0 L316.0,902.0" fill="none" stroke="#8ab4d8" stroke-width="0.8"/>
<path d="M245.0,975.0 L262.0,985.0 L258.0,1000.0 L275.0,1012.0 L276.0,1040.0 L290.0,1062.0" fill="none" stroke="#8ab4d8" stroke-width="0.8"/>
<path d="M258,975 l3,6 l-2,4 Z" fill="#88c870"/><path d="M296,1060 l4,5 l-3,4Z" fill="#88c870"/>
<ellipse cx="62" cy="895" rx="27" ry="16" fill="#000" opacity="0.05"/>
<path d="M35.5,846 H84 V882 A24.3,24 0 0,1 35.5,882 Z" fill="#eef0f2" stroke="#8a8a8a" stroke-width="0.8"/>
<path d="M35.5,846.3 H84 V891 H35.5 Z" fill="#e25360"/>
<path d="M37.5,889 L38,858 L41,851 L44,858 L44.5,889Z M47,889 L47.5,854 L50.5,847 L53.5,854 L54,889Z M65.5,889 L66,854 L69,847 L72,854 L72.5,889Z M75,889 L75.5,858 L78.5,851 L81.5,858 L82,889Z" fill="#f2f4f6"/>
<path d="M40,858 V880 M49.5,856 V880 M69,856 V880 M78.5,858 V880" stroke="#9aa6b0" stroke-width="1"/>
<path d="M44,892 V876 A16,15 0 0,1 76,876 V892Z" fill="#e8eef2" stroke="#aab" stroke-width="0.6"/>
<path d="M51,892 V878 A9,9 0 0,1 69,878 V892Z" fill="#e05050"/>
<path d="M53,880 A7,7 0 0,1 67,880" fill="none" stroke="#e8d040" stroke-width="1.5"/>
<circle cx="60" cy="880" r="4" fill="#4a4a4a"/><circle cx="60" cy="880.5" r="2.2" fill="#c8c0b0"/>
<rect x="52" y="885" width="16" height="6" fill="#8cae58"/>
<path d="M59.5,848 V858 M57,851 H62" stroke="#7a9a50" stroke-width="1"/>
<path d="M37,891 H82 A22.5,15 0 0,1 37,891Z" fill="#eceff2" stroke="#7d7d80" stroke-width="1"/>
<path d="M42,895 H78 M45,900 H75" stroke="#c8ccd0" stroke-width="1"/>
<text x="28.6" y="1036.5" font-family="Liberation Sans" font-weight="bold" font-size="18.5" letter-spacing="1.2" fill="#75787f" stroke="#75787f" stroke-width="0.9">GIS</text>
<text x="28.6" y="1055" font-family="Liberation Sans" font-weight="bold" font-size="16.5" letter-spacing="1.8" fill="#75787f" stroke="#75787f" stroke-width="0.9">Merseburg</text>
</svg>
<div class="abs" style="left:14px;top:827px;width:302px;height:244px;border:1px solid #cfe3f3"></div>
<div class="abs" style="left:525px;top:11px;width:565px;height:329px;background:#fff;border:1px solid #1883d7"></div>
<div class="abs" style="left:525px;top:11px;width:565px;height:31px;background:#0078d7"></div>
<svg class="abs" style="left:535px;top:21px" width="12" height="9" viewBox="0 0 13 10"><path d="M0.5,3 Q6.5,-1.5 12.5,3 Q8,4 6.8,9.5 Q5.5,4 0.5,3Z" fill="#4e8f74"/></svg>
<div class="t" style="left:555px;top:20px;font-size:12px;color:#fff">Statistik</div>
<svg class="abs" style="left:1067px;top:20px" width="13" height="13" viewBox="0 0 13 13"><path d="M1,1 L12,12 M12,1 L1,12" stroke="#fff" stroke-width="1.2"/></svg>
<div class="abs" style="left:537px;top:54px;width:29px;height:28px;background:#e1e1e1;border:1px solid #adadad"></div>
<svg class="abs" style="left:538px;top:54px" width="28" height="28" viewBox="0 0 28 28"><path d="M8.47,8.84 A7.5,7.5 0 0,1 20.94,15.41" fill="none" stroke="#7b7b7b" stroke-width="1.7"/><path d="M16.91,11.94 L20.94,15.59 L24.97,11.19" fill="none" stroke="#7b7b7b" stroke-width="1.7" stroke-linejoin="round"/><path d="M19.06,19.06 A7.5,7.5 0 0,1 6.97,12.50" fill="none" stroke="#7b7b7b" stroke-width="1.7"/><path d="M2.94,16.62 L6.97,12.41 L11.00,15.88" fill="none" stroke="#7b7b7b" stroke-width="1.7" stroke-linejoin="round"/></svg>
<div class="abs" style="left:1003px;top:54px;width:75px;height:28px;background:#e1e1e1;border:2px solid #0078d7"></div>
<div class="abs" style="left:1006px;top:57px;width:69px;height:22px;border:1px dotted #000"></div>
<div class="t" style="left:1003px;width:75px;text-align:center;top:62px;font-size:11px;color:#000">Schließen</div>
<div class="abs" style="left:536px;top:89px;width:543px;height:239px;background:#fff;border:1px solid #828790"></div>
<div class="abs" style="left:577px;top:96px;width:9px;height:8px;background:#000;border-radius:50%"></div>
<div class="t" style="left:590px;top:94px;font-size:12.25px;color:#000">Auswahl enthält 1228 Objekte (Grafische Elemente: Flächen=0, Linien=1227, Punkte=0)</div>
<div class="abs" style="left:577px;top:110px;width:9px;height:8px;background:#000;border-radius:50%"></div>
<div class="t" style="left:590px;top:108px;font-size:11.6px;font-weight:bold;color:#000">Linien</div>
<div class="abs" style="left:602px;top:123px;width:9px;height:9px;border:1px solid #000;border-radius:50%"></div>
<div class="t" style="left:615px;top:122px;font-size:12.5px;color:#000">Gesamtlänge=255.074,77m</div>
<div class="abs" style="left:602px;top:137px;width:9px;height:9px;border:1px solid #000;border-radius:50%"></div>
<div class="t" style="left:615px;top:136px;font-size:12.25px;color:#000">Vereinigung enthält Geometrien: 1824</div>
<div class="abs" style="left:627px;top:151px;width:9px;height:9px;border:1px solid #000"></div>
<div class="t" style="left:640px;top:150px;font-size:12.25px;color:#000">Länge der Vereinigung: 254.152,21m</div>
<div class="abs" style="left:1432px;top:3px;width:485px;height:542px;background:#fff;border:1px solid #8c8c8c"></div>
<svg class="abs" style="left:1441px;top:12px" width="13" height="10" viewBox="0 0 13 10"><path d="M0.5,3 Q6.5,-1.5 12.5,3 Q8,4 6.8,9.5 Q5.5,4 0.5,3Z" fill="#2e8a6c"/></svg>
<div class="t" style="left:1461px;top:12px;font-size:12px;color:#8a8a8a">eingeschränkter Kartenmanager</div>
<div class="abs" style="left:1795px;top:17px;width:12px;height:1px;background:#777"></div>
<div class="abs" style="left:1841px;top:11px;width:12px;height:12px;border:1px solid #777"></div>
<svg class="abs" style="left:1886px;top:11px" width="13" height="13" viewBox="0 0 13 13"><path d="M1,1 L12,12 M12,1 L1,12" stroke="#777" stroke-width="1.1"/></svg>
<div class="abs" style="left:1433px;top:33px;width:482px;height:300px;border-top:2px solid #6e6e6e;border-left:2px solid #6e6e6e;border-right:1px solid #8c94a0;border-bottom:1px solid #8c94a0;background:#fff"></div>
<div class="abs" style="left:1898px;top:35px;width:16px;height:297px;background:#f0f0f0"></div>
<div class="abs" style="left:1899px;top:82px;width:14px;height:139px;background:#cdcdcd"></div>
<svg class="abs" style="left:1900px;top:40px" width="10" height="8" viewBox="0 0 10 8"><path d="M1,6 L5,2 L9,6" fill="none" stroke="#555" stroke-width="1.6"/></svg>
<svg class="abs" style="left:1900px;top:318px" width="10" height="8" viewBox="0 0 10 8"><path d="M1,2 L5,6 L9,2" fill="none" stroke="#555" stroke-width="1.6"/></svg>
<div class="abs" style="left:1435px;top:35px;width:463px;height:297px;overflow:hidden"><div class="abs" style="left:7px;top:0px;width:1px;height:188px;background-image:linear-gradient(#888 50%,transparent 50%);background-size:1px 2px"></div><div class="abs" style="left:26px;top:190px;width:1px;height:120px;background-image:linear-gradient(#888 50%,transparent 50%);background-size:1px 2px"></div><div class="abs" style="left:45px;top:222px;width:1px;height:58px;background-image:linear-gradient(#888 50%,transparent 50%);background-size:1px 2px"></div><div class="abs" style="left:8px;top:8px;width:11px;height:1px;background-image:linear-gradient(90deg,#888 50%,transparent 50%);background-size:2px 1px"></div><svg class="abs" style="left:19px;top:2px" width="14" height="12" viewBox="0 0 14 12"><path d="M7,1 L13,3.6 L7,6.2 L1,3.6 Z" fill="none" stroke="#7a7a7a" stroke-width="1.1"/><path d="M1,5.8 L7,8.4 L13,5.8" fill="none" stroke="#2b8fdc" stroke-width="1.1"/><path d="M1,8.2 L7,10.8 L13,8.2" fill="none" stroke="#7a7a7a" stroke-width="1.1"/></svg><div class="t" style="left:37px;top:2px;font-size:12.6px;color:#000">Baumkataster</div><div class="abs" style="left:8px;top:24px;width:11px;height:1px;background-image:linear-gradient(90deg,#888 50%,transparent 50%);background-size:2px 1px"></div><svg class="abs" style="left:19px;top:18px" width="14" height="12" viewBox="0 0 14 12"><path d="M7,1 L13,3.6 L7,6.2 L1,3.6 Z" fill="none" stroke="#7a7a7a" stroke-width="1.1"/><path d="M1,5.8 L7,8.4 L13,5.8" fill="none" stroke="#2b8fdc" stroke-width="1.1"/><path d="M1,8.2 L7,10.8 L13,8.2" fill="none" stroke="#7a7a7a" stroke-width="1.1"/></svg><div class="t" style="left:37px;top:18px;font-size:12.6px;color:#000">B-Pläne (vom Landkreis)</div><div class="abs" style="left:8px;top:40px;width:13px;height:1px;background-image:linear-gradient(90deg,#888 50%,transparent 50%);background-size:2px 1px"></div><svg class="abs" style="left:3px;top:36px" width="9" height="9" viewBox="0 0 9 9"><rect x="0.5" y="0.5" width="8" height="8" fill="#f4f4f4" stroke="#999" stroke-width="1"/><path d="M2,4.5 H7" stroke="#223a8a" stroke-width="1"/><path d="M4.5,2 V7" stroke="#223a8a" stroke-width="1"/></svg><svg class="abs" style="left:22px;top:34px" width="11" height="12" viewBox="0 0 11 12"><rect x="0.5" y="0.5" width="9.5" height="11" fill="#eee" stroke="#2b8fdc" stroke-width="1"/><rect x="7" y="6" width="3.5" height="6" fill="#2b8fdc"/></svg><div class="t" style="left:37px;top:34px;font-size:12.6px;color:#000">Kontroll-Manager</div><div class="abs" style="left:8px;top:56px;width:13px;height:1px;background-image:linear-gradient(90deg,#888 50%,transparent 50%);background-size:2px 1px"></div><svg class="abs" style="left:3px;top:52px" width="9" height="9" viewBox="0 0 9 9"><rect x="0.5" y="0.5" width="8" height="8" fill="#f4f4f4" stroke="#999" stroke-width="1"/><path d="M2,4.5 H7" stroke="#223a8a" stroke-width="1"/><path d="M4.5,2 V7" stroke="#223a8a" stroke-width="1"/></svg><svg class="abs" style="left:22px;top:50px" width="11" height="12" viewBox="0 0 11 12"><rect x="0.5" y="0.5" width="9.5" height="11" fill="#eee" stroke="#2b8fdc" stroke-width="1"/><rect x="7" y="6" width="3.5" height="6" fill="#2b8fdc"/></svg><div class="t" style="left:37px;top:50px;font-size:12.6px;color:#000">Luftbilder historisch</div><div class="abs" style="left:8px;top:72px;width:11px;height:1px;background-image:linear-gradient(90deg,#888 50%,transparent 50%);background-size:2px 1px"></div><svg class="abs" style="left:19px;top:66px" width="14" height="12" viewBox="0 0 14 12"><path d="M7,1 L13,3.6 L7,6.2 L1,3.6 Z" fill="none" stroke="#7a7a7a" stroke-width="1.1"/><path d="M1,5.8 L7,8.4 L13,5.8" fill="none" stroke="#2b8fdc" stroke-width="1.1"/><path d="M1,8.2 L7,10.8 L13,8.2" fill="none" stroke="#7a7a7a" stroke-width="1.1"/></svg><div class="t" style="left:37px;top:66px;font-size:12.6px;color:#000">OpenStreetMap (von IT consult Halle)</div><div class="abs" style="left:8px;top:88px;width:11px;height:1px;background-image:linear-gradient(90deg,#888 50%,transparent 50%);background-size:2px 1px"></div><svg class="abs" style="left:19px;top:82px" width="14" height="12" viewBox="0 0 14 12"><path d="M7,1 L13,3.6 L7,6.2 L1,3.6 Z" fill="none" stroke="#7a7a7a" stroke-width="1.1"/><path d="M1,5.8 L7,8.4 L13,5.8" fill="none" stroke="#2b8fdc" stroke-width="1.1"/><path d="M1,8.2 L7,10.8 L13,8.2" fill="none" stroke="#7a7a7a" stroke-width="1.1"/></svg><div class="t" style="left:37px;top:82px;font-size:12.6px;color:#000">OpenStreetMap (von WhereGroup)</div><div class="abs" style="left:8px;top:104px;width:11px;height:1px;background-image:linear-gradient(90deg,#888 50%,transparent 50%);background-size:2px 1px"></div><svg class="abs" style="left:19px;top:98px" width="14" height="12" viewBox="0 0 14 12"><path d="M7,1 L13,3.6 L7,6.2 L1,3.6 Z" fill="none" stroke="#7a7a7a" stroke-width="1.1"/><path d="M1,5.8 L7,8.4 L13,5.8" fill="none" stroke="#2b8fdc" stroke-width="1.1"/><path d="M1,8.2 L7,10.8 L13,8.2" fill="none" stroke="#7a7a7a" stroke-width="1.1"/></svg><div class="t" style="left:37px;top:98px;font-size:12.6px;color:#000">Schulung</div><div class="abs" style="left:8px;top:120px;width:11px;height:1px;background-image:linear-gradient(90deg,#888 50%,transparent 50%);background-size:2px 1px"></div><svg class="abs" style="left:19px;top:114px" width="14" height="12" viewBox="0 0 14 12"><path d="M7,1 L13,3.6 L7,6.2 L1,3.6 Z" fill="none" stroke="#7a7a7a" stroke-width="1.1"/><path d="M1,5.8 L7,8.4 L13,5.8" fill="none" stroke="#2b8fdc" stroke-width="1.1"/><path d="M1,8.2 L7,10.8 L13,8.2" fill="none" stroke="#7a7a7a" stroke-width="1.1"/></svg><div class="t" style="left:37px;top:114px;font-size:12.6px;color:#000">Stadtbeleuchtung</div><div class="abs" style="left:8px;top:136px;width:11px;height:1px;background-image:linear-gradient(90deg,#888 50%,transparent 50%);background-size:2px 1px"></div><svg class="abs" style="left:19px;top:130px" width="14" height="12" viewBox="0 0 14 12"><path d="M7,1 L13,3.6 L7,6.2 L1,3.6 Z" fill="none" stroke="#7a7a7a" stroke-width="1.1"/><path d="M1,5.8 L7,8.4 L13,5.8" fill="none" stroke="#2b8fdc" stroke-width="1.1"/><path d="M1,8.2 L7,10.8 L13,8.2" fill="none" stroke="#7a7a7a" stroke-width="1.1"/></svg><div class="t" style="left:37px;top:130px;font-size:12.6px;color:#000">TK25 Test</div><div class="abs" style="left:8px;top:152px;width:13px;height:1px;background-image:linear-gradient(90deg,#888 50%,transparent 50%);background-size:2px 1px"></div><svg class="abs" style="left:3px;top:148px" width="9" height="9" viewBox="0 0 9 9"><rect x="0.5" y="0.5" width="8" height="8" fill="#f4f4f4" stroke="#999" stroke-width="1"/><path d="M2,4.5 H7" stroke="#223a8a" stroke-width="1"/><path d="M4.5,2 V7" stroke="#223a8a" stroke-width="1"/></svg><svg class="abs" style="left:22px;top:146px" width="11" height="12" viewBox="0 0 11 12"><rect x="0.5" y="0.5" width="9.5" height="11" fill="#eee" stroke="#2b8fdc" stroke-width="1"/><rect x="7" y="6" width="3.5" height="6" fill="#2b8fdc"/></svg><div class="t" style="left:37px;top:146px;font-size:12.6px;color:#000">Topografische Karten</div><div class="abs" style="left:8px;top:168px;width:11px;height:1px;background-image:linear-gradient(90deg,#888 50%,transparent 50%);background-size:2px 1px"></div><svg class="abs" style="left:19px;top:162px" width="14" height="12" viewBox="0 0 14 12"><path d="M7,1 L13,3.6 L7,6.2 L1,3.6 Z" fill="none" stroke="#7a7a7a" stroke-width="1.1"/><path d="M1,5.8 L7,8.4 L13,5.8" fill="none" stroke="#2b8fdc" stroke-width="1.1"/><path d="M1,8.2 L7,10.8 L13,8.2" fill="none" stroke="#7a7a7a" stroke-width="1.1"/></svg><div class="t" style="left:37px;top:162px;font-size:12.6px;color:#000">Überflutungsflächen Juni 2013 (vom LVermGeo LSA)</div><div class="abs" style="left:8px;top:184px;width:13px;height:1px;background-image:linear-gradient(90deg,#888 50%,transparent 50%);background-size:2px 1px"></div><svg class="abs" style="left:3px;top:180px" width="9" height="9" viewBox="0 0 9 9"><rect x="0.5" y="0.5" width="8" height="8" fill="#f4f4f4" stroke="#999" stroke-width="1"/><path d="M2,4.5 H7" stroke="#223a8a" stroke-width="1"/></svg><svg class="abs" style="left:22px;top:178px" width="11" height="12" viewBox="0 0 11 12"><rect x="0.5" y="0.5" width="9.5" height="11" fill="#eee" stroke="#2b8fdc" stroke-width="1"/><rect x="7" y="6" width="3.5" height="6" fill="#2b8fdc"/></svg><div class="t" style="left:37px;top:178px;font-size:12.6px;color:#000">Verkehrsinfrastruktur</div><div class="abs" style="left:27px;top:200px;width:11px;height:1px;background-image:linear-gradient(90deg,#888 50%,transparent 50%);background-size:2px 1px"></div><svg class="abs" style="left:38px;top:194px" width="14" height="12" viewBox="0 0 14 12"><path d="M7,1 L13,3.6 L7,6.2 L1,3.6 Z" fill="none" stroke="#7a7a7a" stroke-width="1.1"/><path d="M1,5.8 L7,8.4 L13,5.8" fill="none" stroke="#2b8fdc" stroke-width="1.1"/><path d="M1,8.2 L7,10.8 L13,8.2" fill="none" stroke="#7a7a7a" stroke-width="1.1"/></svg><div class="t" style="left:56px;top:194px;font-size:12.6px;color:#000">Stadtmöblierung</div><div class="abs" style="left:27px;top:216px;width:13px;height:1px;background-image:linear-gradient(90deg,#888 50%,transparent 50%);background-size:2px 1px"></div><svg class="abs" style="left:22px;top:212px" width="9" height="9" viewBox="0 0 9 9"><rect x="0.5" y="0.5" width="8" height="8" fill="#f4f4f4" stroke="#999" stroke-width="1"/><path d="M2,4.5 H7" stroke="#223a8a" stroke-width="1"/></svg><svg class="abs" style="left:41px;top:210px" width="11" height="12" viewBox="0 0 11 12"><rect x="0.5" y="0.5" width="9.5" height="11" fill="#eee" stroke="#2b8fdc" stroke-width="1"/><rect x="7" y="6" width="3.5" height="6" fill="#2b8fdc"/></svg><div class="t" style="left:56px;top:210px;font-size:12.6px;color:#000">Straßenkataster</div><div class="abs" style="left:46px;top:232px;width:11px;height:1px;background-image:linear-gradient(90deg,#888 50%,transparent 50%);background-size:2px 1px"></div><svg class="abs" style="left:57px;top:226px" width="14" height="12" viewBox="0 0 14 12"><path d="M7,1 L13,3.6 L7,6.2 L1,3.6 Z" fill="none" stroke="#7a7a7a" stroke-width="1.1"/><path d="M1,5.8 L7,8.4 L13,5.8" fill="none" stroke="#2b8fdc" stroke-width="1.1"/><path d="M1,8.2 L7,10.8 L13,8.2" fill="none" stroke="#7a7a7a" stroke-width="1.1"/></svg><div class="t" style="left:75px;top:226px;font-size:12.6px;color:#000">Belags-/Verkehrsflächen</div><div class="abs" style="left:46px;top:248px;width:11px;height:1px;background-image:linear-gradient(90deg,#888 50%,transparent 50%);background-size:2px 1px"></div><svg class="abs" style="left:57px;top:242px" width="14" height="12" viewBox="0 0 14 12"><path d="M7,1 L13,3.6 L7,6.2 L1,3.6 Z" fill="none" stroke="#7a7a7a" stroke-width="1.1"/><path d="M1,5.8 L7,8.4 L13,5.8" fill="none" stroke="#2b8fdc" stroke-width="1.1"/><path d="M1,8.2 L7,10.8 L13,8.2" fill="none" stroke="#7a7a7a" stroke-width="1.1"/></svg><div class="abs" style="left:74px;top:240px;width:89px;height:16px;background:#20739a"></div><div class="t" style="left:75px;top:242px;font-size:12.6px;color:#fff">Straßenachsen</div><div class="abs" style="left:46px;top:264px;width:11px;height:1px;background-image:linear-gradient(90deg,#888 50%,transparent 50%);background-size:2px 1px"></div><svg class="abs" style="left:57px;top:258px" width="14" height="12" viewBox="0 0 14 12"><path d="M7,1 L13,3.6 L7,6.2 L1,3.6 Z" fill="none" stroke="#7a7a7a" stroke-width="1.1"/><path d="M1,5.8 L7,8.4 L13,5.8" fill="none" stroke="#2b8fdc" stroke-width="1.1"/><path d="M1,8.2 L7,10.8 L13,8.2" fill="none" stroke="#7a7a7a" stroke-width="1.1"/></svg><div class="abs" style="left:74px;top:256px;width:87px;height:16px;background:#20739a"></div><div class="t" style="left:75px;top:258px;font-size:12.6px;color:#fff">Straßenknoten</div><div class="abs" style="left:46px;top:280px;width:11px;height:1px;background-image:linear-gradient(90deg,#888 50%,transparent 50%);background-size:2px 1px"></div><svg class="abs" style="left:57px;top:274px" width="14" height="12" viewBox="0 0 14 12"><path d="M7,1 L13,3.6 L7,6.2 L1,3.6 Z" fill="none" stroke="#7a7a7a" stroke-width="1.1"/><path d="M1,5.8 L7,8.4 L13,5.8" fill="none" stroke="#2b8fdc" stroke-width="1.1"/><path d="M1,8.2 L7,10.8 L13,8.2" fill="none" stroke="#7a7a7a" stroke-width="1.1"/></svg><div class="t" style="left:75px;top:274px;font-size:12.6px;color:#000">Straßenzug</div><div class="abs" style="left:27px;top:296px;width:11px;height:1px;background-image:linear-gradient(90deg,#888 50%,transparent 50%);background-size:2px 1px"></div><svg class="abs" style="left:38px;top:290px" width="14" height="12" viewBox="0 0 14 12"><path d="M7,1 L13,3.6 L7,6.2 L1,3.6 Z" fill="none" stroke="#7a7a7a" stroke-width="1.1"/><path d="M1,5.8 L7,8.4 L13,5.8" fill="none" stroke="#2b8fdc" stroke-width="1.1"/><path d="M1,8.2 L7,10.8 L13,8.2" fill="none" stroke="#7a7a7a" stroke-width="1.1"/></svg><div class="t" style="left:56px;top:290px;font-size:12.6px;color:#000">Verkehrsschilder</div></div>
<svg class="abs" style="left:1436px;top:333px" width="50" height="6" viewBox="0 0 50 6"><path d="M2,5 L5,1 L8,5Z M12,1 L15,5 L18,1Z" fill="#222"/></svg>
<div class="abs" style="left:1433px;top:337px;width:451px;height:2px;background:#6e6e6e"></div>
<div class="abs" style="left:1432px;top:337px;width:2px;height:172px;background:#6e6e6e"></div>
<div class="abs" style="left:1436px;top:345px;width:195px;height:161px;border:1px solid #dcdcdc"></div>
<div class="t" style="left:1439px;top:339px;font-size:11px;color:#111;background:#fff;padding:0 3px">Selektierte Karten</div>
<div class="abs" style="left:1636px;top:338px;width:2px;height:171px;background:#6e6e6e"></div>
<svg class="abs" style="left:1633px;top:339px" width="6" height="20" viewBox="0 0 6 20"><path d="M4,0 L1,3 L4,6Z M2,13 L5,16 L2,19Z" fill="#222"/></svg>
<div class="abs" style="left:1640px;top:345px;width:243px;height:161px;border:1px solid #dcdcdc"></div>
<div class="t" style="left:1643px;top:339px;font-size:11px;color:#111;background:#fff;padding:0 3px">Styles</div>
<svg class="abs" style="left:1442px;top:359px" width="15" height="13" viewBox="0 0 14 12"><path d="M7,1 L13,3.6 L7,6.2 L1,3.6 Z" fill="none" stroke="#7a7a7a" stroke-width="1.1"/><path d="M1,5.8 L7,8.4 L13,5.8" fill="none" stroke="#2b8fdc" stroke-width="1.1"/><path d="M1,8.2 L7,10.8 L13,8.2" fill="none" stroke="#7a7a7a" stroke-width="1.1"/></svg>
<div class="t" style="left:1460px;top:358px;font-size:12.8px;color:#000">Straßenknoten</div>
<svg class="abs" style="left:1442px;top:377px" width="15" height="13" viewBox="0 0 14 12"><path d="M7,1 L13,3.6 L7,6.2 L1,3.6 Z" fill="none" stroke="#7a7a7a" stroke-width="1.1"/><path d="M1,5.8 L7,8.4 L13,5.8" fill="none" stroke="#2b8fdc" stroke-width="1.1"/><path d="M1,8.2 L7,10.8 L13,8.2" fill="none" stroke="#7a7a7a" stroke-width="1.1"/></svg>
<div class="t" style="left:1460px;top:376px;font-size:12.8px;color:#000">Straßenachsen</div>
<svg class="abs" style="left:1887px;top:344px" width="28" height="28" viewBox="0 0 28 28"><path d="M2,15 L14,9.5 L26,15 L14,20.5Z" fill="none" stroke="#2b8fdc" stroke-width="1.6"/><path d="M2,20 L14,25.5 L26,20" fill="none" stroke="#7a7a7a" stroke-width="1.6"/><path d="M14,17 V2 M10,6 L14,2 L18,6" fill="none" stroke="#2b8fdc" stroke-width="1.6"/></svg>
<svg class="abs" style="left:1887px;top:381px" width="28" height="28" viewBox="0 0 28 28"><path d="M2,7 L14,1.5 L26,7 L14,12.5Z" fill="none" stroke="#7a7a7a" stroke-width="1.6"/><path d="M2,11 L14,16.5 L26,11" fill="none" stroke="#2b8fdc" stroke-width="1.6"/><path d="M14,12 V26 M10,22 L14,26 L18,22" fill="none" stroke="#2b8fdc" stroke-width="1.6"/></svg>
<svg class="abs" style="left:1887px;top:418px" width="28" height="28" viewBox="0 0 28 28"><path d="M2,6 L14,1 L26,6 L14,11Z" fill="none" stroke="#7a7a7a" stroke-width="1.6"/><path d="M2,10 L14,15 L26,10" fill="none" stroke="#7a7a7a" stroke-width="1.6"/><path d="M10.5,18 L17.5,25 M17.5,18 L10.5,25" fill="none" stroke="#2b8fdc" stroke-width="1.8"/></svg>
<div class="abs" style="left:1889px;top:452px;width:23px;height:1px;background:#888"></div>
<div class="abs" style="left:1887px;top:456px;width:27px;height:36px;background:#cce4f7;border:1px solid #99c9ef"></div>
<svg class="abs" style="left:1887px;top:460px" width="28" height="28" viewBox="0 0 28 28"><rect x="7" y="7" width="14" height="14" rx="2" fill="#fff" stroke="#2b8fdc" stroke-width="1.8"/><rect x="11" y="11" width="6" height="6" fill="none" stroke="#7a7a7a" stroke-width="1.4"/><path d="M14,1 V4 M14,24 V27 M1,14 H4 M24,14 H27" stroke="#7a7a7a" stroke-width="1.2"/></svg>
<div class="abs" style="left:1521px;top:517px;width:137px;height:21px;background:#e1e1e1;border:1px solid #adadad"></div>
<div class="t" style="left:1521px;width:137px;text-align:center;top:522px;font-size:11px;color:#000">Anhängen &amp; Schließen</div>
<div class="abs" style="left:1665px;top:517px;width:79px;height:21px;background:#e1e1e1;border:1px solid #adadad"></div>
<div class="t" style="left:1665px;width:79px;text-align:center;top:522px;font-size:11px;color:#000">Anhängen</div>
<div class="abs" style="left:1751px;top:517px;width:75px;height:21px;background:#e1e1e1;border:1px solid #adadad"></div>
<div class="t" style="left:1751px;width:75px;text-align:center;top:522px;font-size:11px;color:#000">Schließen</div>
<div class="abs" style="left:0;top:1076px;width:1667px;height:1px;background:#1a1a1a"></div>
</body></html>
